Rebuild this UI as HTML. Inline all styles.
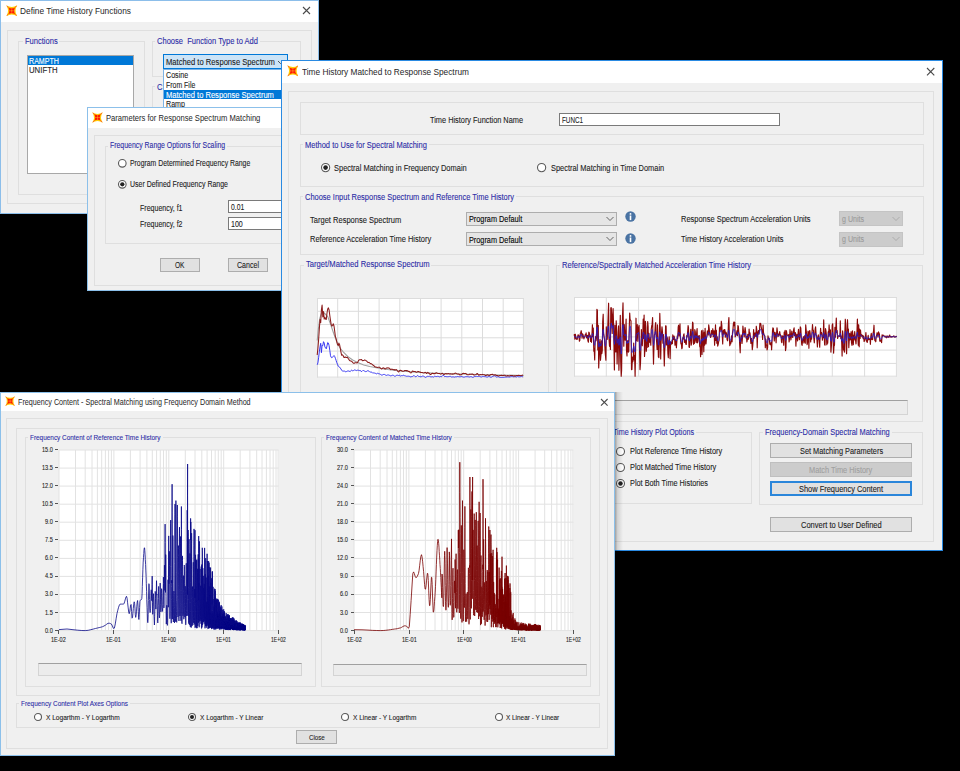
<!DOCTYPE html><html><head><meta charset="utf-8"><style>html,body{margin:0;padding:0;width:960px;height:771px;overflow:hidden;background:#000}.r,.t{position:absolute}.t{font-family:"Liberation Sans",sans-serif;white-space:pre;line-height:1;transform-origin:0 0;-webkit-text-stroke:0.1px currentColor}</style></head><body>
<div class="r" style="left:0.00px;top:0.00px;width:319.00px;height:214.00px;background:#f0f0f0;border:1px solid #8cbeea;box-sizing:border-box;"></div>
<div class="r" style="left:1.00px;top:1.00px;width:317.00px;height:21.00px;background:#fff;"></div>
<svg class="r" style="left:6.0px;top:4.5px" width="11.5" height="11.5" viewBox="0 0 24 24"><path d="M0.5,0.5 Q12,8 23.5,0.5 Q16,12 23.5,23.5 Q12,16 0.5,23.5 Q8,12 0.5,0.5Z" fill="#ffd200"/><path d="M1,1 L5,3.5 L3.5,5Z M23,1 L19,3.5 L20.5,5Z M1,23 L5,20.5 L3.5,19Z M23,23 L19,20.5 L20.5,19Z" fill="#ff4a3a"/><path d="M4.5,4.5 Q12,9.5 19.5,4.5 Q14.5,12 19.5,19.5 Q12,14.5 4.5,19.5 Q9.5,12 4.5,4.5Z" fill="#ff1800"/><path d="M12,5V19M5,12H19" stroke="#ff9a50" stroke-width="0.9"/><circle cx="12" cy="12" r="1.4" fill="#ffa000"/></svg>
<div class="t" style="left:20.20px;top:7px;font-size:9.3px;color:#262626;transform:scaleX(0.8948);-webkit-text-stroke:0">Define Time History Functions</div>
<svg class="r" style="left:301.7px;top:6.3px" width="9" height="9"><path d="M1,1 L8,8 M8,1 L1,8" stroke="#4a4a4a" stroke-width="1.1"/></svg>
<div class="r" style="left:7.00px;top:30.00px;width:305.00px;height:174.00px;border:1px solid #dfdfdf;box-sizing:border-box;"></div>
<div class="r" style="left:18.00px;top:41.00px;width:127.00px;height:154.00px;border:1px solid #dfdfdf;box-sizing:border-box;"></div>
<div class="r" style="left:22.50px;top:38.00px;width:36.70px;height:6.00px;background:#f0f0f0;"></div>
<div class="t" style="left:24.50px;top:37px;font-size:8.5px;color:#2c2ca6;transform:scaleX(0.8873)">Functions</div>
<div class="r" style="left:26.50px;top:54.60px;width:107.50px;height:119.90px;background:#fff;border:1px solid #a8a8a8;box-sizing:border-box;"></div>
<div class="r" style="left:27.50px;top:56.00px;width:105.50px;height:9.20px;background:#0078d7;"></div>
<div class="t" style="left:28.80px;top:57px;font-size:8.5px;color:#fff;transform:scaleX(0.8359)">RAMPTH</div>
<div class="t" style="left:28.80px;top:66px;font-size:8.5px;color:#1c1c1c;transform:scaleX(0.9146)">UNIFTH</div>
<div class="r" style="left:152.00px;top:41.00px;width:149.00px;height:36.00px;border:1px solid #dfdfdf;box-sizing:border-box;"></div>
<div class="r" style="left:155.40px;top:38.00px;width:105.00px;height:6.00px;background:#f0f0f0;"></div>
<div class="t" style="left:157.40px;top:37px;font-size:8.5px;color:#2c2ca6;transform:scaleX(0.8881)">Choose  Function Type to Add</div>
<div class="r" style="left:152.00px;top:86.00px;width:149.00px;height:125.00px;border:1px solid #dfdfdf;box-sizing:border-box;"></div>
<div class="r" style="left:155.00px;top:83.00px;width:15.00px;height:7.00px;background:#f0f0f0;"></div>
<div class="t" style="left:157.00px;top:83px;font-size:8.5px;color:#2c2ca6;transform:scaleX(0.8960)">C</div>
<div class="r" style="left:162.90px;top:54.30px;width:125.40px;height:14.90px;background:#cce4f7;border:1px solid #0078d7;box-sizing:border-box;"></div>
<div class="t" style="left:165.90px;top:58px;font-size:8.5px;color:#1c1c1c;transform:scaleX(0.8968)">Matched to Response Spectrum</div>
<svg class="r" style="left:277px;top:60px" width="7" height="5"><path d="M1,1 L3.5,3.5 L6,1" fill="none" stroke="#444" stroke-width="0.9"/></svg>
<div class="r" style="left:162.90px;top:69.00px;width:119.10px;height:43.00px;background:#fff;border:1px solid #7db3e6;box-sizing:border-box;"></div>
<div class="t" style="left:165.50px;top:71px;font-size:8.5px;color:#1c1c1c;transform:scaleX(0.8390)">Cosine</div>
<div class="t" style="left:165.50px;top:81px;font-size:8.5px;color:#1c1c1c;transform:scaleX(0.8164)">From File</div>
<div class="r" style="left:163.90px;top:90.20px;width:117.10px;height:9.30px;background:#0078d7;"></div>
<div class="t" style="left:165.50px;top:91px;font-size:8.5px;color:#fff;transform:scaleX(0.8886)">Matched to Response Spectrum</div>
<div class="t" style="left:165.50px;top:100px;font-size:8.5px;color:#1c1c1c;transform:scaleX(0.8379)">Ramp</div>
<div class="r" style="left:87.00px;top:107.00px;width:213.00px;height:184.00px;background:#f0f0f0;border:1px solid #8cc0ea;box-sizing:border-box;"></div>
<div class="r" style="left:88.00px;top:108.00px;width:211.00px;height:20.00px;background:#fff;"></div>
<svg class="r" style="left:92.3px;top:112.0px" width="11.0" height="11.0" viewBox="0 0 24 24"><path d="M0.5,0.5 Q12,8 23.5,0.5 Q16,12 23.5,23.5 Q12,16 0.5,23.5 Q8,12 0.5,0.5Z" fill="#ffd200"/><path d="M1,1 L5,3.5 L3.5,5Z M23,1 L19,3.5 L20.5,5Z M1,23 L5,20.5 L3.5,19Z M23,23 L19,20.5 L20.5,19Z" fill="#ff4a3a"/><path d="M4.5,4.5 Q12,9.5 19.5,4.5 Q14.5,12 19.5,19.5 Q12,14.5 4.5,19.5 Q9.5,12 4.5,4.5Z" fill="#ff1800"/><path d="M12,5V19M5,12H19" stroke="#ff9a50" stroke-width="0.9"/><circle cx="12" cy="12" r="1.4" fill="#ffa000"/></svg>
<div class="t" style="left:106.20px;top:114px;font-size:9.3px;color:#262626;transform:scaleX(0.8184);-webkit-text-stroke:0">Parameters for Response Spectrum Matching</div>
<div class="r" style="left:94.00px;top:135.00px;width:203.00px;height:151.00px;border:1px solid #dfdfdf;box-sizing:border-box;"></div>
<div class="r" style="left:105.00px;top:146.00px;width:192.00px;height:98.00px;border:1px solid #dfdfdf;box-sizing:border-box;"></div>
<div class="r" style="left:108.00px;top:142.60px;width:119.20px;height:6.00px;background:#f0f0f0;"></div>
<div class="t" style="left:110.00px;top:141px;font-size:8.5px;color:#2c2ca6;transform:scaleX(0.8127)">Frequency Range Options for Scaling</div>
<svg class="r" style="left:116.50px;top:158.00px" width="10.6" height="10.6"><circle cx="5.30" cy="5.30" r="3.80" fill="#fff" stroke="#5a5a5a" stroke-width="1.1"/></svg>
<div class="t" style="left:130.40px;top:159px;font-size:8.5px;color:#1c1c1c;transform:scaleX(0.8077)">Program Determined Frequency Range</div>
<svg class="r" style="left:116.50px;top:178.90px" width="10.6" height="10.6"><circle cx="5.30" cy="5.30" r="3.80" fill="#fff" stroke="#5a5a5a" stroke-width="1.1"/><circle cx="5.30" cy="5.30" r="2.15" fill="#222"/></svg>
<div class="t" style="left:130.40px;top:180px;font-size:8.5px;color:#1c1c1c;transform:scaleX(0.8190)">User Defined Frequency Range</div>
<div class="t" style="left:140.20px;top:204px;font-size:8.5px;color:#1c1c1c;transform:scaleX(0.8278)">Frequency, f1</div>
<div class="t" style="left:140.20px;top:220px;font-size:8.5px;color:#1c1c1c;transform:scaleX(0.8278)">Frequency, f2</div>
<div class="r" style="left:228.00px;top:200.20px;width:72.00px;height:12.60px;background:#fff;border:1px solid #7a7a7a;box-sizing:border-box;"></div>
<div class="t" style="left:230.50px;top:203px;font-size:8.5px;color:#1c1c1c;transform:scaleX(0.7979)">0.01</div>
<div class="r" style="left:228.00px;top:216.50px;width:72.00px;height:13.00px;background:#fff;border:1px solid #7a7a7a;box-sizing:border-box;"></div>
<div class="t" style="left:230.50px;top:220px;font-size:8.5px;color:#1c1c1c;transform:scaleX(0.8320)">100</div>
<div class="r" style="left:160.40px;top:258.20px;width:39.40px;height:13.70px;background:#e1e1e1;border:1px solid #adadad;box-sizing:border-box;"></div>
<div class="t" style="left:175.35px;top:261px;font-size:8.5px;color:#1c1c1c;transform:scaleX(0.7735)">OK</div>
<div class="r" style="left:228.40px;top:258.20px;width:39.40px;height:13.70px;background:#e1e1e1;border:1px solid #adadad;box-sizing:border-box;"></div>
<div class="t" style="left:237.10px;top:261px;font-size:8.5px;color:#1c1c1c;transform:scaleX(0.8315)">Cancel</div>
<div class="r" style="left:281.00px;top:60.00px;width:662.00px;height:491.00px;background:#f0f0f0;border:1px solid #2a8ae2;box-sizing:border-box;"></div>
<div class="r" style="left:282.00px;top:61.00px;width:660.00px;height:21.50px;background:#fff;"></div>
<svg class="r" style="left:286.8px;top:65.3px" width="11.7" height="11.7" viewBox="0 0 24 24"><path d="M0.5,0.5 Q12,8 23.5,0.5 Q16,12 23.5,23.5 Q12,16 0.5,23.5 Q8,12 0.5,0.5Z" fill="#ffd200"/><path d="M1,1 L5,3.5 L3.5,5Z M23,1 L19,3.5 L20.5,5Z M1,23 L5,20.5 L3.5,19Z M23,23 L19,20.5 L20.5,19Z" fill="#ff4a3a"/><path d="M4.5,4.5 Q12,9.5 19.5,4.5 Q14.5,12 19.5,19.5 Q12,14.5 4.5,19.5 Q9.5,12 4.5,4.5Z" fill="#ff1800"/><path d="M12,5V19M5,12H19" stroke="#ff9a50" stroke-width="0.9"/><circle cx="12" cy="12" r="1.4" fill="#ffa000"/></svg>
<div class="t" style="left:301.50px;top:68px;font-size:9.3px;color:#262626;transform:scaleX(0.8917);-webkit-text-stroke:0">Time History Matched to Response Spectrum</div>
<svg class="r" style="left:925.9px;top:67.2px" width="9.3" height="9.3"><path d="M1,1 L8.3,8.3 M8.3,1 L1,8.3" stroke="#4a4a4a" stroke-width="1.1"/></svg>
<div class="r" style="left:288.00px;top:91.00px;width:646.00px;height:451.00px;border:1px solid #dfdfdf;box-sizing:border-box;"></div>
<div class="r" style="left:300.00px;top:102.00px;width:624.00px;height:33.00px;border:1px solid #dfdfdf;box-sizing:border-box;"></div>
<div class="t" style="left:429.90px;top:116px;font-size:8.5px;color:#1c1c1c;transform:scaleX(0.8661)">Time History Function Name</div>
<div class="r" style="left:559.00px;top:113.00px;width:221.00px;height:13.20px;background:#fff;border:1px solid #7a7a7a;box-sizing:border-box;"></div>
<div class="t" style="left:561.50px;top:116px;font-size:8.5px;color:#1c1c1c;transform:scaleX(0.7411)">FUNC1</div>
<div class="r" style="left:300.00px;top:144.00px;width:624.00px;height:43.00px;border:1px solid #dfdfdf;box-sizing:border-box;"></div>
<div class="r" style="left:303.40px;top:141.40px;width:125.90px;height:6.00px;background:#f0f0f0;"></div>
<div class="t" style="left:305.40px;top:141px;font-size:8.5px;color:#2c2ca6;transform:scaleX(0.8836)">Method to Use for Spectral Matching</div>
<svg class="r" style="left:319.60px;top:162.10px" width="11.2" height="11.2"><circle cx="5.60" cy="5.60" r="4.10" fill="#fff" stroke="#5a5a5a" stroke-width="1.1"/><circle cx="5.60" cy="5.60" r="2.30" fill="#222"/></svg>
<div class="t" style="left:334.20px;top:164px;font-size:8.5px;color:#1c1c1c;transform:scaleX(0.8777)">Spectral Matching in Frequency Domain</div>
<svg class="r" style="left:535.70px;top:162.40px" width="11.2" height="11.2"><circle cx="5.60" cy="5.60" r="4.10" fill="#fff" stroke="#5a5a5a" stroke-width="1.1"/></svg>
<div class="t" style="left:550.50px;top:164px;font-size:8.5px;color:#1c1c1c;transform:scaleX(0.8745)">Spectral Matching in Time Domain</div>
<div class="r" style="left:300.00px;top:196.00px;width:624.00px;height:59.00px;border:1px solid #dfdfdf;box-sizing:border-box;"></div>
<div class="r" style="left:303.00px;top:193.30px;width:213.00px;height:6.00px;background:#f0f0f0;"></div>
<div class="t" style="left:305.00px;top:193px;font-size:8.5px;color:#2c2ca6;transform:scaleX(0.8794)">Choose Input Response Spectrum and Reference Time History</div>
<div class="t" style="left:309.60px;top:216px;font-size:8.5px;color:#1c1c1c;transform:scaleX(0.8854)">Target Response Spectrum</div>
<div class="t" style="left:309.60px;top:235px;font-size:8.5px;color:#1c1c1c;transform:scaleX(0.8816)">Reference Acceleration Time History</div>
<div class="r" style="left:465.80px;top:211.50px;width:151.20px;height:14.50px;background:#e5e5e5;border:1px solid #adadad;box-sizing:border-box;"></div>
<div class="t" style="left:468.80px;top:215px;font-size:8.5px;color:#000;transform:scaleX(0.8596)">Program Default</div>
<svg class="r" style="left:606.0px;top:215.8px" width="8" height="6"><path d="M0.5,1 L4,4.5 L7.5,1" fill="none" stroke="#555" stroke-width="0.9"/></svg>
<div class="r" style="left:465.80px;top:232.00px;width:151.20px;height:14.30px;background:#e5e5e5;border:1px solid #adadad;box-sizing:border-box;"></div>
<div class="t" style="left:468.80px;top:236px;font-size:8.5px;color:#000;transform:scaleX(0.8596)">Program Default</div>
<svg class="r" style="left:606.0px;top:236.2px" width="8" height="6"><path d="M0.5,1 L4,4.5 L7.5,1" fill="none" stroke="#555" stroke-width="0.9"/></svg>
<svg class="r" style="left:624.75px;top:210.80px" width="11" height="11"><circle cx="5.5" cy="5.5" r="5.2" fill="#4a73a3"/><circle cx="5.5" cy="2.9" r="0.95" fill="#fff"/><rect x="4.7" y="4.5" width="1.6" height="4.6" fill="#fff"/></svg>
<svg class="r" style="left:624.75px;top:233.30px" width="11" height="11"><circle cx="5.5" cy="5.5" r="5.2" fill="#4a73a3"/><circle cx="5.5" cy="2.9" r="0.95" fill="#fff"/><rect x="4.7" y="4.5" width="1.6" height="4.6" fill="#fff"/></svg>
<div class="t" style="left:680.80px;top:215px;font-size:8.5px;color:#1c1c1c;transform:scaleX(0.8785)">Response Spectrum Acceleration Units</div>
<div class="t" style="left:680.80px;top:235px;font-size:8.5px;color:#1c1c1c;transform:scaleX(0.8694)">Time History Acceleration Units</div>
<div class="r" style="left:839.30px;top:211.40px;width:63.70px;height:14.90px;background:#cccccc;border:1px solid #c4c4c4;box-sizing:border-box;"></div>
<div class="t" style="left:842.30px;top:215px;font-size:8.5px;color:#9a9a9a;transform:scaleX(0.8316)">g Units</div>
<svg class="r" style="left:892.0px;top:215.9px" width="8" height="6"><path d="M0.5,1 L4,4.5 L7.5,1" fill="none" stroke="#a8a8a8" stroke-width="0.9"/></svg>
<div class="r" style="left:839.30px;top:232.00px;width:63.70px;height:14.60px;background:#cccccc;border:1px solid #c4c4c4;box-sizing:border-box;"></div>
<div class="t" style="left:842.30px;top:235px;font-size:8.5px;color:#9a9a9a;transform:scaleX(0.8316)">g Units</div>
<svg class="r" style="left:892.0px;top:236.3px" width="8" height="6"><path d="M0.5,1 L4,4.5 L7.5,1" fill="none" stroke="#a8a8a8" stroke-width="0.9"/></svg>
<div class="r" style="left:300.00px;top:265.00px;width:249.00px;height:156.00px;border:1px solid #dfdfdf;box-sizing:border-box;"></div>
<div class="r" style="left:303.50px;top:261.60px;width:127.70px;height:6.00px;background:#f0f0f0;"></div>
<div class="t" style="left:305.50px;top:260px;font-size:8.5px;color:#2c2ca6;transform:scaleX(0.8966)">Target/Matched Response Spectrum</div>
<div class="r" style="left:556.00px;top:265.00px;width:367.00px;height:157.00px;border:1px solid #dfdfdf;box-sizing:border-box;"></div>
<div class="r" style="left:560.20px;top:262.00px;width:193.00px;height:6.00px;background:#f0f0f0;"></div>
<div class="t" style="left:562.20px;top:261px;font-size:8.5px;color:#2c2ca6;transform:scaleX(0.8910)">Reference/Spectrally Matched Acceleration Time History</div>
<div class="r" style="left:570.00px;top:400.00px;width:337.50px;height:14.80px;background:#ececec;border:1px solid #d4d4d4;box-sizing:border-box;border-top:1px solid #a0a0a0;"></div>
<div class="r" style="left:560.00px;top:432.00px;width:192.00px;height:72.00px;border:1px solid #dfdfdf;box-sizing:border-box;"></div>
<div class="r" style="left:611.20px;top:429.00px;width:85.00px;height:6.00px;background:#f0f0f0;"></div>
<div class="t" style="left:613.20px;top:428px;font-size:8.5px;color:#2c2ca6;transform:scaleX(0.8433)">Time History Plot Options</div>
<svg class="r" style="left:614.80px;top:445.70px" width="11.0" height="11.0"><circle cx="5.50" cy="5.50" r="4.00" fill="#fff" stroke="#5a5a5a" stroke-width="1.1"/></svg>
<div class="t" style="left:629.50px;top:447px;font-size:8.5px;color:#1c1c1c;transform:scaleX(0.8713)">Plot Reference Time History</div>
<svg class="r" style="left:614.80px;top:461.70px" width="11.0" height="11.0"><circle cx="5.50" cy="5.50" r="4.00" fill="#fff" stroke="#5a5a5a" stroke-width="1.1"/></svg>
<div class="t" style="left:629.50px;top:463px;font-size:8.5px;color:#1c1c1c;transform:scaleX(0.8700)">Plot Matched Time History</div>
<svg class="r" style="left:614.80px;top:477.80px" width="11.0" height="11.0"><circle cx="5.50" cy="5.50" r="4.00" fill="#fff" stroke="#5a5a5a" stroke-width="1.1"/><circle cx="5.50" cy="5.50" r="2.25" fill="#222"/></svg>
<div class="t" style="left:629.50px;top:479px;font-size:8.5px;color:#1c1c1c;transform:scaleX(0.8600)">Plot Both Time Histories</div>
<div class="r" style="left:759.00px;top:432.00px;width:164.00px;height:73.00px;border:1px solid #dfdfdf;box-sizing:border-box;"></div>
<div class="r" style="left:763.30px;top:429.10px;width:128.70px;height:6.00px;background:#f0f0f0;"></div>
<div class="t" style="left:765.30px;top:428px;font-size:8.5px;color:#2c2ca6;transform:scaleX(0.8740)">Frequency-Domain Spectral Matching</div>
<div class="r" style="left:770.00px;top:443.20px;width:142.10px;height:14.70px;background:#e1e1e1;border:1px solid #adadad;box-sizing:border-box;"></div>
<div class="t" style="left:799.50px;top:447px;font-size:8.5px;color:#1c1c1c;transform:scaleX(0.8665)">Set Matching Parameters</div>
<div class="r" style="left:770.00px;top:462.10px;width:142.10px;height:14.60px;background:#cccccc;border:1px solid #bfbfbf;box-sizing:border-box;"></div>
<div class="t" style="left:809.45px;top:466px;font-size:8.5px;color:#a0a0a0;transform:scaleX(0.8689)">Match Time History</div>
<div class="r" style="left:770.00px;top:481.20px;width:142.10px;height:14.60px;background:#e1e1e1;border:2px solid #2b86da;box-sizing:border-box;"></div>
<div class="t" style="left:799.05px;top:485px;font-size:8.5px;color:#1c1c1c;transform:scaleX(0.8757)">Show Frequency Content</div>
<div class="r" style="left:770.00px;top:516.90px;width:142.10px;height:14.80px;background:#e1e1e1;border:1px solid #adadad;box-sizing:border-box;"></div>
<div class="t" style="left:800.70px;top:521px;font-size:8.5px;color:#1c1c1c;transform:scaleX(0.8850)">Convert to User Defined</div>
<svg class="r" style="left:317.3px;top:297.5px;overflow:visible" width="206.9" height="79.6"><rect x="0" y="0" width="206.9" height="79.6" fill="#fff"/><path d="M0.5 0V79.6M20.7 0V79.6M41.4 0V79.6M62.1 0V79.6M82.8 0V79.6M103.5 0V79.6M124.1 0V79.6M144.8 0V79.6M165.5 0V79.6M186.2 0V79.6M206.4 0V79.6M0 0.5H206.9M0 13.3H206.9M0 26.5H206.9M0 39.8H206.9M0 53.1H206.9M0 66.3H206.9M0 79.1H206.9" stroke="#dcdcdc" stroke-width="1" fill="none"/><path d="M0.2 42.5L1.2 32.5L2.7 20.5L4.7 14.5L6.7 14.5L8.7 16.5L10.7 18.5L13.7 26.5L16.7 35.5L19.7 43.5L22.7 49.5L26.7 54.5L30.7 58.5L35.7 62.0L40.7 64.5L46.7 67.0L52.7 68.5L60.7 70.0L70.7 71.5L82.7 73.0L102.7 74.5L132.7 75.7L172.7 76.7L206.7 77.5" stroke="#a0a0a0" stroke-width="1.1" fill="none"/><path d="M0.2 66.8L0.9 64.9L1.6 59.8L2.3 53.9L3.0 48.8L3.7 45.3L4.4 54.7L5.1 47.2L5.8 47.6L6.5 43.7L7.2 45.0L7.9 48.9L8.6 50.0L9.3 50.8L10.0 47.8L10.7 44.5L11.4 45.1L12.1 47.7L12.8 52.3L13.5 57.7L14.2 59.3L14.9 59.8L15.6 59.2L16.3 58.4L17.0 57.5L17.7 58.5L18.4 60.3L19.1 62.4L19.8 64.7L20.5 66.3L21.2 68.2L21.9 68.6L22.6 69.1L23.3 70.1L24.0 71.0L24.7 72.4L25.4 72.9L26.1 73.1L26.8 73.1L27.5 73.1L28.2 73.5L28.9 73.9L29.6 73.5L30.3 73.1L31.0 73.0L31.7 73.0L32.4 73.3L33.1 73.7L33.8 72.7L34.5 72.2L35.2 72.6L35.9 72.9L36.6 72.5L37.3 72.0L38.0 71.9L38.7 72.3L39.4 72.6L40.1 72.2L40.8 72.2L41.5 72.3L42.2 72.6L42.9 72.5L43.6 72.6L44.3 73.6L45.0 73.3L45.7 72.6L46.4 72.5L47.1 72.8L47.8 73.3L48.5 73.6L49.2 73.5L49.9 73.3L50.6 72.7L51.3 72.8L52.0 73.2L52.7 73.9L53.4 74.1L54.1 73.8L54.8 74.3L55.5 75.0L56.2 75.1L56.9 74.7L57.6 75.1L58.3 75.3L59.0 75.5L59.7 75.9L60.4 75.3L61.1 75.4L61.8 75.8L62.5 75.9L63.2 76.1L63.9 76.8L64.6 77.1L65.3 77.0L66.0 76.8L66.7 76.4L67.4 76.4L68.1 77.1L68.8 77.0L69.5 77.4L70.2 77.1L70.9 76.9L71.6 77.0L72.3 77.3L73.0 77.4L73.7 77.9L74.4 77.7L75.1 77.3L75.8 77.2L76.5 77.4L77.2 77.9L77.9 78.4L78.6 78.0L79.3 77.4L80.0 77.5L80.7 77.2L81.4 77.5L82.1 77.2L82.8 77.5L83.5 78.0L84.2 77.7L84.9 77.6L85.6 77.8L86.3 77.1L87.0 77.2L87.7 78.0L88.4 77.9L89.1 78.1L89.8 78.3L90.5 78.2L91.2 78.2L91.9 78.2L92.6 78.4L93.3 78.8L94.0 78.8L94.7 78.6L95.4 78.5L96.1 78.0L96.8 77.7L97.5 77.8L98.2 78.6L98.9 78.9L99.6 78.2L100.3 77.5L101.0 77.8L101.7 78.4L102.4 78.5L103.1 78.6L103.8 78.8L104.5 78.6L105.2 78.1L105.9 78.2L106.6 78.2L107.3 78.6L108.0 79.2L108.7 79.4L109.4 78.9L110.1 78.4L110.8 78.3L111.5 78.4L112.2 78.2L112.9 78.4L113.6 78.8L114.3 78.9L115.0 78.6L115.7 78.8L116.4 79.1L117.1 78.6L117.8 78.1L118.5 78.4L119.2 78.6L119.9 78.4L120.6 78.3L121.3 78.3L122.0 78.8L122.7 78.8L123.4 78.5L124.1 78.6L124.8 78.5L125.5 77.9L126.2 77.2L126.9 77.5L127.6 78.6L128.3 78.5L129.0 78.5L129.7 78.7L130.4 78.7L131.1 78.8L131.8 78.5L132.5 78.4L133.2 78.2L133.9 78.7L134.6 79.0L135.3 78.9L136.0 78.9L136.7 78.9L137.4 79.1L138.1 79.0L138.8 78.7L139.5 78.8L140.2 78.5L140.9 78.6L141.6 78.7L142.3 78.8L143.0 78.7L143.7 78.7L144.4 78.5L145.1 78.5L145.8 79.0L146.5 79.1L147.2 79.1L147.9 78.9L148.6 78.7L149.3 78.7L150.0 78.6L150.7 78.7L151.4 78.8L152.1 78.9L152.8 79.0L153.5 78.7L154.2 78.6L154.9 79.0L155.6 79.3L156.3 79.2L157.0 78.9L157.7 78.4L158.4 78.5L159.1 78.5L159.8 78.2L160.5 78.5L161.2 78.5L161.9 78.2L162.6 78.4L163.3 78.7L164.0 79.0L164.7 78.9L165.4 78.4L166.1 78.3L166.8 78.5L167.5 78.6L168.2 78.6L168.9 78.8L169.6 79.0L170.3 79.1L171.0 78.8L171.7 78.5L172.4 78.6L173.1 79.0L173.8 79.2L174.5 79.1L175.2 78.6L175.9 78.4L176.6 78.1L177.3 77.8L178.0 78.0L178.7 78.4L179.4 79.0L180.1 79.0L180.8 78.7L181.5 78.8L182.2 79.1L182.9 79.4L183.6 79.4L184.3 79.4L185.0 79.3L185.7 79.4L186.4 79.4L187.1 79.3L187.8 79.1L188.5 79.1L189.2 79.0L189.9 79.1L190.6 78.9L191.3 78.9L192.0 79.2L192.7 79.0L193.4 78.8L194.1 78.6L194.8 78.6L195.5 78.6L196.2 78.7L196.9 79.0L197.6 78.7L198.3 78.7L199.0 79.0L199.7 78.9L200.4 78.4L201.1 78.6L201.8 78.9L202.5 78.8L203.2 78.7L203.9 78.6L204.6 78.3L205.3 78.6L206.0 79.0" stroke="#3030f0" stroke-width="0.95" fill="none" stroke-linejoin="round"/><path d="M0.2 57.0L0.9 50.4L1.6 41.7L2.3 31.2L3.0 21.5L3.7 24.7L4.4 11.9L5.1 7.0L5.8 19.0L6.5 13.6L7.2 21.1L7.9 19.2L8.6 21.2L9.3 21.4L10.0 15.0L10.7 11.0L11.4 9.9L12.1 12.0L12.8 17.5L13.5 22.3L14.2 26.6L14.9 28.1L15.6 27.3L16.3 25.8L17.0 28.0L17.7 33.1L18.4 38.6L19.1 40.6L19.8 43.8L20.5 46.6L21.2 47.5L21.9 45.1L22.6 46.6L23.3 50.4L24.0 54.3L24.7 57.3L25.4 56.8L26.1 57.5L26.8 59.2L27.5 59.5L28.2 58.9L28.9 59.4L29.6 59.5L30.3 59.3L31.0 60.2L31.7 61.2L32.4 62.2L33.1 62.7L33.8 62.9L34.5 63.2L35.2 63.8L35.9 64.6L36.6 65.3L37.3 65.3L38.0 64.7L38.7 64.7L39.4 64.7L40.1 65.0L40.8 64.1L41.5 62.6L42.2 61.8L42.9 61.7L43.6 61.8L44.3 61.5L45.0 62.1L45.7 62.8L46.4 62.6L47.1 62.4L47.8 61.9L48.5 62.4L49.2 62.8L49.9 63.2L50.6 64.3L51.3 64.4L52.0 64.3L52.7 65.0L53.4 65.7L54.1 65.6L54.8 66.1L55.5 66.6L56.2 67.3L56.9 67.7L57.6 68.5L58.3 68.9L59.0 69.0L59.7 69.2L60.4 69.4L61.1 69.3L61.8 69.2L62.5 69.2L63.2 69.8L63.9 70.5L64.6 71.0L65.3 70.6L66.0 69.7L66.7 69.9L67.4 70.5L68.1 71.0L68.8 70.7L69.5 69.9L70.2 69.9L70.9 69.7L71.6 69.9L72.3 70.2L73.0 70.9L73.7 71.6L74.4 71.2L75.1 71.1L75.8 71.6L76.5 71.8L77.2 71.5L77.9 72.1L78.6 71.7L79.3 71.5L80.0 72.2L80.7 73.2L81.4 74.0L82.1 73.4L82.8 72.4L83.5 72.2L84.2 72.4L84.9 73.1L85.6 73.3L86.3 73.2L87.0 73.1L87.7 72.4L88.4 72.4L89.1 72.6L89.8 72.6L90.5 72.7L91.2 73.4L91.9 73.3L92.6 73.7L93.3 74.6L94.0 75.0L94.7 74.3L95.4 73.1L96.1 73.3L96.8 73.6L97.5 73.5L98.2 73.6L98.9 73.9L99.6 74.3L100.3 73.9L101.0 73.4L101.7 73.5L102.4 73.9L103.1 74.0L103.8 74.5L104.5 74.5L105.2 74.5L105.9 74.8L106.6 74.9L107.3 74.9L108.0 74.3L108.7 74.4L109.4 75.5L110.1 75.1L110.8 74.4L111.5 75.2L112.2 75.3L112.9 76.2L113.6 76.6L114.3 76.0L115.0 75.4L115.7 75.2L116.4 75.6L117.1 75.6L117.8 75.8L118.5 75.3L119.2 74.7L119.9 75.0L120.6 75.4L121.3 75.4L122.0 75.5L122.7 75.6L123.4 76.1L124.1 75.9L124.8 75.6L125.5 75.3L126.2 76.1L126.9 76.6L127.6 76.3L128.3 75.7L129.0 75.5L129.7 76.0L130.4 75.9L131.1 75.5L131.8 75.7L132.5 75.9L133.2 75.8L133.9 76.0L134.6 76.1L135.3 76.2L136.0 75.8L136.7 75.9L137.4 75.7L138.1 75.1L138.8 75.2L139.5 75.6L140.2 76.1L140.9 76.0L141.6 76.0L142.3 76.5L143.0 77.0L143.7 76.7L144.4 76.7L145.1 76.0L145.8 75.4L146.5 75.3L147.2 75.4L147.9 75.5L148.6 75.4L149.3 75.9L150.0 76.7L150.7 76.7L151.4 76.7L152.1 76.7L152.8 76.1L153.5 76.2L154.2 76.2L154.9 76.1L155.6 76.1L156.3 76.5L157.0 77.0L157.7 77.0L158.4 76.8L159.1 76.5L159.8 75.7L160.5 75.5L161.2 76.7L161.9 77.3L162.6 76.9L163.3 76.5L164.0 76.7L164.7 76.8L165.4 76.4L166.1 76.6L166.8 76.7L167.5 76.8L168.2 77.4L168.9 77.5L169.6 77.3L170.3 76.8L171.0 77.0L171.7 77.4L172.4 77.4L173.1 77.1L173.8 76.5L174.5 76.4L175.2 76.3L175.9 76.6L176.6 77.0L177.3 76.9L178.0 76.8L178.7 77.1L179.4 77.4L180.1 77.4L180.8 77.6L181.5 77.9L182.2 77.8L182.9 77.4L183.6 77.4L184.3 77.2L185.0 77.4L185.7 77.6L186.4 77.4L187.1 77.2L187.8 77.2L188.5 77.7L189.2 78.0L189.9 77.9L190.6 77.6L191.3 77.8L192.0 78.0L192.7 77.9L193.4 77.6L194.1 77.5L194.8 77.4L195.5 77.5L196.2 77.9L196.9 77.9L197.6 77.8L198.3 78.0L199.0 77.7L199.7 77.5L200.4 77.6L201.1 77.4L201.8 77.2L202.5 77.4L203.2 77.6L203.9 77.8L204.6 77.5L205.3 77.1L206.0 77.2" stroke="#8b1c1c" stroke-width="1.05" fill="none" stroke-linejoin="round"/></svg>
<svg class="r" style="left:574.4px;top:297.4px;overflow:visible" width="322.9" height="79.7"><rect x="0" y="0" width="322.9" height="79.7" fill="#fff"/><path d="M0.5 0V79.7M32.3 0V79.7M64.6 0V79.7M96.9 0V79.7M129.2 0V79.7M161.4 0V79.7M193.7 0V79.7M226.0 0V79.7M258.3 0V79.7M290.6 0V79.7M322.4 0V79.7M0 0.5H322.9M0 13.3H322.9M0 26.6H322.9M0 39.9H322.9M0 53.1H322.9M0 66.4H322.9M0 79.2H322.9" stroke="#dcdcdc" stroke-width="1" fill="none"/><path d="M0.0 38.5L0.4 37.5L0.9 42.1L1.3 37.2L1.8 39.6L2.2 41.8L2.7 42.2L3.1 42.5L3.6 40.4L4.0 37.9L4.5 38.0L4.9 38.9L5.4 44.1L5.8 43.5L6.3 36.5L6.7 35.9L7.2 33.7L7.6 36.4L8.1 41.2L8.5 36.8L9.0 37.6L9.4 39.4L9.9 41.9L10.3 40.3L10.8 39.8L11.2 37.5L11.7 38.2L12.1 35.9L12.6 40.9L13.0 38.6L13.5 38.4L13.9 43.9L14.4 45.2L14.8 35.2L15.3 35.9L15.7 39.8L16.2 38.2L16.6 44.4L17.1 39.9L17.5 45.3L18.0 36.8L18.4 27.7L18.9 39.7L19.3 31.1L19.8 54.2L20.2 51.6L20.7 63.0L21.1 45.5L21.6 39.5L22.0 43.8L22.5 40.7L22.9 12.3L23.4 13.8L23.8 53.0L24.3 28.4L24.7 71.0L25.1 61.0L25.6 45.7L26.0 42.3L26.5 63.3L26.9 58.4L27.4 43.9L27.8 56.6L28.3 53.5L28.7 24.5L29.2 17.2L29.6 37.2L30.1 39.8L30.5 42.2L31.0 52.4L31.4 58.0L31.9 63.2L32.3 29.8L32.8 39.6L33.2 42.5L33.7 33.5L34.1 20.6L34.6 6.2L35.0 41.6L35.5 49.3L35.9 40.7L36.4 52.5L36.8 10.9L37.3 10.7L37.7 20.9L38.2 36.4L38.6 19.5L39.1 11.6L39.5 25.8L40.0 50.7L40.4 72.9L40.9 28.2L41.3 46.8L41.8 55.0L42.2 23.8L42.7 35.1L43.1 66.9L43.6 48.1L44.0 41.8L44.5 28.9L44.9 73.3L45.4 54.2L45.8 38.8L46.3 18.3L46.7 64.7L47.2 79.3L47.6 73.5L48.1 37.2L48.5 19.1L49.0 5.9L49.4 29.9L49.8 49.2L50.3 27.6L50.7 37.9L51.2 43.1L51.6 36.2L52.1 22.0L52.5 53.5L53.0 58.9L53.4 44.2L53.9 43.5L54.3 55.1L54.8 54.4L55.2 32.8L55.7 16.0L56.1 22.7L56.6 23.2L57.0 24.0L57.5 72.6L57.9 72.7L58.4 60.0L58.8 65.0L59.3 60.0L59.7 46.1L60.2 63.0L60.6 58.5L61.1 79.3L61.5 59.3L62.0 21.2L62.4 43.8L62.9 33.4L63.3 27.6L63.8 44.3L64.2 30.1L64.7 31.3L65.1 28.4L65.6 54.3L66.0 72.6L66.5 66.0L66.9 52.0L67.4 32.6L67.8 43.2L68.3 48.6L68.7 40.7L69.2 22.0L69.6 41.3L70.1 18.1L70.5 59.4L71.0 52.2L71.4 24.3L71.9 30.2L72.3 54.3L72.8 47.4L73.2 50.4L73.7 24.6L74.1 29.3L74.5 49.7L75.0 36.3L75.4 45.4L75.9 42.2L76.3 40.9L76.8 48.2L77.2 32.7L77.7 29.0L78.1 27.4L78.6 20.5L79.0 45.7L79.5 67.1L79.9 52.0L80.4 38.0L80.8 37.1L81.3 28.0L81.7 25.6L82.2 39.6L82.6 44.8L83.1 52.4L83.5 27.8L84.0 44.0L84.4 60.0L84.9 60.6L85.3 44.7L85.8 16.4L86.2 29.2L86.7 62.0L87.1 45.4L87.6 34.9L88.0 29.9L88.5 35.4L88.9 46.2L89.4 37.6L89.8 50.8L90.3 69.0L90.7 54.3L91.2 47.0L91.6 28.8L92.1 29.0L92.5 48.0L93.0 39.9L93.4 41.3L93.9 56.5L94.3 60.7L94.8 43.8L95.2 39.9L95.7 48.6L96.1 61.7L96.6 44.8L97.0 45.3L97.5 47.1L97.9 44.5L98.4 46.6L98.8 37.8L99.3 39.8L99.7 42.6L100.1 39.0L100.6 41.3L101.0 48.1L101.5 42.7L101.9 44.4L102.4 50.8L102.8 45.0L103.3 38.8L103.7 41.4L104.2 30.2L104.6 28.2L105.1 39.0L105.5 34.3L106.0 26.9L106.4 40.6L106.9 46.8L107.3 45.7L107.8 51.7L108.2 51.0L108.7 40.8L109.1 42.3L109.6 37.9L110.0 36.9L110.5 45.4L110.9 43.0L111.4 43.4L111.8 47.1L112.3 47.5L112.7 38.7L113.2 40.0L113.6 35.4L114.1 28.5L114.5 30.7L115.0 49.9L115.4 50.5L115.9 43.7L116.3 37.4L116.8 32.3L117.2 48.2L117.7 45.4L118.1 36.0L118.6 25.1L119.0 26.2L119.5 47.3L119.9 45.1L120.4 46.4L120.8 32.5L121.3 34.8L121.7 43.5L122.2 45.7L122.6 36.5L123.1 31.6L123.5 45.8L124.0 44.0L124.4 39.4L124.8 38.9L125.3 38.5L125.7 49.4L126.2 50.6L126.6 59.7L127.1 41.2L127.5 33.7L128.0 57.5L128.4 47.4L128.9 33.2L129.3 42.8L129.8 54.8L130.2 35.2L130.7 48.1L131.1 31.3L131.6 43.8L132.0 46.9L132.5 40.8L132.9 39.0L133.4 33.9L133.8 34.8L134.3 38.1L134.7 27.8L135.2 31.3L135.6 36.2L136.1 38.4L136.5 40.5L137.0 39.6L137.4 33.6L137.9 34.7L138.3 37.1L138.8 31.7L139.2 39.7L139.7 35.2L140.1 33.7L140.6 48.2L141.0 41.2L141.5 27.8L141.9 43.4L142.4 33.4L142.8 46.3L143.3 39.9L143.7 49.1L144.2 47.3L144.6 44.9L145.1 43.4L145.5 30.9L146.0 29.9L146.4 30.9L146.9 34.2L147.3 24.2L147.8 28.1L148.2 37.1L148.7 47.0L149.1 34.7L149.5 33.1L150.0 36.9L150.4 32.5L150.9 32.7L151.3 40.2L151.8 35.0L152.2 35.6L152.7 37.3L153.1 42.8L153.6 43.8L154.0 37.4L154.5 25.2L154.9 20.6L155.4 40.8L155.8 48.6L156.3 45.0L156.7 46.9L157.2 43.4L157.6 38.9L158.1 44.8L158.5 35.9L159.0 31.9L159.4 26.7L159.9 25.0L160.3 28.6L160.8 25.2L161.2 39.9L161.7 38.5L162.1 38.0L162.6 35.8L163.0 33.5L163.5 38.6L163.9 28.5L164.4 29.8L164.8 35.7L165.3 37.7L165.7 47.9L166.2 55.8L166.6 42.8L167.1 37.8L167.5 39.3L168.0 46.5L168.4 41.7L168.9 29.1L169.3 32.8L169.8 35.7L170.2 40.0L170.7 34.3L171.1 30.6L171.6 34.4L172.0 41.0L172.5 39.5L172.9 44.9L173.4 41.8L173.8 37.3L174.2 42.4L174.7 40.1L175.1 32.0L175.6 38.3L176.0 35.9L176.5 41.9L176.9 46.5L177.4 41.4L177.8 44.0L178.3 52.8L178.7 49.2L179.2 41.8L179.6 32.5L180.1 41.4L180.5 39.8L181.0 35.9L181.4 37.8L181.9 39.5L182.3 29.2L182.8 33.1L183.2 50.8L183.7 36.4L184.1 34.7L184.6 33.6L185.0 37.3L185.5 33.0L185.9 26.3L186.4 26.3L186.8 26.9L187.3 31.0L187.7 32.5L188.2 34.7L188.6 42.5L189.1 28.1L189.5 35.7L190.0 37.5L190.4 38.2L190.9 39.2L191.3 50.7L191.8 42.1L192.2 47.6L192.7 48.5L193.1 52.9L193.6 50.6L194.0 38.8L194.5 42.0L194.9 41.0L195.4 42.0L195.8 47.1L196.3 46.3L196.7 47.9L197.2 45.2L197.6 52.8L198.1 43.3L198.5 33.9L198.9 30.9L199.4 31.6L199.8 36.9L200.3 43.9L200.7 35.3L201.2 35.7L201.6 39.1L202.1 45.8L202.5 37.4L203.0 30.8L203.4 34.4L203.9 39.7L204.3 37.0L204.8 39.0L205.2 37.9L205.7 34.6L206.1 36.9L206.6 38.7L207.0 38.5L207.5 45.0L207.9 45.7L208.4 38.8L208.8 42.0L209.3 39.3L209.7 48.2L210.2 35.2L210.6 37.4L211.1 33.3L211.5 53.6L212.0 50.3L212.4 33.7L212.9 37.2L213.3 37.8L213.8 38.6L214.2 38.2L214.7 37.7L215.1 45.0L215.6 40.4L216.0 32.6L216.5 38.1L216.9 42.9L217.4 38.8L217.8 34.1L218.3 40.0L218.7 40.5L219.2 36.4L219.6 33.0L220.1 30.8L220.5 38.6L221.0 36.9L221.4 35.6L221.9 49.1L222.3 40.5L222.8 37.2L223.2 40.6L223.6 44.0L224.1 36.1L224.5 32.3L225.0 39.4L225.4 42.7L225.9 39.8L226.3 29.9L226.8 31.0L227.2 39.3L227.7 47.2L228.1 48.4L228.6 43.2L229.0 41.5L229.5 39.7L229.9 45.9L230.4 41.0L230.8 38.6L231.3 46.2L231.7 27.8L232.2 33.3L232.6 37.4L233.1 47.6L233.5 45.8L234.0 34.0L234.4 36.1L234.9 51.3L235.3 34.8L235.8 33.5L236.2 36.4L236.7 45.0L237.1 40.0L237.6 42.2L238.0 34.9L238.5 27.6L238.9 32.7L239.4 33.3L239.8 41.4L240.3 45.8L240.7 39.4L241.2 31.8L241.6 29.8L242.1 37.9L242.5 38.5L243.0 43.5L243.4 49.9L243.9 40.5L244.3 37.8L244.8 41.7L245.2 43.0L245.7 50.2L246.1 39.6L246.6 31.3L247.0 37.4L247.5 35.5L247.9 37.0L248.4 43.2L248.8 40.0L249.2 40.8L249.7 22.8L250.1 36.2L250.6 47.5L251.0 48.2L251.5 31.6L251.9 33.6L252.4 37.9L252.8 47.8L253.3 45.8L253.7 46.2L254.2 34.8L254.6 39.1L255.1 27.8L255.5 34.1L256.0 39.2L256.4 32.9L256.9 55.1L257.3 50.2L257.8 42.4L258.2 28.3L258.7 26.8L259.1 37.2L259.6 56.1L260.0 49.3L260.5 48.3L260.9 30.4L261.4 40.1L261.8 31.3L262.3 21.1L262.7 35.4L263.2 33.6L263.6 41.5L264.1 39.4L264.5 38.8L265.0 38.9L265.4 39.3L265.9 39.5L266.3 23.8L266.8 41.6L267.2 38.7L267.7 45.6L268.1 59.1L268.6 33.9L269.0 37.9L269.5 53.0L269.9 51.4L270.4 55.1L270.8 36.8L271.3 22.2L271.7 27.6L272.2 52.3L272.6 56.7L273.1 34.6L273.5 22.7L273.9 34.1L274.4 32.0L274.8 50.7L275.3 42.2L275.7 36.3L276.2 42.9L276.6 41.1L277.1 34.7L277.5 45.9L278.0 48.5L278.4 33.9L278.9 37.7L279.3 47.6L279.8 38.3L280.2 42.9L280.7 34.6L281.1 39.0L281.6 43.6L282.0 46.9L282.5 39.1L282.9 36.3L283.4 22.1L283.8 39.0L284.3 48.3L284.7 27.7L285.2 49.8L285.6 32.0L286.1 41.5L286.5 33.1L287.0 38.8L287.4 37.6L287.9 39.3L288.3 39.8L288.8 38.2L289.2 41.6L289.7 39.2L290.1 44.4L290.6 44.0L291.0 42.5L291.5 39.6L291.9 35.6L292.4 42.9L292.8 44.8L293.3 45.3L293.7 41.9L294.2 38.4L294.6 42.6L295.1 42.0L295.5 42.3L296.0 41.5L296.4 47.3L296.9 38.3L297.3 36.4L297.8 42.5L298.2 41.4L298.6 42.7L299.1 36.1L299.5 34.5L300.0 28.2L300.4 39.1L300.9 43.7L301.3 43.2L301.8 44.8L302.2 39.7L302.7 37.8L303.1 35.7L303.6 37.9L304.0 40.1L304.5 34.8L304.9 36.1L305.4 37.1L305.8 44.1L306.3 44.2L306.7 43.0L307.2 42.9L307.6 45.7L308.1 37.9L308.5 39.4L309.0 38.2L309.4 38.3L309.9 38.4L310.3 39.2L310.8 39.6L311.2 40.2L311.7 39.6L312.1 38.9L312.6 40.8L313.0 40.4L313.5 39.5L313.9 38.9L314.4 40.3L314.8 40.2L315.3 39.4L315.7 38.0L316.2 40.0L316.6 39.9L317.1 39.5L317.5 40.1L318.0 39.6L318.4 39.6L318.9 39.9L319.3 39.5L319.8 38.8L320.2 39.6L320.7 40.1L321.1 40.2L321.6 39.7L322.0 39.3L322.5 39.6L322.9 39.6" stroke="#8b0a0a" stroke-width="1.15" fill="none" stroke-linejoin="round"/><path d="M0.0 39.0L0.4 39.3L0.9 39.6L1.3 39.5L1.8 39.8L2.2 40.6L2.7 41.1L3.1 40.9L3.6 40.1L4.0 39.3L4.5 39.2L4.9 40.0L5.4 41.1L5.8 40.7L6.3 38.9L6.7 37.5L7.2 37.2L7.6 38.1L8.1 38.9L8.5 38.9L9.0 38.9L9.4 39.6L9.9 40.2L10.3 40.1L10.8 39.6L11.2 38.9L11.7 38.6L12.1 38.7L12.6 39.2L13.0 39.5L13.5 40.1L13.9 41.2L14.4 40.9L14.8 39.1L15.3 38.4L15.7 39.0L16.2 40.0L16.6 40.9L17.1 41.1L17.5 40.5L18.0 38.1L18.4 36.4L18.9 37.2L19.3 39.8L19.8 44.4L20.2 48.0L20.7 48.4L21.1 45.1L21.6 41.9L22.0 40.2L22.5 35.8L22.9 30.1L23.4 31.3L23.8 37.7L24.3 43.3L24.7 49.3L25.1 50.1L25.6 46.5L26.0 46.1L26.5 48.9L26.9 49.0L27.4 47.1L27.8 46.5L28.3 42.7L28.7 35.3L29.2 32.3L29.6 35.6L30.1 39.5L30.5 42.7L31.0 46.6L31.4 49.2L31.9 47.0L32.3 41.5L32.8 39.2L33.2 38.5L33.7 34.8L34.1 29.6L34.6 29.4L35.0 36.2L35.5 41.7L35.9 42.2L36.4 38.1L36.8 30.0L37.3 26.2L37.7 28.9L38.2 31.3L38.6 29.3L39.1 28.4L39.5 34.3L40.0 43.9L40.4 47.4L40.9 43.6L41.3 42.6L41.8 41.8L42.2 38.6L42.7 41.1L43.1 46.4L43.6 45.6L44.0 41.9L44.5 43.2L44.9 48.3L45.4 47.0L45.8 40.5L46.3 40.1L46.7 49.5L47.2 57.0L47.6 53.2L48.1 41.3L48.5 30.5L49.0 27.6L49.4 32.8L49.8 37.7L50.3 37.7L50.7 38.2L51.2 38.9L51.6 37.3L52.1 37.8L52.5 43.3L53.0 46.6L53.4 45.1L53.9 44.7L54.3 46.0L54.8 43.8L55.2 36.7L55.7 30.6L56.1 29.2L56.6 31.4L57.0 38.9L57.5 50.3L57.9 55.7L58.4 54.8L58.8 53.1L59.3 50.8L59.7 49.2L60.2 51.0L60.6 54.2L61.1 55.0L61.5 48.3L62.0 39.9L62.4 37.5L62.9 36.7L63.3 36.4L63.8 37.2L64.2 36.2L64.7 35.4L65.1 38.8L65.6 47.0L66.0 53.6L66.5 52.8L66.9 46.7L67.4 41.6L67.8 41.3L68.3 41.8L68.7 38.8L69.2 35.6L69.6 35.2L70.1 37.5L70.5 42.6L71.0 42.4L71.4 37.6L71.9 38.1L72.3 42.8L72.8 44.4L73.2 41.4L73.7 36.8L74.1 36.8L74.5 39.9L75.0 40.9L75.4 41.4L75.9 41.5L76.3 41.6L76.8 40.7L77.2 37.4L77.7 34.1L78.1 32.5L78.6 34.8L79.0 42.3L79.5 48.3L79.9 46.5L80.4 41.3L80.8 37.2L81.3 34.5L81.7 34.8L82.2 38.4L82.6 42.0L83.1 42.0L83.5 40.2L84.0 43.1L84.4 48.0L84.9 47.7L85.3 41.0L85.8 34.9L86.2 37.5L86.7 43.5L87.1 42.9L87.6 38.6L88.0 36.6L88.5 38.1L88.9 40.5L89.4 42.6L89.8 47.1L90.3 50.7L90.7 48.5L91.2 42.7L91.6 37.5L92.1 37.1L92.5 40.0L93.0 41.5L93.4 43.5L93.9 47.2L94.3 47.9L94.8 44.7L95.2 43.1L95.7 45.5L96.1 47.3L96.6 45.5L97.0 43.8L97.5 43.5L97.9 43.1L98.4 42.1L98.8 40.6L99.3 40.1L99.7 40.4L100.1 40.5L100.6 41.5L101.0 42.6L101.5 42.8L101.9 43.4L102.4 44.0L102.8 42.7L103.3 40.6L103.7 38.5L104.2 36.0L104.6 35.4L105.1 36.4L105.5 36.2L106.0 36.2L106.4 39.2L106.9 42.4L107.3 44.3L107.8 45.4L108.2 44.7L108.7 42.4L109.1 40.6L109.6 39.6L110.0 39.9L110.5 41.3L110.9 42.1L111.4 42.6L111.8 43.3L112.3 42.7L112.7 40.8L113.2 39.0L113.6 36.9L114.1 35.5L114.5 37.7L115.0 42.2L115.4 44.0L115.9 42.0L116.3 39.4L116.8 39.2L117.2 41.3L117.7 41.1L118.1 37.4L118.6 34.2L119.0 35.6L119.5 40.1L119.9 42.4L120.4 41.2L120.8 38.6L121.3 38.5L121.7 40.5L122.2 40.8L122.6 39.0L123.1 38.6L123.5 40.6L124.0 41.3L124.4 40.3L124.8 39.8L125.3 41.2L125.7 44.1L126.2 46.7L126.6 46.5L127.1 43.1L127.5 42.0L128.0 44.2L128.4 43.2L128.9 40.8L129.3 41.9L129.8 43.2L130.2 41.9L130.7 40.5L131.1 39.7L131.6 40.9L132.0 41.9L132.5 40.9L132.9 39.0L133.4 37.5L133.8 37.1L134.3 36.5L134.7 35.2L135.2 35.4L135.6 37.1L136.1 38.7L136.5 39.4L137.0 38.8L137.4 37.5L137.9 37.1L138.3 37.1L138.8 37.1L139.2 37.7L139.7 37.8L140.1 38.9L140.6 40.6L141.0 39.5L141.5 37.7L141.9 38.3L142.4 39.4L142.8 40.9L143.3 42.2L143.7 43.5L144.2 43.8L144.6 42.6L145.1 40.1L145.5 36.7L146.0 34.8L146.4 34.6L146.9 34.2L147.3 33.2L147.8 34.4L148.2 37.8L148.7 39.8L149.1 38.5L149.5 37.0L150.0 36.7L150.4 36.4L150.9 36.8L151.3 37.8L151.8 37.8L152.2 37.9L152.7 39.0L153.1 40.5L153.6 40.3L154.0 37.2L154.5 33.4L154.9 33.5L155.4 38.3L155.8 42.4L156.3 43.5L156.7 43.1L157.2 41.9L157.6 40.9L158.1 40.2L158.5 38.0L159.0 35.1L159.4 32.9L159.9 32.0L160.3 32.4L160.8 34.1L161.2 37.1L161.7 38.6L162.1 38.4L162.6 37.6L163.0 37.1L163.5 36.5L163.9 35.1L164.4 35.1L164.8 37.0L165.3 40.1L165.7 43.7L166.2 45.1L166.6 42.8L167.1 40.5L167.5 40.6L168.0 41.2L168.4 39.4L168.9 36.6L169.3 36.1L169.8 37.3L170.2 37.9L170.7 36.9L171.1 36.1L171.6 37.2L172.0 39.1L172.5 40.5L172.9 41.2L173.4 40.8L173.8 40.0L174.2 39.9L174.7 39.0L175.1 37.7L175.6 37.9L176.0 38.9L176.5 40.7L176.9 42.0L177.4 42.3L177.8 43.5L178.3 45.0L178.7 44.2L179.2 41.1L179.6 38.9L180.1 39.1L180.5 39.2L181.0 38.6L181.4 38.4L181.9 37.6L182.3 36.5L182.8 38.1L183.2 40.5L183.7 39.4L184.1 37.4L184.6 36.9L185.0 36.7L185.5 35.2L185.9 33.1L186.4 32.2L186.8 32.8L187.3 34.1L187.7 35.7L188.2 37.2L188.6 37.6L189.1 36.5L189.5 36.8L190.0 38.1L190.4 39.2L190.9 41.1L191.3 42.9L191.8 43.4L192.2 44.1L192.7 45.4L193.1 46.0L193.6 44.6L194.0 42.0L194.5 40.9L194.9 41.0L195.4 41.9L195.8 43.2L196.3 43.9L196.7 44.1L197.2 44.5L197.6 44.3L198.1 41.6L198.5 37.8L198.9 35.7L199.4 36.1L199.8 38.1L200.3 39.3L200.7 38.6L201.2 38.4L201.6 39.7L202.1 40.4L202.5 38.6L203.0 36.7L203.4 37.1L203.9 38.3L204.3 38.8L204.8 38.8L205.2 38.3L205.7 37.8L206.1 38.1L206.6 39.0L207.0 40.2L207.5 41.7L207.9 41.9L208.4 40.9L208.8 40.6L209.3 41.1L209.7 41.1L210.2 39.4L210.6 38.4L211.1 40.1L211.5 43.4L212.0 43.1L212.4 39.9L212.9 38.3L213.3 38.6L213.8 38.9L214.2 39.1L214.7 39.8L215.1 40.6L215.6 39.6L216.0 38.2L216.5 38.8L216.9 39.8L217.4 39.2L217.8 38.5L218.3 39.0L218.7 39.1L219.2 37.8L219.6 36.4L220.1 36.3L220.5 37.5L221.0 38.3L221.4 39.7L221.9 41.4L222.3 40.8L222.8 39.8L223.2 40.1L223.6 40.1L224.1 38.5L224.5 37.7L225.0 38.9L225.4 39.9L225.9 38.5L226.3 36.3L226.8 36.5L227.2 39.5L227.7 42.6L228.1 43.5L228.6 42.4L229.0 41.2L229.5 41.1L229.9 41.5L230.4 41.0L230.8 40.4L231.3 39.3L231.7 36.8L232.2 36.7L232.6 39.2L233.1 41.8L233.5 41.4L234.0 39.4L234.4 39.8L234.9 40.9L235.3 39.2L235.8 37.6L236.2 38.7L236.7 40.4L237.1 40.6L237.6 39.5L238.0 37.0L238.5 35.0L238.9 35.3L239.4 37.2L239.8 39.8L240.3 40.9L240.7 39.1L241.2 36.5L241.6 36.0L242.1 37.6L242.5 39.8L243.0 41.9L243.4 42.8L243.9 41.4L244.3 40.2L244.8 40.8L245.2 42.3L245.7 42.5L246.1 40.1L246.6 37.6L247.0 37.3L247.5 37.9L247.9 38.9L248.4 40.1L248.8 39.8L249.2 37.6L249.7 35.6L250.1 37.9L250.6 41.5L251.0 41.4L251.5 38.4L251.9 37.4L252.4 39.6L252.8 42.3L253.3 43.1L253.7 41.7L254.2 39.3L254.6 37.2L255.1 35.8L255.5 36.4L256.0 38.0L256.4 40.4L256.9 44.0L257.3 44.3L257.8 40.3L258.2 35.9L258.7 35.3L259.1 39.6L259.6 44.5L260.0 45.3L260.5 42.4L260.9 38.9L261.4 37.0L261.8 34.7L262.3 33.3L262.7 34.9L263.2 37.3L263.6 39.0L264.1 39.6L264.5 39.4L265.0 39.3L265.4 39.0L265.9 37.4L266.3 36.2L266.8 38.0L267.2 40.7L267.7 43.7L268.1 44.4L268.6 41.6L269.0 41.5L269.5 44.7L269.9 46.5L270.4 44.6L270.8 38.8L271.3 34.4L271.7 36.6L272.2 42.7L272.6 43.9L273.1 38.7L273.5 34.5L273.9 35.1L274.4 38.2L274.8 41.3L275.3 41.3L275.7 40.1L276.2 40.2L276.6 39.9L277.1 40.0L277.5 41.6L278.0 41.7L278.4 39.8L278.9 39.9L279.3 41.1L279.8 40.8L280.2 39.8L280.7 39.0L281.1 39.8L281.6 41.5L282.0 41.8L282.5 39.7L282.9 36.6L283.4 35.2L283.8 37.8L284.3 39.7L284.7 39.3L285.2 39.6L285.6 39.1L286.1 38.4L286.5 38.0L287.0 38.3L287.4 38.9L287.9 39.3L288.3 39.5L288.8 39.7L289.2 40.1L289.7 40.7L290.1 41.6L290.6 41.9L291.0 41.1L291.5 39.8L291.9 39.5L292.4 40.9L292.8 42.2L293.3 42.2L293.7 41.2L294.2 40.5L294.6 40.8L295.1 41.2L295.5 41.3L296.0 41.7L296.4 41.6L296.9 40.2L297.3 39.5L297.8 40.2L298.2 40.8L298.6 40.1L299.1 38.3L299.5 36.4L300.0 36.2L300.4 38.5L300.9 40.9L301.3 41.9L301.8 41.6L302.2 40.2L302.7 38.8L303.1 38.3L303.6 38.6L304.0 38.6L304.5 38.0L304.9 37.9L305.4 39.2L305.8 41.1L306.3 42.0L306.7 42.0L307.2 42.0L307.6 41.5L308.1 40.2L308.5 39.4L309.0 39.1L309.4 39.0L309.9 39.1L310.3 39.4L310.8 39.7L311.2 39.8L311.7 39.7L312.1 39.7L312.6 40.0L313.0 40.0L313.5 39.8L313.9 39.7L314.4 39.8L314.8 39.8L315.3 39.5L315.7 39.4L316.2 39.6L316.6 39.8L317.1 39.8L317.5 39.8L318.0 39.8L318.4 39.7L318.9 39.7L319.3 39.6L319.8 39.5L320.2 39.7L320.7 39.9L321.1 39.9L321.6 39.8L322.0 39.6L322.5 39.7L322.9 39.7" stroke="#2020d8" stroke-width="0.9" fill="none" stroke-linejoin="round" opacity="0.85"/></svg>
<div class="r" style="left:614px;top:392px;width:9px;height:160px;background:linear-gradient(90deg,rgba(0,0,0,.42),rgba(0,0,0,.12) 40%,rgba(0,0,0,0))"></div>
<div class="r" style="left:0.00px;top:392.00px;width:615.00px;height:364.00px;background:#f0f0f0;border:1px solid #8cc0ea;box-sizing:border-box;"></div>
<div class="r" style="left:1.00px;top:393.00px;width:613.00px;height:18.00px;background:#fff;"></div>
<svg class="r" style="left:5.0px;top:396.3px" width="10.2" height="10.2" viewBox="0 0 24 24"><path d="M0.5,0.5 Q12,8 23.5,0.5 Q16,12 23.5,23.5 Q12,16 0.5,23.5 Q8,12 0.5,0.5Z" fill="#ffd200"/><path d="M1,1 L5,3.5 L3.5,5Z M23,1 L19,3.5 L20.5,5Z M1,23 L5,20.5 L3.5,19Z M23,23 L19,20.5 L20.5,19Z" fill="#ff4a3a"/><path d="M4.5,4.5 Q12,9.5 19.5,4.5 Q14.5,12 19.5,19.5 Q12,14.5 4.5,19.5 Q9.5,12 4.5,4.5Z" fill="#ff1800"/><path d="M12,5V19M5,12H19" stroke="#ff9a50" stroke-width="0.9"/><circle cx="12" cy="12" r="1.4" fill="#ffa000"/></svg>
<div class="t" style="left:17.70px;top:398px;font-size:8.6px;color:#262626;transform:scaleX(0.8353);-webkit-text-stroke:0">Frequency Content - Spectral Matching using Frequency Domain Method</div>
<svg class="r" style="left:599.5px;top:397.5px" width="8.6" height="8.6"><path d="M1,1 L7.6,7.6 M7.6,1 L1,7.6" stroke="#4a4a4a" stroke-width="1.1"/></svg>
<div class="r" style="left:6.00px;top:418.00px;width:602.00px;height:331.00px;border:1px solid #dfdfdf;box-sizing:border-box;"></div>
<div class="r" style="left:16.00px;top:428.00px;width:584.00px;height:268.00px;border:1px solid #dfdfdf;box-sizing:border-box;"></div>
<div class="r" style="left:25.00px;top:437.00px;width:291.00px;height:250.00px;border:1px solid #dfdfdf;box-sizing:border-box;"></div>
<div class="r" style="left:28.40px;top:434.00px;width:134.60px;height:6.00px;background:#f0f0f0;"></div>
<div class="t" style="left:30.40px;top:434px;font-size:7.4px;color:#2c2ca6;transform:scaleX(0.8676)">Frequency Content of Reference Time History</div>
<div class="r" style="left:321.00px;top:437.00px;width:270.00px;height:250.00px;border:1px solid #dfdfdf;box-sizing:border-box;"></div>
<div class="r" style="left:324.00px;top:434.00px;width:130.00px;height:6.00px;background:#f0f0f0;"></div>
<div class="t" style="left:326.00px;top:434px;font-size:7.4px;color:#2c2ca6;transform:scaleX(0.8703)">Frequency Content of Matched Time History</div>
<svg class="r" style="left:58.75px;top:449.6px;overflow:visible" width="219.6" height="180.6"><rect x="0" y="0" width="219.6" height="180.6" fill="#fff"/><path d="M0.0 0V180.6M16.5 0V180.6M26.2 0V180.6M33.0 0V180.6M38.4 0V180.6M42.7 0V180.6M46.4 0V180.6M49.6 0V180.6M52.4 0V180.6M54.9 0V180.6M71.4 0V180.6M81.1 0V180.6M87.9 0V180.6M93.3 0V180.6M97.6 0V180.6M101.3 0V180.6M104.5 0V180.6M107.3 0V180.6M109.8 0V180.6M126.3 0V180.6M136.0 0V180.6M142.8 0V180.6M148.1 0V180.6M152.5 0V180.6M156.2 0V180.6M159.3 0V180.6M162.2 0V180.6M164.7 0V180.6M181.2 0V180.6M190.9 0V180.6M197.7 0V180.6M203.0 0V180.6M207.4 0V180.6M211.0 0V180.6M214.2 0V180.6M217.0 0V180.6M219.1 0V180.6M0 0.0H219.6M0 18.1H219.6M0 36.1H219.6M0 54.2H219.6M0 72.2H219.6M0 90.3H219.6M0 108.4H219.6M0 126.4H219.6M0 144.5H219.6M0 162.5H219.6M0 180.6H219.6" stroke="#e2e2e2" stroke-width="1" fill="none"/><path d="M0.0 179.6L8.0 179.0L14.0 179.7L18.8 180.2L22.8 180.5L26.2 180.6L29.2 180.3L31.8 179.7L34.2 179.1L36.4 178.5L38.4 178.0L40.2 177.6L41.9 177.2L43.5 176.7L45.0 176.0L46.4 175.2L47.7 174.2L49.0 173.3L50.2 173.2L51.3 173.5L52.4 174.0L53.4 176.0L54.4 178.4L55.4 178.1L56.3 173.9L57.2 168.2L58.0 163.4L58.8 160.2L59.6 157.2L60.4 155.0L61.1 154.1L61.9 154.1L62.6 154.1L63.2 154.1L63.9 154.1L64.6 154.1L65.2 153.2L65.8 151.2L66.4 148.9L67.0 147.0L67.5 146.3L68.1 148.3L68.6 152.8L69.2 157.9L69.7 162.1L70.2 163.7L70.7 162.0L71.2 158.3L71.6 155.1L72.1 154.5L72.6 161.5L73.0 168.2L73.5 167.5L73.9 163.6L74.3 158.6L74.7 154.2L75.2 151.8L75.6 153.4L76.0 158.9L76.3 164.7L76.7 167.4L77.1 165.5L77.5 161.2L77.8 156.2L78.2 152.2L78.6 150.5L78.9 154.0L79.3 161.3L79.6 167.8L79.9 169.5L80.3 164.8L80.6 157.4L80.9 151.6L81.2 150.3L81.5 150.0L81.9 149.9L82.2 149.7L82.5 149.5L82.8 148.5L83.1 143.8L83.3 136.5L83.6 127.8L83.9 119.3L84.2 112.1L84.5 107.4L84.8 103.4L85.0 99.9L85.3 97.8L85.6 97.9L85.8 100.6L86.1 104.8L86.3 109.6L86.6 114.4L86.8 120.1L87.1 126.5L87.3 133.6L87.6 141.4L87.8 149.8L88.1 157.3L88.3 163.2L88.5 171.2L88.8 172.7L89.0 170.8L89.2 164.4L89.4 150.5L89.7 141.0L89.9 133.7L90.1 134.3L90.3 140.1L90.5 149.5L90.7 159.0L91.0 162.6L91.2 162.4L91.4 160.8L91.6 158.1L91.8 150.0L92.0 142.0L92.2 139.8L92.4 140.8L92.6 148.7L92.8 150.7L93.0 134.6L93.2 126.1L93.3 134.9L93.5 152.4L93.7 164.3L93.9 158.6L94.1 151.3L94.3 146.3L94.5 143.7L94.6 148.0L94.8 156.8L95.0 164.7L95.2 170.7L95.4 175.0L95.5 173.9L95.7 166.4L95.9 157.2L96.0 148.0L96.2 141.4L96.4 142.9L96.5 148.7L96.7 154.4L96.9 159.1L97.0 155.6L97.2 147.9L97.4 136.7L97.5 130.7L97.7 137.2L97.8 145.1L98.0 144.3L98.1 148.6L98.3 156.9L98.5 165.9L98.6 171.4L98.8 172.9L98.9 170.0L99.1 163.2L99.2 155.4L99.4 148.4L99.5 141.3L99.7 136.4L99.8 142.5L99.9 148.8L100.1 159.0L100.2 165.6L100.4 167.9L100.5 167.1L100.7 164.4L100.8 156.0L100.9 149.1L101.1 139.5L101.2 133.1L101.3 139.3L101.5 149.2L101.6 154.8L101.7 160.4L101.9 161.9L102.0 161.3L102.1 159.5L102.3 152.1L102.4 143.7L102.5 138.7L102.7 139.9L102.8 147.3L102.9 151.8L103.0 155.8L103.2 158.8L103.3 161.1L103.4 161.5L103.5 160.9L103.7 157.7L103.8 154.2L103.9 146.8L104.0 142.1L104.2 137.9L104.3 133.6L104.4 127.1L104.5 133.5L104.6 145.9L104.8 154.5L104.9 157.9L105.0 156.4L105.1 150.9L105.2 138.2L105.3 128.6L105.4 115.1L105.6 115.3L105.7 130.6L105.8 140.4L105.9 127.4L106.0 92.3L106.1 74.1L106.2 92.5L106.3 129.1L106.5 142.4L106.6 118.2L106.7 104.6L106.8 105.3L106.9 120.3L107.0 146.7L107.1 160.3L107.2 171.6L107.3 174.1L107.4 173.0L107.5 170.8L107.6 165.1L107.7 159.0L107.8 155.3L107.9 157.1L108.0 161.1L108.1 167.9L108.2 173.6L108.4 175.4L108.5 174.8L108.6 172.7L108.7 163.9L108.8 154.8L108.9 141.7L109.0 130.4L109.0 129.7L109.1 133.9L109.2 142.9L109.3 154.9L109.4 157.2L109.5 134.1L109.6 102.1L109.7 85.9L109.8 102.1L109.9 133.9L110.0 132.9L110.1 115.5L110.2 105.8L110.3 101.3L110.4 104.1L110.5 115.5L110.6 126.5L110.7 148.1L110.8 162.1L110.8 167.5L110.9 168.7L111.0 166.7L111.1 160.3L111.2 149.0L111.3 133.6L111.4 116.7L111.5 85.7L111.6 73.4L111.7 70.1L111.7 84.5L111.8 110.0L111.9 129.6L112.0 151.8L112.1 169.9L112.2 173.2L112.3 172.6L112.3 170.2L112.4 161.9L112.5 149.2L112.6 136.7L112.7 130.3L112.8 130.3L112.9 133.1L112.9 116.6L113.0 62.1L113.1 34.2L113.2 62.1L113.3 116.9L113.4 155.6L113.4 169.1L113.5 161.0L113.6 148.5L113.7 122.4L113.8 99.9L113.8 85.5L113.9 87.2L114.0 106.9L114.1 133.2L114.2 155.7L114.2 166.6L114.3 171.8L114.4 172.0L114.5 170.7L114.6 165.9L114.6 158.3L114.7 151.4L114.8 145.7L114.9 142.0L114.9 141.1L115.0 143.6L115.1 149.3L115.2 155.7L115.2 163.0L115.3 169.3L115.4 172.0L115.5 173.0L115.5 168.6L115.6 157.4L115.7 143.7L115.8 113.4L115.8 77.9L115.9 64.3L116.0 54.1L116.1 62.4L116.1 89.3L116.2 107.4L116.3 124.9L116.4 154.9L116.4 164.5L116.5 170.3L116.6 171.7L116.6 168.7L116.7 155.8L116.8 122.2L116.9 74.9L116.9 50.6L117.0 74.9L117.1 122.3L117.1 150.3L117.2 150.8L117.3 152.8L117.3 155.9L117.4 161.4L117.5 165.7L117.6 168.2L117.6 171.6L117.7 172.4L117.8 169.3L117.8 162.0L117.9 147.7L118.0 131.0L118.0 114.0L118.1 98.3L118.2 75.5L118.2 63.2L118.3 55.1L118.4 55.0L118.4 66.8L118.5 81.0L118.6 107.2L118.6 126.2L118.7 146.5L118.8 158.1L118.8 165.5L118.9 166.9L119.0 166.1L119.0 162.1L119.1 150.9L119.2 133.3L119.2 122.3L119.3 112.5L119.3 104.4L119.4 95.6L119.5 98.6L119.5 105.5L119.6 123.8L119.7 135.4L119.7 149.7L119.8 160.9L119.8 169.3L119.9 170.7L120.0 171.0L120.0 168.4L120.1 164.2L120.2 156.0L120.2 141.8L120.3 118.4L120.3 97.4L120.4 81.9L120.5 77.2L120.5 83.3L120.6 99.7L120.6 119.2L120.7 139.3L120.8 151.1L120.8 158.6L120.9 165.1L120.9 166.0L121.0 165.4L121.1 160.8L121.1 153.4L121.2 135.9L121.2 124.8L121.3 109.4L121.4 100.3L121.4 88.1L121.5 86.5L121.5 93.8L121.6 103.4L121.7 121.9L121.7 140.3L121.8 155.2L121.8 166.8L121.9 170.1L121.9 170.8L122.0 169.7L122.1 163.7L122.1 156.3L122.2 143.6L122.2 133.9L122.3 121.3L122.3 79.6L122.4 56.5L122.5 79.6L122.5 106.5L122.6 117.2L122.6 128.4L122.7 140.3L122.7 154.6L122.8 164.3L122.8 171.2L122.9 173.0L123.0 173.7L123.0 172.3L123.1 166.1L123.1 161.3L123.2 151.8L123.2 138.8L123.3 126.4L123.3 119.3L123.4 110.4L123.4 106.8L123.5 105.9L123.5 110.6L123.6 116.2L123.7 125.7L123.7 139.0L123.8 151.0L123.8 159.1L123.9 164.5L123.9 165.7L124.0 165.7L124.0 164.3L124.1 160.6L124.1 154.5L124.2 148.2L124.2 140.6L124.3 134.3L124.3 128.1L124.4 125.6L124.5 129.3L124.5 135.0L124.6 141.3L124.6 150.9L124.7 157.4L124.7 164.3L124.8 168.1L124.8 169.2L124.9 169.0L124.9 168.2L125.0 165.5L125.0 158.3L125.1 149.8L125.2 140.1L125.2 129.7L125.3 121.2L125.3 116.3L125.3 115.1L125.4 116.3L125.4 119.9L125.5 125.4L125.5 133.2L125.6 145.9L125.6 153.3L125.7 159.8L125.7 164.0L125.8 166.6L125.8 167.1L125.9 166.8L125.9 165.4L126.0 163.0L126.0 157.4L126.1 152.1L126.1 145.8L126.2 142.5L126.2 137.7L126.3 136.2L126.3 136.5L126.4 138.2L126.4 141.8L126.5 148.7L126.5 156.6L126.6 162.6L126.6 168.6L126.7 172.0L126.7 173.8L126.7 174.8L126.8 174.5L126.8 173.2L126.9 169.0L126.9 161.2L127.0 155.8L127.0 144.4L127.1 132.0L127.1 123.7L127.2 119.2L127.2 114.2L127.3 113.3L127.3 115.8L127.3 120.6L127.4 129.0L127.4 136.1L127.5 144.9L127.5 153.2L127.6 160.2L127.6 163.5L127.7 166.0L127.8 165.8L127.8 164.0L127.8 160.7L127.9 152.8L127.9 137.2L128.0 118.1L128.0 104.9L128.1 92.7L128.1 79.4L128.2 65.6L128.2 60.2L128.2 62.7L128.3 73.0L128.3 88.7L128.4 109.8L128.4 130.9L128.5 144.6L128.5 105.7L128.5 45.1L128.6 14.0L128.6 45.1L128.7 106.1L128.7 149.4L128.8 165.6L128.8 160.8L128.8 153.9L128.9 144.1L128.9 124.6L129.0 115.6L129.0 105.0L129.1 95.9L129.1 86.3L129.1 82.5L129.2 80.1L129.2 81.5L129.3 86.2L129.3 98.3L129.4 108.1L129.4 123.9L129.4 137.3L129.5 149.6L129.5 162.5L129.6 167.7L129.6 172.7L129.7 173.6L129.7 172.3L129.7 170.2L129.8 163.3L129.8 152.9L129.9 137.9L129.9 127.6L129.9 109.9L130.0 96.5L130.0 92.0L130.1 89.2L130.1 89.4L130.1 94.7L130.2 106.9L130.2 124.2L130.3 138.7L130.3 152.5L130.3 163.6L130.4 170.5L130.4 174.6L130.5 175.1L130.5 174.7L130.5 172.4L130.6 169.8L130.6 161.9L130.7 151.1L130.7 140.8L130.7 126.4L130.8 114.5L130.8 108.1L130.9 105.0L130.9 103.4L130.9 103.7L131.0 106.4L131.0 112.4L131.1 124.7L131.1 133.7L131.1 148.3L131.2 159.6L131.2 169.2L131.3 173.7L131.3 175.5L131.3 176.9L131.4 176.9L131.4 176.0L131.4 171.0L131.5 161.4L131.5 152.4L131.6 132.4L131.6 90.1L131.6 68.4L131.7 90.1L131.7 82.8L131.8 73.7L131.8 72.0L131.8 74.1L131.9 78.2L131.9 88.6L131.9 106.4L132.0 116.9L132.0 130.1L132.1 148.3L132.1 161.6L132.1 169.2L132.2 175.3L132.2 177.5L132.2 177.6L132.3 176.3L132.3 171.0L132.3 162.1L132.4 148.4L132.4 136.2L132.5 119.3L132.5 103.8L132.5 93.8L132.6 88.7L132.6 83.2L132.6 85.4L132.7 90.2L132.7 102.0L132.8 112.5L132.8 126.1L132.8 143.9L132.9 155.6L132.9 163.8L132.9 170.0L133.0 173.2L133.0 175.3L133.0 176.1L133.1 176.0L133.1 175.8L133.1 174.6L133.2 172.8L133.2 168.4L133.3 161.6L133.3 156.8L133.3 150.4L133.4 144.8L133.4 141.8L133.4 139.1L133.5 136.5L133.5 136.7L133.5 139.6L133.6 142.1L133.6 147.5L133.6 155.0L133.7 162.4L133.7 165.5L133.7 169.8L133.8 172.5L133.8 174.5L133.9 174.9L133.9 175.0L133.9 174.1L134.0 171.6L134.0 167.1L134.0 157.5L134.1 150.0L134.1 144.1L134.1 135.4L134.2 128.8L134.2 123.4L134.2 116.6L134.3 112.2L134.3 112.7L134.3 116.9L134.4 122.3L134.4 130.9L134.4 142.0L134.5 151.7L134.5 161.4L134.5 167.4L134.6 170.3L134.6 172.5L134.6 172.9L134.7 172.8L134.7 170.9L134.7 164.5L134.8 158.6L134.8 147.2L134.8 131.3L134.9 118.0L134.9 106.6L134.9 95.3L135.0 85.2L135.0 79.1L135.0 78.9L135.1 81.6L135.1 91.8L135.1 108.3L135.2 118.0L135.2 129.7L135.2 140.1L135.3 155.8L135.3 167.2L135.3 170.7L135.4 173.4L135.4 174.3L135.4 174.4L135.5 173.5L135.5 172.4L135.5 170.4L135.6 166.8L135.6 161.9L135.6 155.4L135.7 150.3L135.7 146.7L135.7 143.0L135.8 139.4L135.8 139.0L135.8 140.1L135.9 144.0L135.9 147.9L135.9 137.1L135.9 99.5L136.0 80.2L136.0 99.6L136.0 137.5L136.1 164.4L136.1 175.0L136.1 177.5L136.2 177.9L136.2 177.3L136.2 175.9L136.3 173.0L136.3 169.1L136.3 161.7L136.4 153.3L136.4 141.8L136.4 132.6L136.5 125.9L136.5 117.6L136.5 109.0L136.5 105.7L136.6 104.8L136.6 108.3L136.6 114.2L136.7 126.2L136.7 140.6L136.7 149.8L136.8 161.2L136.8 167.4L136.8 171.6L136.9 175.2L136.9 176.9L136.9 176.2L137.0 172.9L137.0 167.7L137.0 162.6L137.1 150.2L137.1 138.4L137.1 131.4L137.2 119.8L137.2 115.3L137.2 112.1L137.2 110.2L137.3 112.2L137.3 115.1L137.3 124.9L137.4 135.4L137.4 142.1L137.4 152.8L137.5 161.7L137.5 169.4L137.5 175.2L137.5 177.8L137.6 178.2L137.6 177.8L137.6 174.7L137.7 170.1L137.7 160.9L137.7 148.3L137.8 133.7L137.8 125.7L137.8 117.7L137.8 110.6L137.9 109.5L137.9 112.2L137.9 121.0L138.0 129.3L138.0 138.5L138.0 151.1L138.0 160.3L138.1 167.8L138.1 173.1L138.1 176.4L138.2 177.7L138.2 178.1L138.2 177.8L138.2 176.2L138.3 172.1L138.3 164.7L138.3 158.7L138.4 151.9L138.4 144.5L138.4 137.1L138.5 127.8L138.5 122.6L138.5 119.6L138.5 118.8L138.6 120.3L138.6 123.0L138.6 130.1L138.7 139.7L138.7 147.0L138.7 156.5L138.7 161.3L138.8 167.3L138.8 172.3L138.8 174.5L138.8 175.7L138.9 175.8L138.9 174.9L138.9 173.2L139.0 167.7L139.0 163.2L139.0 150.8L139.0 142.8L139.1 134.1L139.1 126.0L139.1 113.4L139.2 108.1L139.2 104.4L139.2 105.7L139.2 113.1L139.3 118.3L139.3 128.1L139.3 139.5L139.3 151.2L139.4 158.9L139.4 164.9L139.4 168.2L139.5 170.6L139.5 172.7L139.5 170.6L139.6 161.4L139.6 137.5L139.6 103.5L139.7 86.1L139.7 103.6L139.7 137.9L139.7 150.1L139.8 146.4L139.8 141.8L139.8 135.8L139.8 133.1L139.9 133.6L139.9 135.1L139.9 138.4L139.9 141.4L140.0 146.0L140.0 149.9L140.0 154.6L140.1 161.7L140.1 165.7L140.1 169.4L140.1 174.3L140.2 176.2L140.2 177.1L140.2 177.3L140.2 176.2L140.3 172.3L140.3 165.5L140.3 155.1L140.3 147.3L140.4 137.2L140.4 123.3L140.4 107.2L140.5 96.3L140.5 91.4L140.5 93.5L140.6 102.6L140.6 109.1L140.6 117.1L140.6 131.2L140.7 146.0L140.7 158.2L140.7 165.0L140.7 168.5L140.8 170.3L140.8 171.3L140.8 170.7L140.8 169.4L140.9 164.9L140.9 159.9L140.9 154.2L140.9 146.5L141.0 141.6L141.0 134.2L141.0 128.8L141.1 122.3L141.1 119.2L141.1 118.9L141.1 123.0L141.2 127.7L141.2 133.4L141.2 143.9L141.2 151.7L141.3 156.5L141.3 160.6L141.3 167.0L141.3 169.6L141.4 170.3L141.4 170.6L141.4 170.5L141.4 169.5L141.5 166.3L141.5 160.9L141.5 157.5L141.5 153.7L141.6 148.7L141.6 142.4L141.6 138.3L141.6 135.9L141.7 135.8L141.7 137.1L141.7 141.3L141.7 144.1L141.8 150.2L141.8 154.6L141.8 160.0L141.8 166.6L141.9 170.2L141.9 171.8L141.9 173.2L141.9 173.7L142.0 173.8L142.0 173.3L142.0 172.3L142.0 168.9L142.1 164.2L142.1 157.2L142.1 150.3L142.1 140.4L142.2 134.1L142.2 124.3L142.2 117.9L142.2 116.6L142.3 118.1L142.3 124.2L142.3 130.2L142.3 141.0L142.4 148.7L142.4 159.1L142.4 165.8L142.4 172.2L142.4 176.8L142.5 177.9L142.5 178.4L142.5 177.6L142.5 175.4L142.6 171.6L142.6 167.7L142.6 161.7L142.6 151.9L142.7 145.4L142.7 134.5L142.7 123.3L142.7 116.1L142.8 114.5L142.8 118.1L142.8 122.3L142.8 133.3L142.9 140.4L142.9 152.7L142.9 163.7L142.9 170.7L143.0 174.9L143.0 176.6L143.0 177.4L143.0 177.3L143.0 176.5L143.1 174.8L143.1 168.6L143.1 157.3L143.1 149.7L143.2 142.6L143.2 132.9L143.2 124.4L143.2 116.1L143.3 106.2L143.3 100.4L143.3 97.8L143.3 98.2L143.4 103.0L143.4 109.2L143.4 118.3L143.4 129.3L143.4 144.8L143.5 153.4L143.5 163.9L143.5 169.3L143.5 174.0L143.6 175.0L143.6 174.9L143.6 173.2L143.6 169.4L143.7 166.0L143.7 161.5L143.7 150.7L143.7 145.4L143.7 138.2L143.8 127.8L143.8 124.1L143.8 120.7L143.8 118.7L143.9 118.2L143.9 119.7L143.9 124.2L143.9 129.6L143.9 134.6L144.0 144.8L144.0 154.7L144.0 161.8L144.0 165.7L144.1 169.6L144.1 171.6L144.1 172.0L144.1 171.6L144.2 170.4L144.2 167.6L144.2 164.8L144.2 159.1L144.2 151.1L144.3 142.8L144.3 137.5L144.3 130.1L144.3 126.5L144.4 125.9L144.4 127.3L144.4 131.9L144.4 136.0L144.4 143.2L144.5 151.4L144.5 158.0L144.5 165.0L144.5 168.7L144.6 170.8L144.6 171.7L144.6 171.8L144.6 171.5L144.6 169.8L144.7 167.4L144.7 162.1L144.7 155.3L144.7 152.0L144.8 145.2L144.8 141.0L144.8 139.2L144.8 137.8L144.8 137.9L144.9 139.5L144.9 141.7L144.9 145.3L144.9 149.5L145.0 155.2L145.0 161.9L145.0 167.7L145.0 170.5L145.0 172.6L145.1 173.3L145.1 173.7L145.1 173.4L145.1 172.6L145.1 169.6L145.2 165.1L145.2 160.8L145.2 153.7L145.2 148.7L145.3 141.4L145.3 138.5L145.3 136.1L145.3 133.9L145.3 134.3L145.4 135.7L145.4 139.3L145.4 143.3L145.4 149.1L145.4 156.2L145.5 163.2L145.5 166.1L145.5 169.8L145.5 170.7L145.6 162.7L145.6 142.1L145.6 112.9L145.6 97.9L145.6 113.0L145.7 142.8L145.7 158.5L145.7 152.8L145.7 150.2L145.7 146.6L145.8 145.1L145.8 144.5L145.8 145.0L145.8 147.1L145.8 150.9L145.9 157.0L145.9 160.1L145.9 163.8L145.9 168.0L146.0 172.9L146.0 175.8L146.0 177.5L146.0 178.3L146.0 178.1L146.1 177.0L146.1 175.3L146.1 171.4L146.1 163.6L146.1 155.4L146.2 150.2L146.2 142.4L146.2 135.6L146.2 129.1L146.2 125.0L146.3 124.1L146.3 126.1L146.3 130.2L146.3 137.1L146.3 147.1L146.4 156.3L146.4 163.2L146.4 170.0L146.4 173.5L146.5 175.6L146.5 175.7L146.5 175.6L146.5 173.6L146.5 170.4L146.6 162.5L146.6 153.1L146.6 143.1L146.6 136.2L146.6 124.2L146.7 118.8L146.7 110.6L146.7 108.2L146.7 109.8L146.7 112.9L146.8 122.1L146.8 131.4L146.8 138.5L146.8 148.7L146.8 156.3L146.9 163.9L146.9 170.6L146.9 175.0L146.9 176.0L147.0 175.3L147.0 173.1L147.0 167.3L147.0 163.5L147.0 156.6L147.1 146.7L147.1 140.1L147.1 135.0L147.1 130.0L147.1 127.6L147.2 127.6L147.2 129.2L147.2 132.3L147.2 136.0L147.2 143.9L147.3 150.2L147.3 160.1L147.3 168.5L147.3 174.4L147.3 176.4L147.4 177.3L147.4 177.7L147.4 177.4L147.4 176.2L147.4 175.0L147.5 172.1L147.5 167.5L147.5 162.2L147.5 157.9L147.5 154.2L147.6 152.2L147.6 151.9L147.6 152.4L147.6 154.5L147.6 156.4L147.6 159.3L147.7 164.4L147.7 168.1L147.7 171.2L147.7 174.1L147.7 175.1L147.8 175.7L147.8 175.6L147.8 175.3L147.8 174.7L147.8 173.9L147.9 171.7L147.9 170.2L147.9 168.9L147.9 166.0L147.9 163.9L148.0 162.2L148.0 161.2L148.0 161.1L148.0 161.4L148.0 162.3L148.1 163.2L148.1 165.0L148.1 146.2L148.1 118.1L148.1 103.8L148.1 118.1L148.2 146.2L148.2 166.0L148.2 173.7L148.2 175.5L148.2 175.6L148.3 173.2L148.3 170.3L148.3 165.0L148.3 157.1L148.3 146.2L148.4 133.1L148.4 122.6L148.4 116.7L148.4 113.5L148.4 111.0L148.5 113.6L148.5 116.7L148.5 125.3L148.5 131.8L148.5 141.0L148.5 150.5L148.6 159.6L148.6 168.1L148.6 172.0L148.6 173.3L148.6 173.5L148.7 173.5L148.7 172.7L148.7 171.3L148.7 168.7L148.7 166.0L148.8 163.0L148.8 160.1L148.8 156.2L148.8 153.1L148.8 149.4L148.8 147.6L148.9 147.7L148.9 149.4L148.9 153.4L148.9 157.0L148.9 161.7L149.0 166.1L149.0 170.8L149.0 175.2L149.0 176.8L149.0 178.5L149.0 178.9L149.1 178.0L149.1 175.4L149.1 169.6L149.1 164.2L149.1 155.4L149.2 148.9L149.2 141.0L149.2 133.2L149.2 129.4L149.2 127.1L149.2 125.7L149.3 128.4L149.3 133.9L149.3 139.6L149.3 148.3L149.3 153.6L149.4 162.0L149.4 168.7L149.4 173.7L149.4 176.3L149.4 177.3L149.4 177.6L149.5 177.1L149.5 174.2L149.5 170.0L149.5 165.6L149.5 157.1L149.6 146.5L149.6 133.0L149.6 121.4L149.6 117.0L149.6 111.8L149.6 111.0L149.7 113.7L149.7 118.7L149.7 125.3L149.7 134.6L149.7 145.0L149.8 156.4L149.8 165.8L149.8 172.8L149.8 176.2L149.8 178.1L149.8 178.4L149.9 177.7L149.9 175.5L149.9 170.8L149.9 166.9L149.9 158.9L149.9 151.7L150.0 142.7L150.0 136.2L150.0 125.9L150.0 116.9L150.0 113.6L150.1 112.7L150.1 114.5L150.1 117.7L150.1 127.0L150.1 133.3L150.1 142.0L150.2 151.8L150.2 158.2L150.2 165.2L150.2 170.6L150.2 175.6L150.2 178.0L150.3 178.1L150.3 177.5L150.3 176.3L150.3 173.3L150.3 169.3L150.4 164.9L150.4 157.2L150.4 149.7L150.4 145.6L150.4 141.5L150.4 137.4L150.5 136.5L150.5 138.6L150.5 143.9L150.5 151.8L150.5 159.3L150.5 165.9L150.6 169.8L150.6 173.4L150.6 176.3L150.6 177.6L150.6 177.7L150.6 177.2L150.7 176.3L150.7 172.4L150.7 167.2L150.7 157.8L150.7 150.9L150.7 140.4L150.8 130.6L150.8 123.7L150.8 119.8L150.8 117.2L150.8 117.6L150.8 120.0L150.9 123.5L150.9 130.4L150.9 137.0L150.9 148.4L150.9 159.4L151.0 168.9L151.0 174.7L151.0 177.0L151.0 177.5L151.0 177.2L151.0 176.0L151.1 173.4L151.1 169.4L151.1 163.8L151.1 159.8L151.1 154.4L151.1 150.2L151.2 147.5L151.2 145.8L151.2 145.2L151.2 145.8L151.2 147.5L151.2 150.4L151.3 155.6L151.3 160.8L151.3 165.7L151.3 170.5L151.3 172.5L151.3 174.0L151.4 174.5L151.4 174.6L151.4 174.3L151.4 173.3L151.4 169.4L151.4 162.1L151.5 154.4L151.5 143.8L151.5 135.6L151.5 128.7L151.5 122.5L151.5 119.3L151.6 117.7L151.6 118.2L151.6 123.3L151.6 128.9L151.6 135.2L151.6 147.2L151.7 153.6L151.7 164.6L151.7 172.1L151.7 176.0L151.7 177.5L151.7 177.8L151.8 177.8L151.8 177.3L151.8 175.9L151.8 173.1L151.8 166.8L151.8 160.6L151.8 151.1L151.9 143.5L151.9 139.6L151.9 135.2L151.9 133.5L151.9 132.9L151.9 134.7L152.0 137.8L152.0 141.6L152.0 145.6L152.0 153.0L152.0 159.5L152.0 163.3L152.1 169.6L152.1 172.9L152.1 176.0L152.1 177.0L152.1 177.2L152.1 177.1L152.2 176.6L152.2 175.1L152.2 173.1L152.2 171.9L152.2 169.8L152.2 168.2L152.3 166.9L152.3 165.7L152.3 164.7L152.3 163.9L152.3 164.2L152.3 165.7L152.4 167.8L152.4 169.6L152.4 171.6L152.4 173.6L152.4 175.2L152.4 176.7L152.4 178.0L152.5 178.4L152.5 178.7L152.5 177.9L152.5 175.4L152.5 170.3L152.6 166.4L152.6 161.4L152.6 155.1L152.6 148.7L152.6 140.0L152.6 132.1L152.7 128.7L152.7 128.2L152.7 129.1L152.7 133.4L152.7 141.4L152.7 149.4L152.7 156.1L152.8 162.5L152.8 169.4L152.8 175.1L152.8 177.3L152.8 178.2L152.8 178.5L152.9 178.5L152.9 178.2L152.9 177.2L152.9 175.0L152.9 173.6L152.9 171.4L153.0 168.2L153.0 165.3L153.0 163.9L153.0 162.4L153.0 161.3L153.0 161.4L153.0 162.2L153.1 163.4L153.1 166.4L153.1 169.0L153.1 172.0L153.1 174.4L153.1 175.7L153.2 177.0L153.2 177.7L153.2 178.2L153.2 178.3L153.2 176.9L153.2 170.8L153.2 155.0L153.3 132.9L153.3 121.6L153.3 132.9L153.3 154.3L153.3 145.4L153.3 137.4L153.4 131.3L153.4 125.4L153.4 122.6L153.4 121.5L153.4 125.0L153.4 129.6L153.4 133.8L153.5 144.3L153.5 151.4L153.5 160.5L153.5 168.9L153.5 174.2L153.5 176.7L153.6 177.0L153.6 176.7L153.6 176.1L153.6 175.1L153.6 174.0L153.6 172.1L153.7 170.0L153.7 168.9L153.7 167.9L153.7 167.0L153.7 166.4L153.7 166.5L153.7 167.6L153.8 169.6L153.8 171.6L153.8 173.6L153.8 174.9L153.8 176.2L153.8 176.8L153.9 177.8L153.9 178.1L153.9 178.2L153.9 177.8L153.9 175.7L153.9 173.9L154.0 170.8L154.0 163.8L154.0 155.8L154.0 148.9L154.0 143.2L154.0 139.9L154.0 136.8L154.1 137.0L154.1 139.5L154.1 142.5L154.1 146.4L154.1 151.8L154.1 157.2L154.2 161.3L154.2 166.7L154.2 171.4L154.2 174.6L154.2 176.9L154.2 178.0L154.2 178.4L154.3 178.3L154.3 177.9L154.3 177.3L154.3 175.7L154.3 173.8L154.3 171.8L154.3 169.2L154.4 166.6L154.4 164.6L154.4 163.5L154.4 164.4L154.4 165.5L154.4 167.6L154.5 169.3L154.5 171.0L154.5 172.5L154.5 174.2L154.5 175.2L154.5 176.5L154.5 177.2L154.6 177.4L154.6 176.9L154.6 175.1L154.6 173.6L154.6 171.3L154.6 168.3L154.7 164.2L154.7 161.0L154.7 156.6L154.7 153.4L154.7 150.4L154.7 149.1L154.8 149.4L154.8 150.8L154.8 154.2L154.8 159.0L154.8 164.4L154.8 167.4L154.8 172.8L154.9 176.1L154.9 177.8L154.9 179.0L154.9 179.5L154.9 179.4L154.9 179.0L154.9 178.1L155.0 176.6L155.0 173.6L155.0 170.7L155.0 168.5L155.0 165.2L155.0 162.7L155.0 160.9L155.1 157.8L155.1 156.7L155.1 156.4L155.1 157.1L155.1 158.1L155.1 161.1L155.1 165.0L155.2 167.3L155.2 170.1L155.2 172.3L155.2 173.8L155.2 175.4L155.2 176.1L155.3 175.8L155.3 175.2L155.3 173.7L155.3 170.5L155.3 165.3L155.3 160.4L155.3 154.9L155.3 147.8L155.4 144.8L155.4 141.6L155.4 139.5L155.4 138.7L155.4 140.0L155.4 141.9L155.4 145.8L155.5 151.9L155.5 156.2L155.5 163.9L155.5 168.1L155.5 173.5L155.5 176.0L155.5 178.6L155.6 179.3L155.6 179.4L155.6 178.9L155.6 178.1L155.6 177.2L155.6 175.3L155.6 173.0L155.7 170.5L155.7 167.4L155.7 165.2L155.7 163.5L155.7 162.4L155.7 162.2L155.7 162.7L155.8 163.6L155.8 165.0L155.8 166.7L155.8 168.6L155.8 171.6L155.8 173.2L155.8 174.7L155.9 176.3L155.9 177.3L155.9 177.8L155.9 178.0L155.9 177.4L155.9 175.2L155.9 171.4L156.0 167.7L156.0 163.4L156.0 159.0L156.0 155.6L156.0 150.6L156.0 148.9L156.0 147.7L156.1 147.4L156.1 148.9L156.1 151.1L156.1 156.0L156.1 160.0L156.1 161.1L156.1 146.6L156.2 139.2L156.2 146.6L156.2 160.8L156.2 170.9L156.2 174.8L156.2 174.9L156.2 172.2L156.2 169.5L156.3 166.9L156.3 162.2L156.3 158.8L156.3 151.6L156.3 148.7L156.3 145.2L156.3 142.9L156.4 141.7L156.4 141.2L156.4 141.9L156.4 145.5L156.4 150.6L156.4 155.4L156.4 162.6L156.5 169.1L156.5 172.8L156.5 176.7L156.5 178.7L156.5 179.0L156.5 178.7L156.5 177.8L156.6 177.0L156.6 176.2L156.6 174.6L156.6 173.2L156.6 172.3L156.6 171.4L156.6 170.9L156.7 170.8L156.7 171.1L156.7 171.6L156.7 172.2L156.7 173.2L156.7 175.0L156.7 176.0L156.7 177.2L156.8 178.5L156.8 178.9L156.8 179.3L156.8 179.5L156.8 178.9L156.8 177.1L156.9 175.3L156.9 171.8L156.9 167.6L156.9 162.6L156.9 159.0L156.9 155.5L156.9 153.1L156.9 151.4L157.0 150.6L157.0 151.1L157.0 153.9L157.0 156.9L157.0 161.4L157.0 165.6L157.0 168.9L157.0 172.0L157.1 175.7L157.1 177.0L157.1 177.8L157.1 177.9L157.1 177.8L157.1 177.3L157.1 176.9L157.2 175.8L157.2 174.4L157.2 172.7L157.2 171.1L157.2 170.0L157.2 169.3L157.2 169.7L157.3 170.2L157.3 170.8L157.3 171.9L157.3 173.3L157.3 174.8L157.3 175.5L157.3 176.6L157.3 177.0L157.4 177.3L157.4 177.4L157.4 177.2L157.4 176.1L157.4 174.4L157.4 171.7L157.4 167.1L157.5 163.4L157.5 158.2L157.5 153.8L157.5 151.3L157.5 149.8L157.5 150.2L157.5 152.4L157.5 155.9L157.6 159.3L157.6 163.6L157.6 168.2L157.6 172.1L157.6 174.2L157.6 177.1L157.6 178.2L157.6 178.3L157.7 178.1L157.7 177.0L157.7 175.6L157.7 171.9L157.7 168.2L157.7 163.0L157.7 157.3L157.7 153.2L157.8 151.2L157.8 148.7L157.8 148.5L157.8 150.6L157.8 153.1L157.8 158.1L157.8 164.0L157.8 168.0L157.9 171.8L157.9 174.7L157.9 176.2L157.9 177.7L157.9 178.6L157.9 178.9L158.0 178.6L158.0 178.1L158.0 177.4L158.0 176.4L158.0 174.8L158.0 173.4L158.0 171.8L158.0 170.6L158.1 169.6L158.1 169.0L158.1 169.4L158.1 170.4L158.1 171.1L158.1 172.8L158.1 174.1L158.2 175.1L158.2 176.3L158.2 177.0L158.2 177.3L158.2 177.2L158.2 176.5L158.2 174.5L158.3 170.6L158.3 166.4L158.3 161.8L158.3 157.9L158.3 153.9L158.3 151.0L158.3 149.1L158.3 149.7L158.4 152.2L158.4 156.8L158.4 159.5L158.4 164.7L158.4 168.8L158.4 172.9L158.4 175.1L158.4 176.7L158.5 177.6L158.5 177.7L158.5 177.4L158.5 176.2L158.5 175.0L158.5 172.5L158.5 170.6L158.5 168.6L158.6 166.1L158.6 163.9L158.6 162.3L158.6 161.9L158.6 162.4L158.6 164.0L158.6 166.2L158.6 168.4L158.7 171.5L158.7 174.5L158.7 176.3L158.7 177.8L158.7 178.3L158.7 178.5L158.7 178.4L158.8 177.7L158.8 176.7L158.8 175.7L158.8 173.7L158.8 171.4L158.8 170.0L158.8 168.5L158.8 166.7L158.9 165.7L158.9 166.5L158.9 167.6L158.9 169.1L158.9 170.4L158.9 172.3L158.9 173.7L159.0 174.9L159.0 176.1L159.0 176.7L159.0 177.4L159.0 177.7L159.0 176.9L159.0 174.7L159.0 171.6L159.1 166.6L159.1 162.6L159.1 157.4L159.1 154.3L159.1 151.4L159.1 149.5L159.1 149.8L159.1 151.6L159.2 155.2L159.2 158.5L159.2 163.7L159.2 166.3L159.2 169.3L159.2 171.8L159.2 174.0L159.2 176.2L159.3 176.7L159.3 177.0L159.3 176.9L159.3 176.3L159.3 173.4L159.3 165.9L159.3 155.3L159.3 149.9L159.3 155.3L159.4 166.0L159.4 167.1L159.4 165.6L159.4 164.4L159.4 164.3L159.4 165.0L159.4 166.3L159.4 168.3L159.5 170.6L159.5 172.4L159.5 173.7L159.5 175.0L159.5 176.7L159.5 177.6L159.5 178.1L159.6 178.0L159.6 177.7L159.6 176.8L159.6 175.6L159.6 174.3L159.6 172.5L159.6 171.0L159.6 169.8L159.6 169.3L159.7 168.9L159.7 169.0L159.7 169.3L159.7 169.8L159.7 170.9L159.7 172.0L159.7 173.7L159.7 174.7L159.8 175.6L159.8 177.1L159.8 177.8L159.8 178.3L159.8 178.5L159.8 178.6L159.8 178.5L159.8 178.1L159.8 177.6L159.9 176.2L159.9 174.1L159.9 172.2L159.9 170.5L159.9 169.2L159.9 168.1L159.9 167.1L159.9 166.3L160.0 166.9L160.0 168.2L160.0 169.1L160.0 170.2L160.0 172.3L160.0 174.2L160.0 175.5L160.0 176.9L160.1 177.5L160.1 177.8L160.1 177.9L160.1 177.8L160.1 177.6L160.1 177.0L160.1 175.0L160.1 172.4L160.1 168.7L160.2 164.3L160.2 160.3L160.2 157.8L160.2 154.8L160.2 153.7L160.2 153.2L160.2 153.6L160.2 154.5L160.2 156.0L160.3 159.4L160.3 163.7L160.3 167.1L160.3 170.4L160.3 172.9L160.3 175.5L160.3 177.2L160.3 178.2L160.4 178.3L160.4 178.1L160.4 176.6L160.4 174.8L160.4 171.3L160.4 166.5L160.4 162.0L160.4 158.7L160.4 155.1L160.5 152.4L160.5 151.8L160.5 152.1L160.5 152.9L160.5 156.1L160.5 160.5L160.5 163.1L160.5 168.1L160.5 172.5L160.6 174.8L160.6 177.3L160.6 178.9L160.6 179.5L160.6 179.1L160.6 178.1L160.6 176.7L160.6 175.6L160.7 174.2L160.7 171.3L160.7 168.6L160.7 166.2L160.7 164.9L160.7 164.2L160.7 164.4L160.7 165.4L160.7 166.7L160.8 168.5L160.8 170.4L160.8 172.7L160.8 174.0L160.8 175.0L160.8 175.8L160.8 176.5L160.8 177.1L160.9 177.1L160.9 176.8L160.9 176.3L160.9 175.2L160.9 173.0L160.9 171.0L160.9 168.7L160.9 166.9L161.0 165.6L161.0 164.2L161.0 163.6L161.0 163.7L161.0 164.3L161.0 165.9L161.0 167.5L161.0 169.9L161.0 171.8L161.1 174.5L161.1 176.2L161.1 177.7L161.1 179.0L161.1 179.5L161.1 179.4L161.1 179.1L161.1 177.8L161.1 176.3L161.2 173.3L161.2 169.8L161.2 166.9L161.2 164.1L161.2 162.5L161.2 161.7L161.2 161.8L161.2 163.2L161.2 165.5L161.2 167.1L161.3 169.1L161.3 171.7L161.3 174.3L161.3 175.5L161.3 177.1L161.3 177.6L161.3 177.7L161.3 177.5L161.3 176.8L161.4 175.5L161.4 174.2L161.4 172.6L161.4 169.4L161.4 165.5L161.4 161.4L161.4 159.2L161.4 157.0L161.4 156.6L161.5 157.6L161.5 160.2L161.5 162.3L161.5 166.4L161.5 170.2L161.5 173.6L161.5 176.4L161.5 177.8L161.5 178.5L161.6 178.6L161.6 178.5L161.6 178.2L161.6 178.0L161.6 177.3L161.6 176.8L161.6 176.3L161.6 175.8L161.6 175.0L161.7 174.6L161.7 174.2L161.7 174.0L161.7 173.8L161.7 173.9L161.7 174.0L161.7 174.4L161.7 175.0L161.7 175.4L161.8 175.9L161.8 176.6L161.8 177.3L161.8 177.6L161.8 177.7L161.8 177.6L161.8 177.4L161.8 176.5L161.8 174.3L161.9 171.1L161.9 168.5L161.9 166.6L161.9 162.8L161.9 159.8L161.9 158.6L161.9 158.3L161.9 158.8L161.9 160.6L162.0 162.9L162.0 165.4L162.0 167.8L162.0 170.4L162.0 172.2L162.0 174.2L162.0 176.8L162.0 177.5L162.0 178.3L162.1 178.4L162.1 178.2L162.1 177.2L162.1 176.0L162.1 173.3L162.1 169.7L162.1 165.6L162.1 162.1L162.1 158.0L162.1 155.6L162.2 155.0L162.2 155.7L162.2 157.2L162.2 160.8L162.2 164.5L162.2 169.0L162.2 171.6L162.2 175.0L162.2 176.2L162.3 177.3L162.3 177.6L162.3 177.7L162.3 177.6L162.3 177.5L162.3 177.0L162.3 176.3L162.3 174.8L162.3 173.7L162.3 172.3L162.4 170.1L162.4 168.5L162.4 167.2L162.4 166.7L162.4 166.8L162.4 167.6L162.4 169.0L162.4 171.0L162.4 173.1L162.5 174.2L162.5 175.3L162.5 177.0L162.5 177.9L162.5 178.4L162.5 178.6L162.5 178.7L162.5 178.3L162.5 177.7L162.6 176.3L162.6 175.3L162.6 173.6L162.6 172.4L162.6 170.2L162.6 168.5L162.6 167.6L162.6 166.7L162.6 166.9L162.6 167.5L162.7 169.2L162.7 170.7L162.7 173.3L162.7 174.8L162.7 177.0L162.7 177.8L162.7 178.8L162.7 179.2L162.7 179.3L162.8 179.2L162.8 178.8L162.8 178.1L162.8 177.0L162.8 174.3L162.8 172.1L162.8 168.8L162.8 165.8L162.8 163.2L162.8 159.4L162.9 157.5L162.9 156.5L162.9 157.1L162.9 159.2L162.9 161.2L162.9 163.2L162.9 166.4L162.9 168.8L162.9 170.7L162.9 174.3L163.0 176.4L163.0 177.4L163.0 177.8L163.0 177.9L163.0 177.8L163.0 177.6L163.0 176.7L163.0 175.1L163.0 173.0L163.1 171.0L163.1 169.4L163.1 168.4L163.1 167.4L163.1 167.2L163.1 167.3L163.1 167.7L163.1 168.2L163.1 169.6L163.1 171.0L163.2 172.8L163.2 174.7L163.2 176.3L163.2 177.2L163.2 177.7L163.2 177.8L163.2 177.2L163.2 176.8L163.2 176.0L163.3 174.9L163.3 173.7L163.3 172.6L163.3 170.7L163.3 169.9L163.3 169.1L163.3 168.3L163.3 168.1L163.3 168.2L163.3 169.2L163.4 170.7L163.4 172.1L163.4 173.3L163.4 174.6L163.4 176.5L163.4 177.7L163.4 178.2L163.4 178.6L163.4 178.7L163.4 178.5L163.5 178.0L163.5 177.3L163.5 176.4L163.5 174.8L163.5 171.6L163.5 167.8L163.5 164.6L163.5 161.8L163.5 160.6L163.5 159.7L163.6 159.8L163.6 161.5L163.6 163.5L163.6 166.7L163.6 170.4L163.6 173.8L163.6 175.4L163.6 176.9L163.6 177.5L163.6 177.7L163.7 177.7L163.7 177.5L163.7 177.3L163.7 176.5L163.7 175.1L163.7 173.2L163.7 172.0L163.7 170.7L163.7 169.0L163.7 167.4L163.8 166.8L163.8 166.6L163.8 167.0L163.8 168.4L163.8 170.3L163.8 172.6L163.8 174.2L163.8 175.4L163.8 177.0L163.8 177.9L163.9 178.2L163.9 178.1L163.9 177.7L163.9 176.5L163.9 174.4L163.9 172.6L163.9 169.8L163.9 167.9L163.9 166.2L164.0 164.7L164.0 164.1L164.0 163.9L164.0 164.1L164.0 164.9L164.0 166.3L164.0 167.5L164.0 170.0L164.0 171.6L164.0 173.5L164.0 175.4L164.1 176.3L164.1 177.2L164.1 177.6L164.1 177.7L164.1 177.8L164.1 177.5L164.1 177.2L164.1 176.2L164.1 175.2L164.1 173.9L164.2 173.1L164.2 172.1L164.2 171.1L164.2 170.6L164.2 170.7L164.2 171.0L164.2 172.1L164.2 173.3L164.2 174.8L164.2 176.4L164.3 177.5L164.3 178.6L164.3 179.3L164.3 179.5L164.3 179.1L164.3 178.5L164.3 177.0L164.3 174.6L164.3 173.0L164.4 170.3L164.4 167.7L164.4 166.5L164.4 164.7L164.4 164.1L164.4 164.5L164.4 166.0L164.4 167.5L164.4 169.5L164.4 171.1L164.5 173.3L164.5 175.0L164.5 176.7L164.5 177.5L164.5 177.8L164.5 177.5L164.5 176.7L164.5 175.7L164.6 174.0L164.6 172.5L164.6 171.2L164.6 170.2L164.6 169.6L164.6 169.2L164.6 169.6L164.6 170.4L164.6 163.1L164.7 159.3L164.7 163.1L164.7 170.4L164.7 175.6L164.7 177.7L164.7 178.2L164.7 178.3L164.7 178.2L164.7 177.6L164.7 176.0L164.8 174.7L164.8 173.5L164.8 170.4L164.8 167.4L164.8 165.2L164.8 163.4L164.8 162.7L164.8 163.1L164.8 163.9L164.8 165.4L164.8 167.8L164.9 169.6L164.9 172.2L164.9 173.9L164.9 175.9L164.9 177.2L164.9 177.7L164.9 177.9L164.9 177.8L164.9 177.4L164.9 177.0L165.0 176.3L165.0 174.9L165.0 172.8L165.0 171.1L165.0 169.3L165.0 168.6L165.0 167.8L165.0 167.9L165.0 168.7L165.0 169.8L165.0 171.6L165.1 172.9L165.1 174.8L165.1 176.6L165.1 177.8L165.1 178.5L165.1 178.9L165.1 179.1L165.1 179.2L165.1 179.1L165.1 178.8L165.1 178.1L165.2 176.7L165.2 174.5L165.2 171.1L165.2 167.6L165.2 164.1L165.2 161.8L165.2 161.0L165.2 162.1L165.2 163.4L165.3 165.9L165.3 168.0L165.3 171.4L165.3 173.4L165.3 175.4L165.3 176.8L165.3 178.3L165.3 178.7L165.3 178.8L165.3 178.7L165.3 178.4L165.4 177.4L165.4 175.9L165.4 174.1L165.4 171.6L165.4 169.9L165.4 168.8L165.4 167.6L165.4 167.1L165.4 167.6L165.4 168.6L165.5 170.5L165.5 172.6L165.5 174.2L165.5 176.0L165.5 177.2L165.5 177.9L165.5 178.0L165.5 177.6L165.5 177.1L165.5 176.2L165.6 174.3L165.6 172.3L165.6 170.1L165.6 167.9L165.6 166.2L165.6 164.9L165.6 163.8L165.6 162.6L165.6 162.3L165.6 162.7L165.6 164.4L165.7 166.6L165.7 169.6L165.7 172.5L165.7 175.4L165.7 176.4L165.7 177.6L165.7 178.4L165.7 178.5L165.7 178.3L165.7 178.0L165.8 176.9L165.8 175.8L165.8 174.4L165.8 172.5L165.8 171.5L165.8 170.0L165.8 169.4L165.8 169.2L165.8 169.3L165.8 169.9L165.8 170.9L165.9 172.7L165.9 173.6L165.9 174.6L165.9 175.7L165.9 177.1L165.9 178.4L165.9 179.0L165.9 179.3L165.9 179.4L165.9 179.2L166.0 178.1L166.0 177.0L166.0 174.7L166.0 172.7L166.0 171.1L166.0 169.9L166.0 168.5L166.0 167.2L166.0 166.3L166.0 165.9L166.0 166.2L166.1 167.1L166.1 168.0L166.1 169.4L166.1 172.1L166.1 173.4L166.1 175.7L166.1 177.2L166.1 178.5L166.1 179.1L166.1 179.4L166.2 179.2L166.2 178.9L166.2 178.5L166.2 178.1L166.2 176.9L166.2 176.0L166.2 175.2L166.2 174.1L166.2 172.9L166.2 172.2L166.2 172.0L166.3 171.9L166.3 172.1L166.3 172.4L166.3 173.3L166.3 174.2L166.3 174.9L166.3 176.1L166.3 177.2L166.3 177.7L166.3 177.9L166.3 178.0L166.4 178.0L166.4 177.9L166.4 177.4L166.4 176.1L166.4 174.3L166.4 172.9L166.4 171.1L166.4 170.0L166.4 168.6L166.4 167.9L166.4 167.4L166.4 167.2L166.5 167.2L166.5 167.6L166.5 168.8L166.5 169.7L166.5 170.8L166.5 172.8L166.5 174.7L166.5 176.4L166.5 177.6L166.5 178.3L166.5 178.6L166.6 178.6L166.6 178.3L166.6 177.4L166.6 176.5L166.6 175.0L166.6 173.5L166.6 171.8L166.6 169.5L166.6 167.8L166.6 166.9L166.7 166.5L166.7 166.7L166.7 167.8L166.7 169.2L166.7 171.6L166.7 173.9L166.7 176.5L166.7 178.2L166.7 179.4L166.7 179.8L166.7 180.0L166.7 179.8L166.8 179.7L166.8 179.3L166.8 178.6L166.8 178.1L166.8 177.0L166.8 176.0L166.8 174.9L166.8 174.3L166.8 174.0L166.8 173.9L166.8 174.2L166.9 174.9L166.9 175.6L166.9 176.4L166.9 177.1L166.9 177.7L166.9 178.4L166.9 178.8L166.9 179.3L166.9 179.5L166.9 179.4L167.0 178.8L167.0 178.2L167.0 176.9L167.0 175.7L167.0 174.5L167.0 173.2L167.0 171.3L167.0 170.5L167.0 169.1L167.0 168.6L167.0 168.5L167.1 168.8L167.1 169.8L167.1 171.2L167.1 172.5L167.1 173.9L167.1 175.4L167.1 177.1L167.1 178.1L167.1 178.7L167.1 178.9L167.1 178.6L167.2 177.8L167.2 176.4L167.2 174.2L167.2 172.5L167.2 170.4L167.2 167.3L167.2 165.4L167.2 163.6L167.2 163.0L167.2 163.5L167.2 164.3L167.2 166.5L167.3 169.2L167.3 171.3L167.3 174.4L167.3 176.4L167.3 177.5L167.3 178.4L167.3 179.1L167.3 179.6L167.3 179.7L167.3 179.6L167.3 179.5L167.4 179.1L167.4 178.6L167.4 178.0L167.4 176.9L167.4 175.7L167.4 174.6L167.4 174.0L167.4 173.8L167.4 173.7L167.4 173.9L167.4 174.5L167.4 174.9L167.5 175.7L167.5 176.5L167.5 177.2L167.5 177.8L167.5 178.3L167.5 178.7L167.5 178.9L167.5 179.1L167.5 179.0L167.5 178.7L167.5 177.8L167.6 176.9L167.6 175.2L167.6 173.9L167.6 172.3L167.6 170.8L167.6 170.0L167.6 169.6L167.6 169.9L167.6 170.8L167.6 171.5L167.6 172.5L167.7 174.0L167.7 175.9L167.7 177.4L167.7 178.0L167.7 178.4L167.7 178.6L167.7 178.7L167.7 178.3L167.7 177.3L167.7 175.8L167.7 173.7L167.8 171.5L167.8 169.1L167.8 166.7L167.8 165.1L167.8 164.9L167.8 165.8L167.8 166.8L167.8 168.6L167.8 171.2L167.8 173.1L167.8 175.4L167.8 176.7L167.9 177.9L167.9 178.9L167.9 179.4L167.9 179.8L167.9 179.9L167.9 179.8L167.9 179.6L167.9 179.0L167.9 177.9L167.9 176.7L167.9 175.9L167.9 174.9L168.0 173.4L168.0 172.6L168.0 171.8L168.0 171.2L168.0 171.0L168.0 171.3L168.0 171.9L168.0 173.0L168.0 173.8L168.0 174.8L168.0 175.9L168.0 177.5L168.1 178.1L168.1 178.8L168.1 179.2L168.1 179.5L168.1 179.6L168.1 179.5L168.1 179.3L168.1 179.0L168.1 178.7L168.1 178.1L168.1 177.7L168.1 177.0L168.2 176.7L168.2 176.3L168.2 176.0L168.2 175.8L168.2 175.9L168.2 176.2L168.2 176.4L168.2 176.7L168.2 177.1L168.2 177.6L168.2 178.0L168.2 178.2L168.3 178.3L168.3 178.0L168.3 177.4L168.3 176.4L168.3 175.3L168.3 174.3L168.3 173.1L168.3 172.2L168.3 171.4L168.4 170.5L168.4 169.7L168.4 169.6L168.4 169.9L168.4 171.1L168.4 172.7L168.4 174.7L168.4 176.4L168.4 177.8L168.4 178.9L168.4 179.6L168.4 179.9L168.4 180.0L168.5 180.0L168.5 179.9L168.5 179.6L168.5 178.7L168.5 177.7L168.5 176.8L168.5 175.1L168.5 174.2L168.5 172.5L168.5 171.5L168.5 171.0L168.6 171.5L168.6 172.0L168.6 172.7L168.6 173.9L168.6 175.0L168.6 176.3L168.6 177.6L168.6 178.2L168.6 179.3L168.6 179.8L168.6 179.9L168.7 179.6L168.7 178.7L168.7 177.0L168.7 174.3L168.7 172.8L168.7 169.6L168.7 167.5L168.7 166.2L168.7 165.1L168.7 164.5L168.7 164.7L168.7 165.7L168.7 166.7L168.8 168.9L168.8 171.1L168.8 173.7L168.8 174.9L168.8 176.9L168.8 178.1L168.8 178.3L168.8 178.5L168.8 178.4L168.8 178.3L168.8 178.1L168.8 177.2L168.9 176.5L168.9 174.9L168.9 173.2L168.9 171.8L168.9 170.7L168.9 169.0L168.9 168.5L168.9 168.1L168.9 168.0L168.9 168.5L168.9 169.3L168.9 170.2L168.9 171.7L169.0 173.6L169.0 175.4L169.0 176.7L169.0 172.7L169.0 167.0L169.0 164.0L169.0 167.0L169.0 172.7L169.0 176.8L169.0 176.5L169.0 174.7L169.1 172.4L169.1 170.0L169.1 168.7L169.1 167.3L169.1 166.8L169.1 166.9L169.1 168.1L169.1 169.7L169.1 171.6L169.1 172.8L169.1 174.8L169.1 176.1L169.1 177.3L169.2 178.3L169.2 179.0L169.2 179.2L169.2 179.1L169.2 178.9L169.2 178.6L169.2 177.8L169.2 177.2L169.2 175.8L169.2 174.8L169.2 173.8L169.2 172.9L169.2 172.3L169.3 172.0L169.3 172.4L169.3 172.9L169.3 173.5L169.3 174.4L169.3 175.0L169.3 176.0L169.3 176.9L169.3 177.7L169.3 178.0L169.3 178.3L169.4 178.4L169.4 178.2L169.4 177.4L169.4 176.8L169.4 175.5L169.4 173.3L169.4 171.3L169.4 169.0L169.4 166.8L169.4 165.7L169.4 165.4L169.4 166.1L169.5 167.2L169.5 168.2L169.5 169.8L169.5 172.0L169.5 174.9L169.5 176.8L169.5 178.0L169.5 179.3L169.5 179.6L169.5 179.7L169.5 179.4L169.5 178.9L169.6 177.6L169.6 175.8L169.6 173.2L169.6 171.7L169.6 169.2L169.6 167.5L169.6 166.8L169.6 166.5L169.6 167.0L169.6 167.9L169.6 168.9L169.6 171.2L169.6 172.7L169.7 174.7L169.7 176.5L169.7 178.5L169.7 179.5L169.7 180.0L169.7 180.1L169.7 180.0L169.7 179.8L169.7 179.6L169.7 179.1L169.7 178.4L169.7 177.6L169.7 177.0L169.8 176.6L169.8 176.1L169.8 175.8L169.8 175.7L169.8 175.8L169.8 175.9L169.8 176.4L169.8 176.6L169.8 176.9L169.8 177.2L169.8 177.8L169.8 178.2L169.8 178.4L169.9 178.6L169.9 178.5L169.9 178.4L169.9 178.0L169.9 177.4L169.9 176.8L169.9 175.4L169.9 174.3L169.9 173.0L169.9 171.1L169.9 170.0L169.9 169.4L170.0 168.7L170.0 168.6L170.0 168.9L170.0 169.5L170.0 170.7L170.0 171.9L170.0 174.0L170.0 175.9L170.0 177.1L170.0 178.2L170.0 178.6L170.0 178.8L170.0 178.9L170.1 178.8L170.1 178.5L170.1 177.6L170.1 176.1L170.1 174.2L170.1 172.9L170.1 171.7L170.1 169.8L170.1 168.7L170.1 167.6L170.1 166.3L170.1 165.8L170.2 166.6L170.2 167.8L170.2 170.1L170.2 172.3L170.2 174.5L170.2 176.2L170.2 177.9L170.2 178.7L170.2 179.2L170.2 179.5L170.2 179.3L170.2 178.8L170.3 178.0L170.3 177.0L170.3 175.1L170.3 174.0L170.3 172.7L170.3 170.9L170.3 170.0L170.3 169.3L170.3 169.1L170.3 169.4L170.3 170.6L170.3 172.2L170.3 174.2L170.3 175.3L170.4 176.4L170.4 177.7L170.4 178.6L170.4 178.9L170.4 179.0L170.4 178.7L170.4 178.0L170.4 176.6L170.4 175.6L170.4 174.2L170.4 172.7L170.5 171.0L170.5 169.4L170.5 167.0L170.5 165.8L170.5 165.3L170.5 165.2L170.5 166.3L170.5 168.2L170.5 170.5L170.5 172.5L170.5 174.6L170.5 176.2L170.5 178.2L170.6 179.4L170.6 179.9L170.6 180.0L170.6 179.9L170.6 179.6L170.6 179.2L170.6 178.7L170.6 178.1L170.6 177.0L170.6 175.9L170.6 175.0L170.6 174.4L170.6 174.2L170.6 174.4L170.7 174.9L170.7 175.3L170.7 176.2L170.7 176.7L170.7 177.8L170.7 178.7L170.7 179.1L170.7 179.4L170.7 179.6L170.7 179.5L170.7 179.2L170.7 178.5L170.8 177.2L170.8 175.7L170.8 174.6L170.8 173.1L170.8 171.8L170.8 171.1L170.8 170.6L170.8 170.2L170.8 170.1L170.8 170.3L170.8 171.1L170.8 172.6L170.8 173.9L170.8 175.4L170.9 176.9L170.9 178.0L170.9 178.7L170.9 178.9L170.9 179.1L170.9 179.0L170.9 178.7L170.9 178.0L170.9 177.0L170.9 176.0L170.9 174.3L170.9 172.9L170.9 171.6L171.0 170.9L171.0 170.7L171.0 170.6L171.0 170.8L171.0 171.4L171.0 172.3L171.0 173.3L171.0 174.2L171.0 175.4L171.0 176.3L171.0 177.5L171.0 178.0L171.0 178.5L171.1 178.6L171.1 178.5L171.1 178.2L171.1 177.7L171.1 176.9L171.1 175.9L171.1 175.3L171.1 174.3L171.1 174.0L171.1 173.7L171.1 173.5L171.1 173.8L171.2 174.3L171.2 175.0L171.2 176.2L171.2 177.3L171.2 178.0L171.2 178.6L171.2 179.1L171.2 179.4L171.2 179.5L171.2 179.6L171.2 179.5L171.2 179.1L171.2 178.1L171.2 177.0L171.3 175.8L171.3 174.0L171.3 172.5L171.3 170.5L171.3 169.1L171.3 168.4L171.3 168.1L171.3 168.5L171.3 169.2L171.3 170.4L171.3 172.0L171.3 174.5L171.3 176.0L171.3 177.4L171.4 179.0L171.4 179.7L171.4 180.0L171.4 180.1L171.4 180.0L171.4 179.9L171.4 179.3L171.4 178.5L171.4 177.8L171.4 177.1L171.4 176.0L171.4 175.3L171.4 174.2L171.4 173.2L171.5 172.8L171.5 172.6L171.5 172.8L171.5 173.7L171.5 174.3L171.5 175.6L171.5 176.6L171.5 177.9L171.5 178.9L171.5 179.4L171.5 179.9L171.5 180.0L171.6 179.7L171.6 179.2L171.6 178.6L171.6 177.2L171.6 175.4L171.6 174.2L171.6 173.2L171.6 171.9L171.6 170.7L171.6 170.1L171.6 169.9L171.6 170.5L171.6 171.9L171.6 173.3L171.7 175.1L171.7 177.0L171.7 177.8L171.7 178.7L171.7 179.2L171.7 179.6L171.7 179.5L171.7 179.2L171.7 178.5L171.7 177.2L171.7 175.2L171.7 173.0L171.7 171.4L171.8 169.8L171.8 169.0L171.8 168.5L171.8 168.2L171.8 168.9L171.8 170.1L171.8 171.6L171.8 173.4L171.8 175.3L171.8 176.8L171.8 177.8L171.8 178.7L171.8 179.0L171.9 178.9L171.9 178.3L171.9 177.1L171.9 175.3L171.9 173.2L171.9 171.7L171.9 170.5L171.9 169.4L171.9 168.9L171.9 169.1L171.9 169.6L171.9 170.2L171.9 171.3L171.9 173.1L172.0 175.1L172.0 176.4L172.0 177.5L172.0 178.3L172.0 178.6L172.0 178.8L172.0 178.9L172.0 178.8L172.0 178.6L172.0 178.2L172.0 177.9L172.0 177.4L172.0 176.9L172.1 176.5L172.1 176.0L172.1 175.7L172.1 175.8L172.1 176.1L172.1 176.6L172.1 177.2L172.1 177.6L172.1 177.9L172.1 178.4L172.1 178.6L172.1 178.8L172.1 178.9L172.2 178.9L172.2 178.8L172.2 178.6L172.2 178.5L172.2 178.0L172.2 177.5L172.2 176.9L172.2 176.4L172.2 176.2L172.2 176.1L172.2 176.2L172.2 176.4L172.2 176.8L172.3 177.3L172.3 177.7L172.3 178.1L172.3 178.4L172.3 178.6L172.3 178.5L172.3 178.0L172.3 177.1L172.3 176.2L172.3 175.3L172.3 173.3L172.3 171.1L172.4 170.0L172.4 168.8L172.4 168.3L172.4 168.0L172.4 168.3L172.4 169.0L172.4 170.5L172.4 172.6L172.4 173.8L172.4 175.6L172.4 176.8L172.4 177.6L172.4 178.3L172.4 178.8L172.4 179.0L172.5 178.9L172.5 178.7L172.5 178.5L172.5 177.5L172.5 176.3L172.5 175.0L172.5 173.8L172.5 172.1L172.5 171.0L172.5 170.3L172.5 170.0L172.5 170.2L172.5 170.7L172.5 171.3L172.5 172.5L172.6 174.2L172.6 175.3L172.6 176.4L172.6 177.2L172.6 178.1L172.6 178.8L172.6 178.9L172.6 179.0L172.6 178.9L172.6 178.7L172.6 178.5L172.6 178.2L172.6 177.5L172.7 177.2L172.7 176.7L172.7 176.2L172.7 175.8L172.7 175.6L172.7 175.4L172.7 175.5L172.7 175.7L172.7 176.2L172.7 176.9L172.7 177.6L172.7 178.1L172.7 178.6L172.7 179.0L172.7 179.1L172.8 179.1L172.8 179.0L172.8 178.9L172.8 178.7L172.8 178.5L172.8 177.8L172.8 177.5L172.8 176.8L172.8 176.4L172.8 176.1L172.8 175.8L172.8 175.6L172.8 175.7L172.8 175.9L172.9 176.2L172.9 176.9L172.9 177.5L172.9 177.9L172.9 178.3L172.9 178.6L172.9 178.8L172.9 178.9L172.9 179.0L172.9 178.8L172.9 178.3L172.9 177.8L173.0 177.1L173.0 176.5L173.0 175.5L173.0 174.5L173.0 173.5L173.0 172.7L173.0 172.2L173.0 171.9L173.0 172.2L173.0 172.9L173.0 173.6L173.0 174.8L173.0 175.5L173.0 176.4L173.1 177.3L173.1 177.9L173.1 178.6L173.1 178.8L173.1 178.9L173.1 178.8L173.1 178.6L173.1 178.2L173.1 177.5L173.1 177.1L173.1 176.6L173.1 175.9L173.1 175.5L173.1 175.2L173.2 175.1L173.2 175.0L173.2 175.2L173.2 175.6L173.2 176.1L173.2 176.7L173.2 177.4L173.2 177.9L173.2 178.3L173.2 178.5L173.2 178.4L173.2 178.0L173.2 177.6L173.3 176.1L173.3 173.9L173.3 172.1L173.3 170.9L173.3 169.8L173.3 168.5L173.3 167.8L173.3 167.5L173.3 168.1L173.3 169.5L173.3 170.5L173.3 172.0L173.3 173.5L173.3 175.4L173.4 177.2L173.4 178.3L173.4 179.4L173.4 179.8L173.4 179.9L173.4 179.8L173.4 179.6L173.4 179.1L173.4 178.7L173.4 178.2L173.4 177.5L173.4 176.6L173.4 175.9L173.4 175.4L173.4 175.2L173.5 175.2L173.5 175.3L173.5 175.7L173.5 176.3L173.5 177.1L173.5 177.8L173.5 178.3L173.5 178.7L173.5 179.0L173.5 179.1L173.5 178.9L173.5 178.0L173.5 176.8L173.5 175.5L173.6 173.5L173.6 171.1L173.6 169.4L173.6 168.1L173.6 167.5L173.6 167.9L173.6 168.8L173.6 169.8L173.6 171.8L173.6 174.1L173.6 176.6L173.6 177.6L173.6 178.5L173.6 179.4L173.6 179.9L173.7 180.0L173.7 179.9L173.7 179.7L173.7 178.9L173.7 178.1L173.7 177.3L173.7 175.5L173.7 174.3L173.7 172.9L173.7 172.0L173.7 171.1L173.7 170.6L173.7 170.2L173.7 170.7L173.8 171.7L173.8 173.4L173.8 175.0L173.8 175.9L173.8 177.7L173.8 178.5L173.8 179.2L173.8 179.7L173.8 179.9L173.8 179.8L173.8 179.7L173.8 179.3L173.8 178.7L173.8 178.0L173.8 177.0L173.8 176.0L173.9 175.0L173.9 173.7L173.9 172.8L173.9 172.1L173.9 171.7L173.9 171.9L173.9 172.5L173.9 173.2L173.9 174.6L173.9 175.4L173.9 176.6L173.9 177.5L173.9 178.1L173.9 178.5L173.9 178.7L174.0 178.7L174.0 178.5L174.0 178.2L174.0 177.5L174.0 176.3L174.0 175.6L174.0 174.3L174.0 172.6L174.0 171.8L174.0 171.2L174.0 170.7L174.0 170.6L174.0 170.7L174.0 171.2L174.0 172.4L174.0 173.6L174.1 175.0L174.1 175.9L174.1 176.7L174.1 178.2L174.1 178.8L174.1 179.4L174.1 179.5L174.1 179.3L174.1 178.9L174.1 178.5L174.1 177.6L174.1 176.9L174.1 175.8L174.1 174.8L174.2 173.6L174.2 172.4L174.2 171.5L174.2 170.9L174.2 170.5L174.2 170.7L174.2 171.0L174.2 172.2L174.2 173.3L174.2 175.1L174.2 175.9L174.2 176.7L174.2 177.5L174.2 178.6L174.2 179.0L174.2 179.3L174.3 179.3L174.3 179.1L174.3 178.9L174.3 178.5L174.3 177.8L174.3 177.4L174.3 176.4L174.3 175.8L174.3 174.6L174.3 170.0L174.3 167.6L174.3 170.0L174.3 174.7L174.3 175.7L174.3 176.2L174.4 176.8L174.4 177.7L174.4 178.5L174.4 179.0L174.4 179.5L174.4 179.8L174.4 179.9L174.4 179.8L174.4 179.7L174.4 179.3L174.4 178.8L174.4 178.2L174.4 177.2L174.4 176.1L174.4 175.1L174.5 174.0L174.5 173.1L174.5 172.9L174.5 172.8L174.5 173.1L174.5 173.6L174.5 174.3L174.5 175.2L174.5 176.4L174.5 177.6L174.5 178.6L174.5 179.2L174.5 179.3L174.5 179.4L174.6 179.2L174.6 179.0L174.6 178.6L174.6 178.2L174.6 177.7L174.6 177.4L174.6 177.1L174.6 177.2L174.6 177.5L174.6 177.8L174.6 178.0L174.6 178.4L174.6 178.9L174.6 179.2L174.7 179.7L174.7 179.9L174.7 180.1L174.7 180.2L174.7 180.1L174.7 180.0L174.7 179.9L174.7 179.7L174.7 179.4L174.7 179.1L174.7 178.8L174.7 178.4L174.7 178.1L174.7 177.6L174.7 177.4L174.7 177.3L174.8 177.2L174.8 177.3L174.8 177.4L174.8 177.6L174.8 177.8L174.8 178.0L174.8 178.4L174.8 178.7L174.8 179.0L174.8 179.2L174.8 179.3L174.8 179.2L174.8 178.9L174.8 178.1L174.9 177.2L174.9 176.2L174.9 174.9L174.9 172.8L174.9 170.8L174.9 169.5L174.9 168.7L174.9 168.3L174.9 168.6L174.9 169.3L174.9 170.6L174.9 172.3L174.9 173.8L174.9 174.9L174.9 176.4L174.9 177.3L175.0 178.0L175.0 178.5L175.0 178.7L175.0 178.6L175.0 178.3L175.0 177.4L175.0 176.8L175.0 175.4L175.0 174.6L175.0 173.1L175.0 172.1L175.0 170.7L175.0 169.9L175.0 169.4L175.0 169.3L175.1 169.5L175.1 170.0L175.1 170.8L175.1 171.7L175.1 172.7L175.1 174.3L175.1 175.6L175.1 177.2L175.1 178.2L175.1 178.8L175.1 179.1L175.1 179.0L175.1 178.7L175.1 178.2L175.1 177.6L175.1 176.5L175.2 175.7L175.2 174.3L175.2 173.4L175.2 171.8L175.2 171.2L175.2 170.5L175.2 170.4L175.2 170.6L175.2 171.4L175.2 172.3L175.2 173.2L175.2 174.3L175.2 175.1L175.2 176.6L175.2 177.3L175.2 178.0L175.3 178.5L175.3 179.0L175.3 179.2L175.3 179.1L175.3 179.0L175.3 178.7L175.3 178.4L175.3 178.0L175.3 177.6L175.3 177.1L175.3 176.7L175.3 176.5L175.3 176.7L175.4 177.0L175.4 177.5L175.4 177.8L175.4 178.1L175.4 178.3L175.4 178.7L175.4 178.9L175.4 179.2L175.4 179.3L175.4 179.4L175.4 179.3L175.4 179.0L175.4 178.5L175.4 177.8L175.4 176.9L175.4 176.2L175.5 175.1L175.5 174.2L175.5 173.3L175.5 172.7L175.5 172.2L175.5 171.9L175.5 172.2L175.5 172.7L175.5 173.9L175.5 175.1L175.5 175.9L175.5 176.6L175.5 178.0L175.5 178.6L175.5 179.1L175.5 179.5L175.6 179.7L175.6 179.4L175.6 179.0L175.6 178.4L175.6 177.6L175.6 176.3L175.6 174.6L175.6 173.7L175.6 172.7L175.6 171.9L175.6 171.4L175.6 171.0L175.6 171.3L175.6 171.8L175.6 172.9L175.6 174.4L175.7 175.4L175.7 177.0L175.7 178.0L175.7 178.7L175.7 178.9L175.7 179.0L175.7 178.8L175.7 178.5L175.7 178.0L175.7 177.5L175.7 176.5L175.7 175.6L175.7 174.6L175.7 174.0L175.7 173.8L175.8 173.7L175.8 173.9L175.8 174.6L175.8 175.2L175.8 175.9L175.8 176.6L175.8 177.3L175.8 177.9L175.8 178.5L175.8 179.0L175.8 179.4L175.8 179.6L175.8 179.4L175.8 178.9L175.9 178.5L175.9 177.8L175.9 177.2L175.9 176.5L175.9 175.9L175.9 175.0L175.9 174.7L175.9 174.4L175.9 174.5L175.9 174.7L175.9 175.4L175.9 176.1L175.9 176.7L175.9 177.7L175.9 178.4L175.9 179.1L175.9 179.4L176.0 179.6L176.0 179.7L176.0 179.6L176.0 179.3L176.0 178.8L176.0 177.7L176.0 176.7L176.0 175.8L176.0 174.8L176.0 173.3L176.0 172.4L176.0 171.6L176.0 171.2L176.0 171.3L176.0 172.1L176.0 173.4L176.1 174.5L176.1 176.1L176.1 177.3L176.1 178.0L176.1 178.6L176.1 179.0L176.1 179.3L176.1 179.4L176.1 179.3L176.1 179.2L176.1 179.0L176.1 178.8L176.1 178.6L176.1 178.3L176.1 177.8L176.1 177.6L176.2 177.4L176.2 177.2L176.2 177.3L176.2 177.4L176.2 177.6L176.2 177.7L176.2 178.0L176.2 178.2L176.2 178.4L176.2 178.6L176.2 178.7L176.2 178.8L176.2 178.7L176.3 178.4L176.3 178.0L176.3 177.3L176.3 176.6L176.3 175.7L176.3 175.2L176.3 174.4L176.3 173.7L176.3 173.4L176.3 173.5L176.3 174.1L176.3 174.6L176.3 175.3L176.3 176.1L176.3 177.0L176.3 177.9L176.3 178.5L176.4 178.7L176.4 179.0L176.4 179.1L176.4 179.0L176.4 178.8L176.4 178.5L176.4 178.0L176.4 177.5L176.4 177.2L176.4 176.6L176.4 176.0L176.4 175.7L176.4 175.4L176.5 175.5L176.5 175.7L176.5 176.3L176.5 176.7L176.5 177.3L176.5 178.0L176.5 178.5L176.5 178.8L176.5 179.0L176.5 179.2L176.5 179.3L176.5 179.2L176.5 178.8L176.5 178.4L176.5 177.7L176.6 177.1L176.6 176.5L176.6 175.5L176.6 175.0L176.6 174.5L176.6 174.1L176.6 174.4L176.6 174.8L176.6 175.5L176.6 176.3L176.6 177.2L176.6 178.2L176.6 178.7L176.6 179.3L176.6 179.8L176.6 180.0L176.6 180.1L176.7 180.0L176.7 179.8L176.7 179.4L176.7 178.8L176.7 177.8L176.7 176.4L176.7 175.3L176.7 174.1L176.7 173.4L176.7 173.1L176.7 173.2L176.7 173.5L176.7 173.9L176.7 174.8L176.7 175.9L176.7 176.9L176.8 177.6L176.8 178.3L176.8 178.7L176.8 179.0L176.8 179.1L176.8 179.0L176.8 178.6L176.8 178.1L176.8 177.6L176.8 177.1L176.8 176.5L176.8 175.7L176.8 175.2L176.8 174.8L176.8 174.4L176.8 174.2L176.9 174.3L176.9 174.8L176.9 175.5L176.9 176.5L176.9 177.5L176.9 178.2L176.9 178.8L176.9 179.2L176.9 179.4L176.9 179.6L176.9 179.2L176.9 178.7L176.9 178.1L176.9 177.1L177.0 176.2L177.0 174.6L177.0 173.5L177.0 172.2L177.0 171.4L177.0 170.7L177.0 170.3L177.0 170.5L177.0 171.2L177.0 172.2L177.0 173.0L177.0 173.8L177.0 175.5L177.0 176.6L177.0 177.9L177.0 178.6L177.0 179.2L177.0 179.3L177.1 179.3L177.1 178.8L177.1 178.4L177.1 177.7L177.1 176.6L177.1 175.2L177.1 174.2L177.1 172.8L177.1 171.5L177.1 170.6L177.1 170.4L177.1 170.8L177.1 171.6L177.1 172.5L177.1 174.3L177.2 175.2L177.2 176.9L177.2 177.6L177.2 178.2L177.2 178.8L177.2 179.2L177.2 179.4L177.2 179.1L177.2 178.6L177.2 178.2L177.2 177.2L177.2 175.7L177.2 174.8L177.2 173.4L177.2 172.8L177.2 171.9L177.2 171.5L177.3 171.6L177.3 172.3L177.3 172.9L177.3 173.9L177.3 174.8L177.3 176.0L177.3 176.7L177.3 177.6L177.3 178.3L177.3 178.6L177.3 179.0L177.3 179.1L177.3 179.0L177.3 178.7L177.3 178.2L177.3 177.0L177.3 175.9L177.4 174.8L177.4 173.7L177.4 172.4L177.4 171.8L177.4 171.5L177.4 171.3L177.4 171.4L177.4 172.1L177.4 173.0L177.4 174.3L177.4 176.0L177.4 177.3L177.4 178.2L177.4 179.1L177.4 179.8L177.4 180.1L177.4 180.2L177.5 180.1L177.5 179.9L177.5 179.2L177.5 178.7L177.5 178.0L177.5 177.4L177.5 176.6L177.5 175.8L177.5 174.9L177.5 174.3L177.5 174.1L177.5 174.3L177.5 174.7L177.5 175.3L177.5 175.8L177.5 177.0L177.5 177.8L177.5 178.8L177.6 179.2L177.6 179.8L177.6 180.0L177.6 180.1L177.6 180.0L177.6 179.6L177.6 179.3L177.6 178.8L177.6 178.3L177.6 177.9L177.6 177.3L177.6 176.8L177.6 176.3L177.6 176.1L177.6 176.3L177.7 176.7L177.7 177.3L177.7 178.0L177.7 178.7L177.7 179.2L177.7 179.4L177.7 179.8L177.7 179.9L177.7 179.8L177.7 179.7L177.7 179.0L177.7 178.4L177.7 177.7L177.7 176.5L177.7 174.9L177.7 173.8L177.7 172.4L177.8 171.8L177.8 171.4L177.8 171.5L177.8 171.9L177.8 172.4L177.8 173.6L177.8 174.8L177.8 176.3L177.8 177.2L177.8 178.5L177.8 179.5L177.8 179.8L177.8 179.9L177.8 180.0L177.8 179.9L177.8 179.7L177.8 179.5L177.8 179.1L177.9 178.8L177.9 178.5L177.9 178.0L177.9 177.7L177.9 177.4L177.9 177.2L177.9 177.1L177.9 177.2L177.9 177.3L177.9 177.7L177.9 178.2L177.9 178.6L177.9 179.0L177.9 179.1L177.9 179.2L177.9 179.3L178.0 179.3L178.0 179.1L178.0 178.6L178.0 178.1L178.0 177.0L178.0 175.9L178.0 175.1L178.0 174.5L178.0 174.1L178.0 173.6L178.0 173.4L178.0 173.5L178.0 173.8L178.0 174.4L178.0 175.5L178.0 176.2L178.0 177.4L178.0 178.2L178.1 179.0L178.1 179.7L178.1 180.0L178.1 180.1L178.1 179.9L178.1 179.7L178.1 179.2L178.1 178.8L178.1 177.7L178.1 177.0L178.1 176.2L178.1 175.0L178.1 174.0L178.1 173.3L178.1 173.2L178.1 173.4L178.1 173.9L178.2 174.6L178.2 175.7L178.2 176.4L178.2 177.0L178.2 178.1L178.2 179.1L178.2 179.7L178.2 180.0L178.2 180.1L178.2 180.2L178.2 180.1L178.2 179.9L178.2 179.7L178.2 179.5L178.2 179.1L178.2 178.8L178.2 178.4L178.2 177.9L178.3 177.6L178.3 177.5L178.3 177.4L178.3 177.5L178.3 177.7L178.3 177.8L178.3 178.0L178.3 178.3L178.3 178.7L178.3 178.9L178.3 179.2L178.3 179.5L178.3 179.6L178.3 179.4L178.4 179.2L178.4 179.0L178.4 178.7L178.4 178.4L178.4 177.9L178.4 177.5L178.4 177.2L178.4 176.8L178.4 176.7L178.4 177.0L178.4 177.4L178.4 177.9L178.4 178.2L178.4 178.8L178.4 179.2L178.4 179.6L178.4 179.9L178.4 180.0L178.5 180.2L178.5 179.9L178.5 179.5L178.5 179.0L178.5 178.5L178.5 177.7L178.5 176.8L178.5 176.0L178.5 175.1L178.5 174.3L178.5 173.4L178.5 173.1L178.5 173.0L178.5 173.2L178.5 173.6L178.5 174.6L178.5 175.2L178.5 175.9L178.6 176.9L178.6 177.6L178.6 178.2L178.6 178.8L178.6 179.1L178.6 179.2L178.6 178.9L178.6 178.6L178.6 178.1L178.6 177.2L178.6 176.5L178.6 175.0L178.6 173.4L178.6 172.6L178.6 171.8L178.6 171.6L178.6 171.7L178.7 172.1L178.7 172.6L178.7 173.2L178.7 174.3L178.7 175.1L178.7 176.8L178.7 178.0L178.7 178.9L178.7 179.5L178.7 179.8L178.7 179.6L178.7 179.4L178.7 179.0L178.7 178.6L178.7 178.0L178.7 177.6L178.8 176.7L178.8 176.2L178.8 175.7L178.8 175.5L178.8 175.4L178.8 175.5L178.8 175.7L178.8 176.4L178.8 176.8L178.8 177.4L178.8 178.2L178.8 178.7L178.8 179.3L178.8 179.6L178.8 179.8L178.8 179.9L178.8 179.6L178.8 179.3L178.9 178.8L178.9 178.1L178.9 177.2L178.9 176.5L178.9 175.5L178.9 174.8L178.9 174.5L178.9 174.3L178.9 174.7L178.9 175.2L178.9 176.0L178.9 177.1L178.9 177.8L178.9 178.7L178.9 179.1L178.9 179.3L178.9 179.4L178.9 179.5L179.0 179.5L179.0 179.3L179.0 178.9L179.0 178.2L179.0 177.5L179.0 176.5L179.0 175.4L179.0 174.5L179.0 173.7L179.0 173.0L179.0 172.8L179.0 173.0L179.0 173.3L179.0 174.2L179.0 175.0L179.0 176.3L179.0 177.4L179.0 178.1L179.0 178.7L179.0 178.9L179.1 179.0L179.1 178.9L179.1 178.4L179.1 177.9L179.1 177.3L179.1 176.4L179.1 175.7L179.1 174.8L179.1 174.3L179.1 173.9L179.1 174.0L179.1 174.3L179.1 175.2L179.1 176.2L179.1 177.4L179.1 177.9L179.1 178.4L179.1 179.1L179.2 179.5L179.2 179.8L179.2 179.9L179.2 179.8L179.2 179.5L179.2 178.9L179.2 178.0L179.2 177.4L179.2 176.7L179.2 176.0L179.2 175.5L179.2 175.1L179.2 175.0L179.2 175.4L179.2 175.8L179.2 176.5L179.2 177.5L179.2 178.2L179.3 179.0L179.3 179.6L179.3 179.9L179.3 180.0L179.3 179.8L179.3 179.5L179.3 178.9L179.3 178.4L179.3 177.5L179.3 176.4L179.3 175.3L179.3 174.3L179.3 173.9L179.3 173.7L179.3 173.8L179.3 174.0L179.3 174.4L179.3 174.9L179.4 176.0L179.4 176.9L179.4 178.0L179.4 178.8L179.4 179.5L179.4 179.8L179.4 179.6L179.4 179.2L179.4 178.5L179.4 177.5L179.4 176.3L179.4 175.4L179.4 174.8L179.4 173.8L179.4 173.3L179.4 173.1L179.4 173.2L179.4 173.3L179.5 173.7L179.5 174.2L179.5 174.9L179.5 175.5L179.5 176.2L179.5 177.0L179.5 177.6L179.5 178.2L179.5 178.7L179.5 179.2L179.5 179.3L179.5 179.2L179.5 179.1L179.5 178.6L179.5 178.0L179.5 177.1L179.5 175.9L179.5 174.7L179.6 173.5L179.6 173.1L179.6 172.7L179.6 172.5L179.6 172.9L179.6 173.4L179.6 173.9L179.6 174.9L179.6 175.6L179.6 176.4L179.6 177.2L179.6 178.2L179.6 178.7L179.6 179.0L179.6 179.1L179.6 179.0L179.6 178.7L179.7 178.3L179.7 177.8L179.7 176.8L179.7 175.8L179.7 175.3L179.7 174.8L179.7 174.4L179.7 174.3L179.7 174.4L179.7 174.7L179.7 175.4L179.7 175.9L179.7 177.1L179.7 177.8L179.7 178.4L179.7 178.9L179.7 179.6L179.7 180.0L179.7 180.1L179.8 180.1L179.8 179.8L179.8 179.4L179.8 178.5L179.8 177.9L179.8 176.7L179.8 175.9L179.8 175.0L179.8 174.4L179.8 173.9L179.8 174.1L179.8 174.5L179.8 174.9L179.8 176.1L179.8 176.8L179.8 177.7L179.8 178.4L179.8 179.3L179.8 179.9L179.9 180.2L179.9 180.3L179.9 180.2L179.9 180.1L179.9 179.9L179.9 179.5L179.9 179.2L179.9 178.7L179.9 178.4L179.9 178.1L179.9 177.6L179.9 177.5L179.9 177.3L179.9 177.4L179.9 177.5L179.9 177.9L180.0 178.2L180.0 178.8L180.0 179.1L180.0 179.4L180.0 179.7L180.0 179.8L180.0 179.9L180.0 179.8L180.0 179.7L180.0 179.5L180.0 179.3L180.0 178.9L180.0 178.5L180.0 178.0L180.0 177.7L180.0 177.5L180.0 177.4L180.1 177.5L180.1 177.8L180.1 178.1L180.1 178.5L180.1 179.0L180.1 179.4L180.1 179.7L180.1 179.8L180.1 179.9L180.1 179.8L180.1 179.5L180.1 179.1L180.1 178.1L180.1 177.4L180.1 176.1L180.1 174.8L180.1 174.1L180.1 173.2L180.1 172.8L180.2 172.9L180.2 173.2L180.2 173.7L180.2 174.3L180.2 175.2L180.2 176.4L180.2 177.5L180.2 178.4L180.2 178.9L180.2 179.2L180.2 179.4L180.2 179.3L180.2 179.1L180.2 178.7L180.2 178.5L180.2 178.0L180.2 177.5L180.2 177.2L180.2 176.9L180.3 176.7L180.3 176.8L180.3 177.2L180.3 177.5L180.3 178.1L180.3 178.5L180.3 178.8L180.3 179.2L180.3 179.3L180.3 179.5L180.3 179.4L180.3 179.1L180.3 178.7L180.3 178.0L180.3 177.4L180.3 176.7L180.3 176.0L180.3 175.5L180.4 175.4L180.4 175.6L180.4 175.8L180.4 176.1L180.4 176.8L180.4 177.3L180.4 178.1L180.4 178.5L180.4 178.8L180.4 179.2L180.4 179.4L180.4 179.3L180.4 178.9L180.4 178.4L180.4 177.4L180.4 176.4L180.4 175.0L180.5 174.1L180.5 173.1L180.5 172.7L180.5 172.5L180.5 172.7L180.5 173.2L180.5 174.2L180.5 175.4L180.5 176.3L180.5 177.0L180.5 178.1L180.5 179.0L180.5 179.5L180.5 179.8L180.5 179.7L180.5 179.6L180.5 179.3L180.5 178.9L180.5 178.7L180.6 178.2L180.6 178.0L180.6 177.8L180.6 177.6L180.6 177.5L180.6 177.6L180.6 177.8L180.6 177.9L180.6 178.2L180.6 178.4L180.6 178.8L180.6 179.0L180.6 179.2L180.6 179.4L180.6 179.6L180.6 179.7L180.6 179.8L180.6 179.7L180.6 179.5L180.7 179.3L180.7 178.9L180.7 178.0L180.7 177.2L180.7 176.4L180.7 175.8L180.7 174.8L180.7 174.2L180.7 174.0L180.7 174.1L180.7 174.4L180.7 175.1L180.7 175.6L180.7 176.5L180.7 177.2L180.7 178.0L180.7 178.5L180.7 178.9L180.7 179.1L180.7 179.2L180.8 179.2L180.8 179.0L180.8 178.7L180.8 178.5L180.8 178.2L180.8 177.9L180.8 177.4L180.8 177.2L180.8 177.1L180.8 176.9L180.8 177.0L180.8 177.2L180.8 177.5L180.8 177.9L180.8 178.3L180.8 179.0L180.8 179.5L180.8 179.7L180.8 180.0L180.9 180.2L180.9 180.3L180.9 180.2L180.9 180.0L180.9 179.4L180.9 178.5L180.9 177.7L180.9 176.9L180.9 176.3L180.9 175.8L180.9 175.1L180.9 174.7L180.9 175.2L180.9 175.8L180.9 176.4L180.9 177.0L180.9 177.9L180.9 179.0L180.9 179.7L180.9 180.0L181.0 180.2L181.0 180.3L181.0 180.2L181.0 179.9L181.0 179.5L181.0 178.9L181.0 178.0L181.0 176.6L181.0 175.8L181.0 174.9L181.0 174.3L181.0 173.9L181.0 173.5L181.0 173.4L181.0 173.7L181.0 174.3L181.0 175.1L181.0 175.9L181.0 177.2L181.0 178.2L181.0 178.7L181.1 179.5L181.1 180.1L181.1 180.3L181.1 180.2L181.1 180.1L181.1 179.4L181.1 178.4L181.1 177.7L181.1 176.5L181.1 175.4L181.1 174.5L181.1 173.7L181.1 173.4L181.1 173.6L181.1 174.3L181.1 175.2L181.1 176.1L181.1 177.2L181.1 177.8L181.2 178.3L181.2 178.7L181.2 179.1L181.2 178.5L181.2 176.5L181.2 173.7L181.2 172.3L181.2 173.7L181.2 176.5L181.2 177.8L181.2 176.6L181.2 175.7L181.2 175.0L181.2 174.2L181.2 173.8L181.2 173.6L181.2 173.7L181.2 174.0L181.2 174.6L181.2 175.4L181.2 176.4L181.3 177.3L181.3 178.3L181.3 178.8L181.3 179.4L181.3 179.6L181.3 179.7L181.3 179.4L181.3 178.8L181.3 178.0L181.3 177.4L181.3 176.5L181.3 175.8L181.3 175.5L181.3 175.3L181.3 175.5L181.3 175.8L181.3 176.1L181.3 176.6L181.3 177.3L181.4 178.0L181.4 178.6L181.4 179.1L181.4 179.4L181.4 179.5L181.4 179.3L181.4 179.2L181.4 178.7L181.4 178.3L181.4 177.7L181.4 176.8L181.4 176.4L181.4 175.7L181.4 175.3L181.4 175.2L181.4 175.4L181.4 175.6L181.4 176.2L181.4 177.0L181.5 177.6L181.5 178.3L181.5 178.7L181.5 179.1L181.5 179.3L181.5 179.5L181.5 179.6L181.5 179.5L181.5 179.4L181.5 179.2L181.5 178.8L181.5 178.5L181.5 178.1L181.5 177.8L181.5 177.6L181.5 177.4L181.5 177.3L181.5 177.4L181.5 177.5L181.5 177.8L181.6 178.1L181.6 178.4L181.6 178.6L181.6 179.0L181.6 179.2L181.6 179.4L181.6 179.3L181.6 179.1L181.6 178.8L181.6 178.6L181.6 178.2L181.6 178.1L181.6 177.9L181.6 177.8L181.6 177.7L181.6 177.9L181.7 178.0L181.7 178.4L181.7 178.8L181.7 179.1L181.7 179.3L181.7 179.6L181.7 179.7L181.7 179.5L181.7 179.2L181.7 178.8L181.7 178.1L181.7 177.5L181.7 176.7L181.7 176.0L181.7 175.4L181.7 174.7L181.7 174.3L181.7 174.1L181.7 174.2L181.8 174.5L181.8 174.9L181.8 175.8L181.8 176.6L181.8 177.2L181.8 178.0L181.8 178.6L181.8 179.0L181.8 179.4L181.8 179.7L181.8 179.9L181.8 180.0L181.8 179.9L181.8 179.8L181.8 179.6L181.8 179.4L181.8 179.1L181.8 178.9L181.9 178.6L181.9 178.5L181.9 178.6L181.9 178.8L181.9 179.0L181.9 179.3L181.9 179.6L181.9 179.8L181.9 180.0L181.9 180.1L181.9 180.2L181.9 180.0L181.9 179.8L181.9 179.2L181.9 178.5L181.9 177.9L181.9 177.0L181.9 175.8L181.9 175.1L182.0 174.0L182.0 173.6L182.0 173.2L182.0 173.1L182.0 173.7L182.0 174.8L182.0 176.1L182.0 176.9L182.0 178.2L182.0 178.8L182.0 179.3L182.0 179.8L182.0 179.9L182.0 179.7L182.0 179.5L182.0 179.3L182.0 179.0L182.0 178.8L182.1 178.6L182.1 178.4L182.1 178.1L182.1 177.9L182.1 177.8L182.1 177.7L182.1 177.9L182.1 178.1L182.1 178.4L182.1 178.8L182.1 179.2L182.1 179.6L182.1 179.8L182.1 179.9L182.1 180.0L182.1 180.1L182.1 180.0L182.1 179.7L182.1 179.1L182.1 178.3L182.1 177.8L182.2 177.0L182.2 175.9L182.2 175.5L182.2 175.0L182.2 174.6L182.2 174.4L182.2 174.7L182.2 175.3L182.2 176.1L182.2 176.8L182.2 177.3L182.2 178.1L182.2 178.5L182.2 179.0L182.2 179.2L182.2 179.3L182.2 179.2L182.2 178.8L182.3 178.6L182.3 178.0L182.3 177.4L182.3 176.9L182.3 176.7L182.3 176.4L182.3 176.2L182.3 176.0L182.3 176.2L182.3 176.7L182.3 177.2L182.3 177.6L182.3 178.0L182.3 178.7L182.3 179.2L182.3 179.4L182.3 179.5L182.3 179.4L182.3 179.1L182.4 178.5L182.4 177.6L182.4 177.0L182.4 176.6L182.4 176.1L182.4 175.7L182.4 175.3L182.4 175.2L182.4 175.4L182.4 175.7L182.4 176.4L182.4 177.1L182.4 178.0L182.4 178.8L182.4 179.4L182.4 179.7L182.4 179.8L182.4 180.0L182.4 179.9L182.4 179.6L182.4 179.0L182.5 178.6L182.5 177.6L182.5 176.6L182.5 175.7L182.5 174.9L182.5 174.6L182.5 174.4L182.5 174.5L182.5 175.1L182.5 175.5L182.5 176.4L182.5 177.5L182.5 178.3L182.5 178.8L182.5 179.5L182.5 179.7L182.5 179.8L182.5 179.7L182.5 179.5L182.5 179.1L182.5 178.9L182.6 178.6L182.6 178.1L182.6 177.6L182.6 177.4L182.6 177.2L182.6 177.1L182.6 177.2L182.6 177.5L182.6 178.0L182.6 178.5L182.6 178.8L182.6 179.2L182.6 179.6L182.6 179.7L182.6 179.8L182.6 179.9L182.6 179.8L182.6 179.7L182.6 179.2L182.6 178.4L182.7 177.6L182.7 176.4L182.7 175.5L182.7 174.6L182.7 174.1L182.7 174.4L182.7 175.1L182.7 176.0L182.7 177.2L182.7 177.9L182.7 178.5L182.7 179.0L182.7 179.5L182.7 179.7L182.7 179.5L182.7 179.1L182.7 178.4L182.7 177.4L182.7 176.6L182.8 175.8L182.8 175.0L182.8 174.5L182.8 174.6L182.8 175.1L182.8 175.9L182.8 176.7L182.8 177.6L182.8 178.3L182.8 178.9L182.8 179.1L182.8 179.3L182.8 179.4L182.8 179.3L182.8 178.9L182.8 178.6L182.8 178.0L182.8 177.4L182.8 176.6L182.8 176.2L182.9 175.7L182.9 175.6L182.9 175.5L182.9 175.6L182.9 175.9L182.9 176.3L182.9 176.8L182.9 177.5L182.9 178.1L182.9 178.9L182.9 179.5L182.9 179.9L182.9 180.0L182.9 180.1L182.9 180.0L182.9 179.9L182.9 179.6L182.9 179.3L182.9 178.9L182.9 178.2L182.9 177.8L182.9 177.1L183.0 176.6L183.0 176.3L183.0 175.9L183.0 175.7L183.0 175.9L183.0 176.3L183.0 176.9L183.0 177.4L183.0 177.9L183.0 178.4L183.0 178.9L183.0 179.4L183.0 179.6L183.0 179.7L183.0 179.6L183.0 179.3L183.0 178.9L183.0 178.4L183.0 178.2L183.1 177.7L183.1 177.4L183.1 177.0L183.1 176.8L183.1 176.7L183.1 177.0L183.1 177.2L183.1 177.7L183.1 178.0L183.1 178.5L183.1 179.1L183.1 179.5L183.1 179.7L183.1 179.8L183.1 179.6L183.1 179.3L183.1 178.9L183.1 178.0L183.1 177.1L183.1 175.8L183.2 175.2L183.2 174.2L183.2 173.6L183.2 173.5L183.2 173.6L183.2 173.9L183.2 174.3L183.2 174.9L183.2 176.0L183.2 176.7L183.2 177.5L183.2 178.0L183.2 178.7L183.2 179.0L183.2 179.3L183.2 179.4L183.2 179.3L183.2 179.1L183.2 178.8L183.2 178.5L183.3 178.1L183.3 177.6L183.3 177.1L183.3 176.8L183.3 176.7L183.3 176.8L183.3 177.0L183.3 177.5L183.3 177.8L183.3 178.5L183.3 179.1L183.3 179.5L183.3 179.8L183.3 180.1L183.3 180.0L183.3 179.9L183.3 179.6L183.3 179.4L183.3 179.1L183.3 178.6L183.4 178.3L183.4 177.9L183.4 177.7L183.4 177.6L183.4 177.7L183.4 178.0L183.4 178.4L183.4 178.8L183.4 179.2L183.4 179.4L183.4 179.6L183.4 179.7L183.4 179.6L183.4 179.5L183.4 179.1L183.4 178.7L183.4 178.1L183.4 177.5L183.5 176.9L183.5 176.4L183.5 176.1L183.5 176.0L183.5 176.1L183.5 176.6L183.5 177.4L183.5 178.1L183.5 178.7L183.5 179.2L183.5 179.5L183.5 180.0L183.5 180.2L183.5 180.3L183.5 180.2L183.5 179.9L183.5 179.3L183.5 178.8L183.5 178.3L183.5 177.6L183.5 176.7L183.5 176.1L183.6 175.5L183.6 174.9L183.6 174.6L183.6 174.2L183.6 174.0L183.6 174.3L183.6 174.9L183.6 175.8L183.6 176.6L183.6 177.3L183.6 177.9L183.6 178.5L183.6 179.3L183.6 179.7L183.6 179.8L183.6 179.7L183.6 179.3L183.6 178.9L183.6 178.1L183.6 177.2L183.6 176.4L183.6 175.7L183.7 175.1L183.7 174.5L183.7 174.0L183.7 174.2L183.7 174.6L183.7 175.1L183.7 175.7L183.7 176.2L183.7 177.2L183.7 177.9L183.7 178.6L183.7 179.0L183.7 179.4L183.7 179.3L183.7 179.0L183.7 178.7L183.7 178.3L183.7 177.8L183.7 177.3L183.8 176.9L183.8 176.3L183.8 176.0L183.8 175.8L183.8 175.9L183.8 176.0L183.8 176.4L183.8 176.9L183.8 177.5L183.8 178.0L183.8 178.6L183.8 179.2L183.8 179.4L183.8 179.6L183.8 179.7L183.8 179.6L183.8 179.4L183.8 179.2L183.8 179.0L183.8 178.4L183.9 178.1L183.9 177.6L183.9 177.2L183.9 177.0L183.9 177.1L183.9 177.2L183.9 177.5L183.9 178.0L183.9 178.6L183.9 178.9L183.9 179.2L183.9 179.7L183.9 180.0L183.9 180.2L183.9 180.3L183.9 180.2L183.9 179.9L183.9 179.4L183.9 178.7L183.9 178.2L183.9 177.5L184.0 176.6L184.0 175.9L184.0 175.3L184.0 175.1L184.0 175.3L184.0 175.6L184.0 176.3L184.0 176.9L184.0 177.5L184.0 178.2L184.0 178.7L184.0 179.1L184.0 179.3L184.0 179.4L184.0 179.5L184.0 179.4L184.0 179.3L184.0 179.1L184.0 178.6L184.0 178.1L184.0 177.6L184.1 177.1L184.1 176.8L184.1 176.5L184.1 176.1L184.1 176.0L184.1 176.2L184.1 176.6L184.1 176.9L184.1 177.5L184.1 177.9L184.1 178.4L184.1 178.9L184.1 179.3L184.1 179.7L184.1 179.8L184.1 179.9L184.1 179.8L184.1 179.7L184.1 179.5L184.1 179.2L184.1 178.4L184.1 177.7L184.1 177.2L184.2 176.3L184.2 175.7L184.2 175.2L184.2 174.8L184.2 174.9L184.2 175.2L184.2 176.0L184.2 176.7L184.2 177.5L184.2 178.4L184.2 179.2L184.2 179.6L184.2 179.8L184.2 179.6L184.2 179.2L184.2 178.5L184.2 177.7L184.2 176.9L184.2 176.0L184.2 175.4L184.2 174.9L184.3 174.8L184.3 175.2L184.3 175.5L184.3 176.4L184.3 177.4L184.3 178.2L184.3 178.8L184.3 179.2L184.3 179.4L184.3 179.5L184.3 179.3L184.3 179.0L184.3 178.4L184.3 177.9L184.3 177.1L184.3 176.3L184.3 175.8L184.3 175.5L184.3 175.8L184.3 176.2L184.4 176.6L184.4 177.0L184.4 177.9L184.4 178.3L184.4 179.0L184.4 179.3L184.4 179.7L184.4 179.8L184.4 179.6L184.4 179.2L184.4 178.4L184.4 177.9L184.4 177.2L184.4 176.0L184.4 175.1L184.4 174.4L184.4 174.2L184.4 174.3L184.4 174.9L184.4 175.7L184.4 176.3L184.4 176.9L184.5 177.5L184.5 178.1L184.5 178.6L184.5 179.2L184.5 179.8L184.5 180.1L184.5 180.2L184.5 180.1L184.5 179.7L184.5 179.1L184.5 178.8L184.5 178.1L184.5 177.4L184.5 176.8L184.5 176.4L184.5 176.0L184.5 175.9L184.5 176.0L184.5 176.2L184.5 176.7L184.5 177.1L184.5 177.8L184.5 178.3L184.6 178.9L184.6 179.3L184.6 179.6L184.6 179.9L184.6 180.0L184.6 179.9L184.6 179.7L184.6 179.4L184.6 178.9L184.6 178.3L184.6 177.3L184.6 176.6L184.6 175.6L184.6 175.2L184.6 174.7L184.6 174.4L184.6 174.2L184.6 174.5L184.6 175.0L184.6 175.4L184.6 176.1L184.6 177.2L184.6 178.1L184.7 178.8L184.7 179.3L184.7 179.5L184.7 179.7L184.7 179.6L184.7 179.5L184.7 179.1L184.7 178.5L184.7 178.0L184.7 177.4L184.7 176.8L184.7 176.5L184.7 176.2L184.7 176.0L184.7 175.9L184.7 176.0L184.7 176.4L184.7 176.9L184.7 177.3L184.7 178.1L184.7 178.8L184.7 179.4L184.8 179.7L184.8 179.9L184.8 180.0L184.8 179.9L184.8 179.8L184.8 179.5L184.8 179.3L184.8 178.9L184.8 178.6L184.8 178.3L184.8 178.2L184.8 178.1L184.8 178.2L184.8 178.3L184.8 178.5L184.8 178.7L184.8 179.0L184.8 179.4L184.8 179.7L184.8 180.0L184.8 180.1L184.8 180.2L184.9 180.2L184.9 179.9L184.9 179.6L184.9 179.0L184.9 178.3L184.9 178.0L184.9 177.5L184.9 176.9L184.9 176.6L184.9 176.4L184.9 176.2L184.9 176.4L184.9 176.7L184.9 177.3L184.9 177.9L184.9 178.4L184.9 179.0L184.9 179.5L184.9 179.9L184.9 180.0L185.0 180.0L185.0 179.8L185.0 179.6L185.0 179.3L185.0 178.9L185.0 178.2L185.0 177.4L185.0 176.9L185.0 176.3L185.0 175.8L185.0 175.6L185.0 175.5L185.0 175.8L185.0 176.3L185.0 176.9L185.0 177.7L185.0 178.2L185.0 178.8L185.0 179.5L185.0 180.0L185.0 180.2L185.0 180.3L185.1 180.2L185.1 180.1L185.1 179.9L185.1 179.6L185.1 179.3L185.1 178.9L185.1 178.3L185.1 177.8L185.1 177.5L185.1 177.3L185.1 177.4L185.1 177.7L185.1 178.1L185.1 178.7L185.1 179.3L185.1 179.5L185.1 179.9L185.1 180.1L185.1 180.2L185.1 180.3L185.1 180.2L185.1 180.1L185.2 179.9L185.2 179.6L185.2 179.3L185.2 179.1L185.2 178.8L185.2 178.7L185.2 178.6L185.2 178.8L185.2 179.1L185.2 179.3L185.2 179.4L185.2 179.6L185.2 179.9L185.2 180.0L185.2 180.1L185.2 180.3L185.2 180.2L185.2 180.0L185.2 179.8L185.2 179.4L185.3 178.9L185.3 178.5L185.3 178.3L185.3 178.0L185.3 177.7L185.3 177.6L185.3 177.7L185.3 177.8L185.3 178.1L185.3 178.4L185.3 178.6L185.3 178.9L185.3 179.2L185.3 179.6L185.3 179.8L185.3 179.9L185.3 180.0L185.3 179.9L185.3 179.8L185.3 179.7L185.3 179.3L185.3 178.9L185.3 178.4L185.3 178.0L185.4 177.1L185.4 176.3L185.4 175.8L185.4 175.6L185.4 175.9L185.4 176.4L185.4 177.1L185.4 177.8L185.4 178.8L185.4 179.4L185.4 179.6L185.4 179.9L185.4 180.1L185.4 180.0L185.4 179.8L185.4 179.6L185.4 179.3L185.4 179.0L185.4 178.8L185.4 178.5L185.5 178.4L185.5 178.3L185.5 178.4L185.5 178.5L185.5 178.7L185.5 179.0L185.5 179.3L185.5 179.5L185.5 179.8L185.5 180.1L185.5 180.2L185.5 180.1L185.5 180.0L185.5 179.9L185.5 179.7L185.5 179.6L185.5 179.4L185.5 179.3L185.5 179.2L185.5 179.1L185.6 179.1L185.6 179.2L185.6 179.3L185.6 179.4L185.6 179.6L185.6 179.7L185.6 179.8L185.6 179.7L185.6 179.6L185.6 179.1L185.6 178.4L185.6 177.7L185.6 176.8L185.6 176.3L185.6 175.8L185.6 175.4L185.6 175.3L185.6 175.6L185.6 175.9L185.6 176.4L185.7 177.1L185.7 177.6L185.7 178.4L185.7 178.9L185.7 179.4L185.7 179.7L185.7 179.9L185.7 179.7L185.7 179.5L185.7 179.1L185.7 178.7L185.7 177.8L185.7 176.9L185.7 176.0L185.7 175.3L185.7 175.0L185.7 174.9L185.7 175.2L185.7 175.7L185.7 176.5L185.7 177.4L185.7 178.2L185.7 179.0L185.7 179.4L185.8 179.7L185.8 179.4L185.8 178.8L185.8 178.1L185.8 177.2L185.8 176.4L185.8 175.8L185.8 175.5L185.8 175.4L185.8 175.8L185.8 176.4L185.8 177.1L185.8 177.9L185.8 178.7L185.8 179.3L185.8 179.8L185.8 180.1L185.8 180.2L185.8 180.3L185.8 180.2L185.8 180.1L185.8 179.9L185.9 179.4L185.9 179.1L185.9 178.3L185.9 177.8L185.9 177.0L185.9 176.5L185.9 175.9L185.9 175.8L185.9 175.7L185.9 175.9L185.9 176.4L185.9 176.9L185.9 177.5L185.9 178.2L185.9 178.7L185.9 179.2L185.9 179.6L185.9 179.8L185.9 179.9L185.9 179.8L185.9 179.5L185.9 179.1L185.9 178.4L186.0 178.0L186.0 177.4L186.0 176.9L186.0 176.6L186.0 176.2L186.0 176.1L186.0 176.2L186.0 176.4L186.0 176.9L186.0 177.3L186.0 177.9L186.0 178.7L186.0 179.4L186.0 179.7L186.0 179.9L186.0 180.1L186.0 180.2L186.0 180.1L186.0 179.9L186.0 179.5L186.0 179.1L186.0 178.8L186.0 178.2L186.0 177.7L186.0 177.4L186.1 177.2L186.1 177.0L186.1 176.9L186.1 177.1L186.1 177.3L186.1 177.8L186.1 178.3L186.1 178.7L186.1 179.1L186.1 179.5L186.1 179.7L186.1 179.9L186.1 180.0L186.1 179.8L186.1 179.6L186.1 179.3L186.1 178.9L186.1 178.4L186.1 178.1L186.1 177.4L186.1 176.8L186.1 176.6L186.1 176.5L186.2 176.7L186.2 176.9L186.2 177.2L186.2 177.7L186.2 178.2L186.2 178.8L186.2 179.4L186.2 179.7L186.2 179.9L186.2 180.0L186.2 180.1L186.2 180.0L186.2 179.9L186.2 179.7L186.2 179.5L186.2 178.9L186.2 178.3L186.2 177.9L186.2 177.2L186.2 176.9L186.2 176.4L186.2 176.2L186.2 176.3L186.2 176.7L186.2 177.4L186.3 178.2L186.3 178.9L186.3 179.3L186.3 179.7L186.3 179.9L186.3 179.8L186.3 179.6L186.3 179.4L186.3 179.1L186.3 178.9L186.3 178.6L186.3 178.2L186.3 178.0L186.3 177.9L186.3 178.1L186.3 178.3L186.3 178.5L186.3 178.9L186.3 179.3L186.3 179.5L186.3 179.7L186.4 179.8L186.4 179.9L186.4 180.0L186.4 179.9L186.4 179.8L186.4 179.6L186.4 179.4L186.4 179.2L186.4 179.0L186.4 178.7L186.4 178.6L186.4 178.4L186.4 178.3L186.4 178.4L186.4 178.5L186.4 178.8L186.4 178.9L186.4 179.2L186.4 179.4L186.4 179.6L186.4 179.7L186.5 179.6L186.5 179.5L186.5 179.1L186.5 178.7L186.5 178.3L186.5 177.8L186.5 177.3L186.5 176.8L186.5 176.5L186.5 176.4L186.5 176.5L186.5 176.2L186.5 175.3" stroke="#0a0a88" stroke-width="0.8" fill="none" stroke-linejoin="round"/></svg>
<svg class="r" style="left:354.2px;top:449.6px;overflow:visible" width="219.4" height="180.6"><rect x="0" y="0" width="219.4" height="180.6" fill="#fff"/><path d="M0.0 0V180.6M16.5 0V180.6M26.2 0V180.6M33.0 0V180.6M38.3 0V180.6M42.7 0V180.6M46.4 0V180.6M49.5 0V180.6M52.3 0V180.6M54.9 0V180.6M71.4 0V180.6M81.0 0V180.6M87.9 0V180.6M93.2 0V180.6M97.5 0V180.6M101.2 0V180.6M104.4 0V180.6M107.2 0V180.6M109.7 0V180.6M126.2 0V180.6M135.9 0V180.6M142.7 0V180.6M148.0 0V180.6M152.4 0V180.6M156.1 0V180.6M159.2 0V180.6M162.0 0V180.6M164.6 0V180.6M181.1 0V180.6M190.7 0V180.6M197.6 0V180.6M202.9 0V180.6M207.2 0V180.6M210.9 0V180.6M214.1 0V180.6M216.9 0V180.6M218.9 0V180.6M0 0.0H219.4M0 18.1H219.4M0 36.1H219.4M0 54.2H219.4M0 72.2H219.4M0 90.3H219.4M0 108.4H219.4M0 126.4H219.4M0 144.5H219.4M0 162.5H219.4M0 180.6H219.4" stroke="#e2e2e2" stroke-width="1" fill="none"/><path d="M0.0 179.7L8.0 179.8L14.0 180.1L18.8 180.4L22.8 180.5L26.2 180.6L29.2 180.5L31.8 180.3L34.2 180.0L36.4 179.7L38.3 179.4L40.2 179.1L41.9 178.9L43.5 178.6L45.0 178.2L46.4 177.9L47.7 177.3L48.9 176.5L50.1 175.9L51.3 175.8L52.3 176.2L53.4 176.8L54.4 178.3L55.3 176.7L56.2 164.3L57.1 150.5L58.0 136.0L58.8 123.6L59.6 121.9L60.4 123.8L61.1 126.2L61.8 127.6L62.5 127.4L63.2 126.4L63.9 125.0L64.5 123.4L65.1 120.3L65.7 115.3L66.3 110.2L66.9 106.3L67.5 104.7L68.0 106.7L68.6 111.2L69.1 116.6L69.6 121.7L70.1 128.1L70.6 134.7L71.1 139.0L71.6 139.2L72.1 135.8L72.5 130.9L73.0 126.2L73.4 123.2L73.8 123.8L74.3 130.5L74.7 140.2L75.1 149.6L75.5 155.6L75.9 155.6L76.3 149.7L76.7 141.0L77.1 132.6L77.4 127.2L77.8 127.5L78.2 134.6L78.5 145.0L78.9 155.1L79.2 161.6L79.5 162.2L79.9 159.9L80.2 156.1L80.5 151.5L80.9 146.7L81.2 142.1L81.5 136.3L81.8 129.3L82.1 121.9L82.4 114.3L82.7 107.1L83.0 100.6L83.3 95.3L83.6 91.4L83.9 89.4L84.1 89.3L84.4 90.8L84.7 93.6L85.0 97.2L85.2 101.4L85.5 105.8L85.8 110.2L86.0 114.4L86.3 118.5L86.5 122.8L86.8 127.5L87.0 132.3L87.3 137.3L87.5 142.5L87.8 147.8L88.0 124.0L88.2 124.6L88.5 128.9L88.7 137.7L88.9 149.3L89.1 156.0L89.4 156.6L89.6 154.7L89.8 147.2L90.0 136.9L90.3 114.0L90.5 105.3L90.7 101.3L90.9 105.3L91.1 113.2L91.3 135.4L91.5 151.8L91.7 157.9L91.9 160.2L92.1 159.3L92.3 152.2L92.5 142.1L92.7 132.1L92.9 109.8L93.1 97.6L93.3 107.1L93.5 113.9L93.7 129.8L93.8 143.1L94.0 151.2L94.2 156.4L94.4 157.3L94.6 152.2L94.8 144.7L94.9 134.6L95.1 117.0L95.3 101.9L95.5 105.3L95.6 121.0L95.8 131.8L96.0 148.6L96.1 154.8L96.3 155.3L96.5 154.3L96.6 150.3L96.8 135.5L97.0 119.2L97.1 110.4L97.3 104.0L97.5 88.9L97.6 104.7L97.8 136.3L97.9 159.4L98.1 169.4L98.2 169.9L98.4 163.5L98.5 148.5L98.7 131.3L98.8 122.0L99.0 118.2L99.1 124.1L99.3 140.0L99.4 152.3L99.6 164.6L99.7 167.4L99.9 166.8L100.0 161.4L100.2 151.8L100.3 142.9L100.4 131.9L100.6 130.9L100.7 134.3L100.9 143.1L101.0 120.9L101.1 109.5L101.3 120.8L101.4 142.9L101.5 158.2L101.7 145.5L101.8 123.7L101.9 110.6L102.1 103.7L102.2 108.3L102.3 126.4L102.5 142.6L102.6 153.2L102.7 162.0L102.8 162.3L103.0 156.8L103.1 145.3L103.2 129.0L103.3 120.2L103.5 119.6L103.6 124.3L103.7 138.4L103.8 157.6L104.0 158.6L104.1 134.0L104.2 98.2L104.3 80.1L104.4 98.0L104.6 96.9L104.7 82.8L104.8 79.7L104.9 94.3L105.0 118.4L105.1 143.0L105.3 163.0L105.4 160.9L105.5 144.7L105.6 102.6L105.7 42.8L105.8 12.2L105.9 42.9L106.1 67.4L106.2 83.6L106.3 103.8L106.4 122.4L106.5 141.0L106.6 160.5L106.7 168.6L106.8 167.8L106.9 150.1L107.0 123.1L107.1 103.4L107.2 82.5L107.3 75.4L107.5 84.9L107.6 109.8L107.7 133.5L107.8 153.5L107.9 170.8L108.0 172.4L108.1 167.3L108.2 154.0L108.3 122.4L108.4 74.9L108.5 50.6L108.6 74.9L108.7 107.1L108.8 126.0L108.9 140.0L109.0 152.5L109.1 163.9L109.2 170.7L109.3 171.1L109.4 164.7L109.5 157.1L109.6 146.7L109.7 128.5L109.7 107.2L109.8 99.7L109.9 104.9L110.0 123.0L110.1 143.8L110.2 153.5L110.3 157.7L110.4 157.4L110.5 155.7L110.6 145.8L110.7 117.7L110.8 77.4L110.9 56.4L111.0 78.0L111.0 97.1L111.1 107.2L111.2 133.3L111.3 156.9L111.4 169.8L111.5 171.7L111.6 170.1L111.7 166.6L111.8 162.1L111.8 156.3L111.9 148.4L112.0 144.6L112.1 143.7L112.2 147.0L112.3 152.8L112.4 162.4L112.4 166.7L112.5 170.4L112.6 171.6L112.7 171.4L112.8 169.2L112.9 165.3L112.9 160.7L113.0 153.1L113.1 147.1L113.2 143.8L113.3 142.1L113.4 142.2L113.4 146.0L113.5 152.0L113.6 160.6L113.7 166.8L113.8 168.9L113.8 168.7L113.9 165.5L114.0 157.8L114.1 147.7L114.2 136.5L114.2 129.2L114.3 119.5L114.4 117.8L114.5 119.2L114.6 126.2L114.6 139.8L114.7 152.0L114.8 162.2L114.9 170.8L114.9 173.5L115.0 174.3L115.1 173.6L115.2 169.3L115.2 157.5L115.3 145.8L115.4 130.1L115.5 123.5L115.5 118.6L115.6 115.4L115.7 117.6L115.8 112.4L115.8 55.9L115.9 27.0L116.0 55.8L116.1 111.8L116.1 151.2L116.2 166.3L116.3 169.4L116.3 164.9L116.4 158.6L116.5 143.8L116.6 125.5L116.6 103.8L116.7 89.1L116.8 69.7L116.8 59.5L116.9 63.0L117.0 83.3L117.1 101.9L117.1 126.0L117.2 142.7L117.3 152.0L117.3 158.4L117.4 158.3L117.5 150.6L117.5 130.4L117.6 98.7L117.7 80.9L117.7 66.5L117.8 51.9L117.9 41.5L118.0 42.3L118.0 54.4L118.1 76.1L118.2 107.7L118.2 124.6L118.3 148.8L118.4 148.3L118.4 109.9L118.5 55.2L118.6 27.0L118.6 55.1L118.7 109.9L118.7 130.0L118.8 115.1L118.9 104.3L118.9 92.4L119.0 85.6L119.1 79.9L119.1 82.2L119.2 96.3L119.3 108.4L119.3 123.0L119.4 140.5L119.5 151.9L119.5 160.1L119.6 163.6L119.6 165.2L119.7 165.1L119.8 163.7L119.8 153.8L119.9 142.4L120.0 127.8L120.0 104.7L120.1 80.3L120.1 69.4L120.2 63.6L120.3 66.3L120.3 81.0L120.4 100.9L120.4 115.9L120.5 130.5L120.6 150.0L120.6 161.6L120.7 166.0L120.7 165.1L120.8 160.7L120.9 154.4L120.9 135.9L121.0 115.1L121.0 95.9L121.1 79.2L121.2 71.6L121.2 69.9L121.3 75.4L121.3 86.9L121.4 105.6L121.5 128.6L121.5 146.4L121.6 154.6L121.6 158.8L121.7 159.8L121.7 159.2L121.8 155.4L121.9 151.7L121.9 144.5L122.0 135.4L122.0 124.1L122.1 115.0L122.1 112.2L122.2 111.6L122.3 81.9L122.3 62.2L122.4 82.0L122.4 120.7L122.5 148.2L122.5 156.3L122.6 160.4L122.6 161.8L122.7 162.1L122.8 160.4L122.8 155.6L122.9 148.9L122.9 138.5L123.0 127.7L123.0 112.2L123.1 102.9L123.1 97.1L123.2 95.6L123.2 97.3L123.3 106.8L123.4 115.8L123.4 131.5L123.5 143.9L123.5 155.9L123.6 159.8L123.6 162.7L123.7 162.6L123.7 159.5L123.8 150.5L123.8 135.6L123.9 120.4L123.9 102.0L124.0 90.1L124.0 82.1L124.1 72.6L124.1 70.9L124.2 78.7L124.3 88.3L124.3 108.2L124.4 132.2L124.4 151.5L124.5 164.2L124.5 167.5L124.6 168.9L124.6 169.0L124.7 167.1L124.7 163.3L124.8 156.6L124.8 148.7L124.9 125.6L124.9 107.6L125.0 85.4L125.0 68.7L125.1 55.1L125.1 51.8L125.2 56.9L125.2 69.4L125.3 80.6L125.3 96.5L125.4 112.1L125.4 128.5L125.5 143.0L125.5 156.3L125.6 162.9L125.6 165.8L125.7 166.3L125.7 165.7L125.8 163.8L125.8 160.1L125.9 146.8L125.9 130.1L125.9 109.2L126.0 85.9L126.0 75.1L126.1 64.1L126.1 63.0L126.2 67.8L126.2 80.9L126.3 101.5L126.3 116.5L126.4 134.7L126.4 145.4L126.5 157.3L126.5 170.3L126.6 174.9L126.6 175.1L126.7 172.7L126.7 165.6L126.8 158.4L126.8 143.6L126.8 132.4L126.9 124.3L126.9 114.6L127.0 107.8L127.0 105.5L127.1 108.7L127.1 112.6L127.2 122.5L127.2 137.3L127.3 150.1L127.3 162.9L127.4 169.2L127.4 173.1L127.4 173.8L127.5 173.3L127.5 171.9L127.6 168.2L127.6 164.5L127.7 158.7L127.7 151.2L127.8 144.8L127.8 140.1L127.8 137.0L127.9 136.7L127.9 137.4L128.0 140.1L128.0 145.8L128.1 151.6L128.1 155.8L128.2 159.0L128.2 162.6L128.2 165.2L128.3 166.5L128.3 166.8L128.4 166.5L128.4 164.7L128.5 162.1L128.5 158.9L128.5 153.6L128.6 143.3L128.6 137.3L128.7 130.7L128.7 121.4L128.8 117.2L128.8 114.7L128.8 115.0L128.9 119.3L128.9 108.4L129.0 56.0L129.0 29.2L129.1 55.9L129.1 107.8L129.1 144.3L129.2 158.3L129.2 161.6L129.3 160.4L129.3 157.8L129.4 149.3L129.4 140.6L129.4 131.2L129.5 119.3L129.5 112.1L129.6 105.6L129.6 98.3L129.6 91.6L129.7 89.3L129.7 93.8L129.8 104.1L129.8 119.3L129.8 133.1L129.9 146.9L129.9 157.0L130.0 161.9L130.0 165.4L130.1 168.9L130.1 169.7L130.1 169.8L130.2 168.8L130.2 167.5L130.3 164.0L130.3 159.5L130.3 155.9L130.4 151.1L130.4 146.0L130.5 141.1L130.5 135.8L130.5 133.7L130.6 132.4L130.6 133.3L130.7 137.6L130.7 141.0L130.7 144.9L130.8 149.6L130.8 154.7L130.9 159.3L130.9 163.2L130.9 167.1L131.0 170.4L131.0 173.3L131.0 175.1L131.1 175.6L131.1 175.2L131.2 174.1L131.2 171.4L131.2 167.3L131.3 159.3L131.3 145.2L131.4 130.4L131.4 120.7L131.4 113.2L131.5 106.2L131.5 88.8L131.5 68.3L131.6 88.6L131.6 91.2L131.7 94.7L131.7 103.5L131.7 114.3L131.8 126.0L131.8 141.0L131.8 147.9L131.9 154.4L131.9 160.9L132.0 164.5L132.0 165.4L132.1 164.3L132.1 161.4L132.1 157.0L132.2 153.6L132.2 147.9L132.3 143.3L132.3 138.8L132.3 135.7L132.4 133.6L132.4 131.0L132.4 131.4L132.5 134.3L132.5 137.7L132.6 142.6L132.6 146.9L132.6 153.4L132.7 160.5L132.7 165.9L132.7 169.7L132.8 171.0L132.8 171.6L132.8 171.5L132.9 170.5L132.9 168.8L133.0 164.8L133.0 158.9L133.0 152.7L133.1 145.9L133.1 136.8L133.1 129.8L133.2 124.5L133.2 121.8L133.2 120.0L133.3 120.7L133.3 126.1L133.3 131.6L133.4 141.3L133.4 151.5L133.4 157.2L133.5 162.4L133.5 167.9L133.6 170.4L133.6 172.0L133.7 170.8L133.7 167.7L133.7 164.4L133.8 157.0L133.8 151.0L133.8 146.0L133.9 141.2L133.9 134.4L133.9 127.9L134.0 124.4L134.0 121.8L134.0 122.2L134.1 125.6L134.1 128.5L134.1 133.0L134.2 137.6L134.2 143.9L134.2 149.6L134.3 154.8L134.3 160.4L134.3 163.1L134.4 164.2L134.4 164.1L134.4 163.6L134.5 160.8L134.5 153.6L134.5 140.6L134.6 127.1L134.6 114.3L134.6 103.6L134.7 88.5L134.7 79.4L134.7 76.5L134.8 78.3L134.8 84.0L134.8 97.2L134.9 107.4L134.9 124.9L134.9 138.9L135.0 148.2L135.0 157.2L135.0 162.3L135.1 167.7L135.1 169.8L135.1 169.9L135.2 169.4L135.2 167.1L135.2 164.6L135.3 159.7L135.3 152.0L135.3 144.6L135.4 139.6L135.4 131.0L135.4 125.3L135.5 122.5L135.5 122.1L135.5 123.9L135.6 127.3L135.6 130.8L135.6 135.0L135.7 139.1L135.7 143.9L135.7 149.1L135.8 155.4L135.8 153.8L135.8 130.1L135.9 96.9L135.9 80.0L135.9 96.8L135.9 129.8L136.0 153.2L136.0 159.1L136.0 155.7L136.1 151.1L136.1 143.9L136.1 132.9L136.2 125.2L136.2 115.1L136.2 109.8L136.3 105.8L136.3 103.6L136.3 103.7L136.4 106.3L136.4 112.1L136.4 122.0L136.5 127.8L136.5 139.2L136.5 148.2L136.5 155.6L136.6 159.0L136.6 163.3L136.6 164.4L136.7 164.7L136.7 164.4L136.7 160.6L136.8 153.8L136.8 140.4L136.8 131.2L136.9 117.1L136.9 104.5L136.9 94.4L136.9 87.1L137.0 84.6L137.0 86.1L137.0 92.7L137.1 98.8L137.1 110.2L137.1 123.0L137.2 133.7L137.2 147.6L137.2 160.3L137.2 166.5L137.3 171.9L137.3 174.7L137.3 176.9L137.4 177.2L137.4 176.5L137.4 174.2L137.5 169.8L137.5 165.7L137.5 153.9L137.5 145.7L137.6 133.7L137.6 125.4L137.6 115.1L137.7 108.7L137.7 104.7L137.7 103.2L137.7 105.4L137.8 111.2L137.8 120.6L137.8 128.6L137.9 135.4L137.9 143.5L137.9 151.4L138.0 159.6L138.0 164.6L138.0 167.4L138.0 168.5L138.1 168.7L138.1 167.7L138.2 164.1L138.2 158.1L138.2 152.8L138.2 145.1L138.3 132.2L138.3 125.9L138.3 116.3L138.4 110.3L138.4 106.4L138.4 106.1L138.4 107.6L138.5 112.7L138.5 117.0L138.5 128.3L138.6 140.5L138.6 149.1L138.6 157.8L138.6 164.4L138.7 169.8L138.7 170.9L138.7 171.5L138.8 171.6L138.8 169.8L138.8 164.7L138.8 158.2L138.9 152.9L138.9 141.6L138.9 131.3L138.9 123.8L139.0 112.8L139.0 105.5L139.0 101.4L139.1 99.8L139.1 101.2L139.1 105.1L139.1 111.9L139.2 125.7L139.2 137.0L139.2 146.3L139.3 157.1L139.3 168.2L139.3 174.6L139.3 177.0L139.4 177.2L139.4 175.7L139.4 172.6L139.4 168.5L139.5 164.7L139.5 157.2L139.5 149.8L139.6 141.2L139.6 136.9L139.6 132.8L139.6 131.9L139.7 133.5L139.7 138.7L139.7 142.0L139.7 146.9L139.8 155.3L139.8 162.6L139.8 167.0L139.9 168.9L139.9 169.9L139.9 170.6L140.0 170.2L140.0 169.1L140.0 166.4L140.0 161.9L140.1 158.5L140.1 152.9L140.1 149.6L140.1 146.6L140.2 144.9L140.2 143.6L140.2 142.9L140.3 143.3L140.3 145.1L140.3 147.2L140.3 151.9L140.4 155.0L140.4 158.5L140.4 162.2L140.4 166.5L140.5 170.4L140.5 172.7L140.5 173.7L140.6 173.2L140.6 172.0L140.6 170.4L140.6 166.5L140.7 162.8L140.7 158.0L140.7 155.1L140.7 151.4L140.8 149.0L140.8 146.5L140.8 144.7L140.9 144.6L140.9 146.1L140.9 147.8L140.9 150.8L141.0 154.4L141.0 158.6L141.0 161.8L141.0 166.0L141.1 169.4L141.1 171.2L141.1 171.6L141.1 171.7L141.2 171.8L141.2 171.5L141.2 171.0L141.2 169.4L141.3 167.4L141.3 163.9L141.3 162.2L141.3 159.6L141.4 157.2L141.4 155.0L141.4 154.2L141.4 154.5L141.5 155.5L141.5 157.9L141.5 160.6L141.5 163.1L141.6 167.6L141.6 171.4L141.6 173.6L141.6 175.5L141.7 176.8L141.7 177.1L141.7 177.0L141.7 176.2L141.8 174.5L141.8 172.0L141.8 168.9L141.8 165.9L141.9 163.0L141.9 161.2L141.9 159.3L141.9 158.3L142.0 158.4L142.0 159.7L142.0 161.6L142.0 164.7L142.1 168.1L142.1 170.0L142.1 173.0L142.1 174.7L142.2 175.7L142.2 176.4L142.2 176.9L142.2 177.1L142.3 176.8L142.3 175.6L142.3 171.2L142.3 165.7L142.4 154.6L142.4 146.4L142.4 134.0L142.4 124.7L142.4 113.6L142.5 107.3L142.5 105.0L142.5 105.9L142.5 111.1L142.6 117.5L142.6 128.6L142.6 141.6L142.6 148.6L142.7 154.2L142.7 142.0L142.7 112.7L142.7 97.8L142.8 112.6L142.8 141.6L142.8 162.1L142.8 167.0L142.9 160.7L142.9 152.2L142.9 139.5L142.9 131.1L142.9 121.1L143.0 109.3L143.0 104.6L143.0 102.1L143.0 103.1L143.1 110.1L143.1 116.2L143.1 127.5L143.1 137.6L143.2 147.3L143.2 155.1L143.2 162.9L143.2 168.9L143.3 172.0L143.3 173.3L143.3 173.4L143.3 172.0L143.3 168.3L143.4 163.2L143.4 152.4L143.4 145.5L143.4 139.3L143.5 126.6L143.5 119.9L143.5 115.1L143.5 111.1L143.6 109.6L143.6 110.7L143.6 116.6L143.6 122.8L143.6 129.2L143.7 136.8L143.7 150.6L143.7 159.3L143.7 166.2L143.8 173.0L143.8 176.6L143.8 177.3L143.8 176.9L143.9 176.0L143.9 174.5L143.9 171.7L143.9 169.0L143.9 165.8L144.0 162.7L144.0 159.3L144.0 154.4L144.0 150.9L144.1 149.6L144.1 148.9L144.1 149.6L144.1 152.2L144.1 155.5L144.2 159.8L144.2 162.9L144.2 167.1L144.2 170.5L144.3 172.2L144.3 173.0L144.3 173.3L144.3 173.1L144.4 172.9L144.4 172.1L144.4 170.2L144.4 169.0L144.5 167.6L144.5 166.1L144.5 164.0L144.5 162.1L144.5 159.8L144.6 159.1L144.6 158.6L144.6 158.7L144.6 159.2L144.7 160.2L144.7 161.8L144.7 163.0L144.7 164.8L144.7 167.2L144.8 169.4L144.8 171.2L144.8 172.4L144.8 173.0L144.9 173.1L144.9 172.1L144.9 170.2L144.9 166.4L145.0 161.9L145.0 152.4L145.0 145.5L145.0 139.3L145.0 129.4L145.1 121.9L145.1 117.6L145.1 120.3L145.2 125.6L145.2 133.1L145.2 142.2L145.2 153.7L145.2 160.0L145.3 167.4L145.3 170.1L145.3 172.5L145.3 174.2L145.3 174.3L145.4 173.8L145.4 171.2L145.4 166.9L145.4 161.7L145.5 154.3L145.5 144.9L145.5 136.8L145.5 133.3L145.5 131.0L145.6 129.6L145.6 132.2L145.6 137.8L145.6 142.0L145.7 146.2L145.7 152.0L145.7 159.4L145.7 165.9L145.8 169.7L145.8 172.3L145.8 173.2L145.8 172.7L145.9 170.2L145.9 165.2L145.9 157.6L145.9 151.2L145.9 146.2L146.0 139.7L146.0 134.7L146.0 130.8L146.0 128.4L146.0 129.4L146.1 133.3L146.1 139.6L146.1 144.4L146.1 149.1L146.1 155.9L146.2 164.6L146.2 170.8L146.2 175.3L146.2 177.3L146.2 177.9L146.3 176.8L146.3 174.4L146.3 169.9L146.3 163.1L146.4 156.5L146.4 149.6L146.4 146.5L146.4 143.9L146.4 140.3L146.5 139.6L146.5 140.1L146.5 141.5L146.5 145.1L146.5 147.7L146.6 153.7L146.6 157.9L146.6 163.5L146.6 168.3L146.6 170.8L146.7 171.7L146.7 171.8L146.7 170.3L146.7 168.0L146.8 165.7L146.8 158.9L146.8 151.8L146.8 147.4L146.8 140.6L146.9 134.5L146.9 131.0L146.9 128.4L146.9 128.7L146.9 130.2L147.0 133.5L147.0 138.2L147.0 147.1L147.0 155.4L147.0 160.3L147.1 166.2L147.1 169.9L147.1 174.6L147.1 177.2L147.1 177.7L147.2 177.8L147.2 177.2L147.2 175.4L147.2 170.6L147.2 161.7L147.3 155.1L147.3 146.2L147.3 138.9L147.3 133.8L147.3 126.6L147.4 123.3L147.4 120.8L147.4 122.3L147.4 125.0L147.4 131.5L147.5 137.3L147.5 147.7L147.5 154.9L147.5 164.0L147.5 171.0L147.5 175.4L147.6 177.3L147.6 178.4L147.6 178.2L147.6 177.0L147.6 174.6L147.7 171.0L147.7 165.1L147.7 159.9L147.7 152.4L147.7 146.8L147.8 141.1L147.8 137.6L147.8 136.9L147.8 138.5L147.8 141.5L147.9 148.3L147.9 154.2L147.9 159.7L147.9 165.8L147.9 169.3L148.0 173.4L148.0 166.0L148.0 147.0L148.0 120.3L148.0 106.7L148.0 120.3L148.1 146.8L148.1 158.4L148.1 154.7L148.1 148.5L148.1 142.9L148.2 140.2L148.2 139.2L148.2 139.3L148.2 140.6L148.2 142.3L148.3 147.8L148.3 154.3L148.3 160.1L148.3 165.7L148.3 169.8L148.4 172.1L148.4 173.1L148.4 173.6L148.4 173.2L148.4 172.1L148.5 170.5L148.5 167.8L148.5 164.8L148.5 158.2L148.5 154.1L148.6 149.4L148.6 144.6L148.6 141.8L148.6 139.5L148.6 138.9L148.6 139.4L148.7 142.9L148.7 147.1L148.7 150.6L148.7 157.9L148.7 161.7L148.8 166.9L148.8 170.2L148.8 172.1L148.8 173.3L148.8 173.7L148.9 173.7L148.9 173.3L148.9 172.6L148.9 171.1L148.9 169.8L149.0 168.7L149.0 166.2L149.0 165.0L149.0 163.3L149.0 162.1L149.1 161.6L149.1 161.8L149.1 163.2L149.1 164.3L149.1 165.7L149.1 168.0L149.2 169.6L149.2 171.8L149.2 173.8L149.2 174.7L149.2 175.9L149.3 176.3L149.3 176.4L149.3 176.2L149.3 175.6L149.3 173.7L149.3 171.4L149.4 168.1L149.4 162.1L149.4 158.0L149.4 155.0L149.4 151.9L149.5 148.2L149.5 145.6L149.5 145.2L149.5 146.6L149.5 148.8L149.5 151.3L149.6 154.6L149.6 158.2L149.6 164.5L149.6 168.6L149.6 171.2L149.7 174.4L149.7 176.0L149.7 176.6L149.7 176.9L149.7 176.2L149.7 175.0L149.8 171.7L149.8 168.1L149.8 162.9L149.8 157.4L149.8 151.9L149.8 148.2L149.9 146.2L149.9 144.3L149.9 144.6L149.9 146.2L149.9 150.1L150.0 155.0L150.0 161.6L150.0 165.7L150.0 169.9L150.0 171.9L150.0 173.4L150.1 174.6L150.1 175.2L150.1 175.3L150.1 174.5L150.1 173.1L150.2 171.1L150.2 167.1L150.2 162.8L150.2 158.5L150.2 154.8L150.2 152.8L150.3 152.4L150.3 153.6L150.3 154.9L150.3 158.7L150.3 162.2L150.4 165.5L150.4 169.3L150.4 172.4L150.4 175.8L150.4 177.8L150.4 178.6L150.5 178.7L150.5 178.1L150.5 177.0L150.5 173.4L150.5 170.5L150.5 165.1L150.6 160.2L150.6 150.7L150.6 140.9L150.6 135.8L150.6 130.2L150.6 128.7L150.7 129.0L150.7 131.1L150.7 135.4L150.7 142.0L150.7 148.3L150.7 153.8L150.8 161.2L150.8 168.3L150.8 173.5L150.8 175.1L150.8 175.7L150.9 175.7L150.9 175.3L150.9 173.8L150.9 169.6L150.9 165.9L150.9 158.4L151.0 151.9L151.0 145.6L151.0 137.8L151.0 131.3L151.0 126.4L151.1 124.1L151.1 123.0L151.1 126.0L151.1 128.9L151.1 132.9L151.1 140.8L151.2 147.9L151.2 154.7L151.2 165.4L151.2 170.7L151.2 176.4L151.2 178.6L151.3 179.1L151.3 179.2L151.3 179.1L151.3 178.1L151.3 175.2L151.3 173.1L151.4 170.7L151.4 168.0L151.4 164.1L151.4 160.5L151.4 154.1L151.4 149.8L151.5 147.2L151.5 149.6L151.5 153.6L151.5 157.3L151.5 162.8L151.5 166.8L151.6 171.1L151.6 175.5L151.6 177.3L151.6 178.5L151.6 179.3L151.6 179.2L151.7 178.6L151.7 177.1L151.7 174.4L151.7 167.7L151.7 161.2L151.7 151.1L151.8 143.7L151.8 135.0L151.8 129.5L151.8 128.1L151.8 130.0L151.8 133.3L151.9 137.0L151.9 144.2L151.9 148.9L151.9 156.1L151.9 163.7L151.9 170.3L152.0 174.8L152.0 176.1L152.0 176.6L152.0 176.5L152.0 175.4L152.0 173.2L152.1 168.7L152.1 164.7L152.1 161.5L152.1 154.6L152.1 148.7L152.1 143.8L152.2 141.8L152.2 140.5L152.2 140.6L152.2 143.1L152.2 147.5L152.2 152.9L152.2 159.1L152.3 163.0L152.3 167.8L152.3 171.3L152.3 174.8L152.3 168.6L152.3 151.7L152.4 127.8L152.4 115.6L152.4 127.9L152.4 151.8L152.4 167.8L152.4 164.5L152.5 161.9L152.5 158.2L152.5 154.4L152.5 152.2L152.5 151.8L152.5 152.0L152.5 153.7L152.6 157.6L152.6 160.0L152.6 162.6L152.6 167.1L152.6 171.0L152.6 174.5L152.7 176.0L152.7 177.3L152.7 177.8L152.7 177.6L152.7 177.4L152.8 176.4L152.8 175.2L152.8 173.8L152.8 171.9L152.8 169.6L152.8 167.8L152.8 166.9L152.9 166.3L152.9 166.4L152.9 167.3L152.9 169.0L152.9 170.9L152.9 173.2L153.0 174.9L153.0 176.4L153.0 177.3L153.0 178.1L153.0 178.4L153.0 178.5L153.0 178.4L153.1 177.9L153.1 176.4L153.1 174.0L153.1 170.8L153.1 167.9L153.1 163.6L153.2 159.5L153.2 156.2L153.2 154.2L153.2 153.3L153.2 153.0L153.2 153.5L153.2 156.0L153.3 158.5L153.3 161.3L153.3 164.7L153.3 167.2L153.3 171.2L153.3 174.3L153.4 175.8L153.4 176.1L153.4 176.0L153.4 175.1L153.4 172.7L153.4 169.8L153.4 164.7L153.5 155.5L153.5 146.9L153.5 139.2L153.5 132.8L153.5 127.9L153.5 125.9L153.6 126.6L153.6 129.8L153.6 133.2L153.6 139.3L153.6 147.8L153.6 153.9L153.6 160.0L153.7 167.9L153.7 171.4L153.7 174.1L153.7 176.6L153.7 177.0L153.7 177.1L153.7 176.1L153.8 173.9L153.8 168.7L153.8 161.5L153.8 157.3L153.8 151.7L153.8 142.3L153.9 137.2L153.9 132.9L153.9 129.9L153.9 130.0L153.9 133.6L153.9 139.4L153.9 146.8L154.0 151.2L154.0 159.2L154.0 167.5L154.0 172.2L154.0 174.8L154.0 176.8L154.0 177.9L154.1 178.6L154.1 178.5L154.1 177.8L154.1 175.7L154.1 172.2L154.1 167.1L154.1 160.1L154.2 152.0L154.2 145.9L154.2 136.8L154.2 131.0L154.2 127.7L154.2 126.4L154.3 129.1L154.3 132.6L154.3 141.5L154.3 149.9L154.3 156.9L154.3 162.8L154.3 167.3L154.4 171.8L154.4 175.3L154.4 177.8L154.4 179.1L154.4 179.0L154.4 178.4L154.4 176.7L154.5 173.6L154.5 170.7L154.5 165.3L154.5 158.9L154.5 150.1L154.5 144.3L154.5 138.8L154.6 135.6L154.6 135.0L154.6 136.2L154.6 139.2L154.6 142.6L154.6 146.0L154.6 154.8L154.7 159.1L154.7 166.8L154.7 171.1L154.7 173.5L154.7 176.6L154.7 177.3L154.7 177.2L154.8 176.4L154.8 174.1L154.8 171.1L154.8 166.1L154.8 160.0L154.8 156.1L154.8 150.3L154.9 145.1L154.9 142.7L154.9 145.6L154.9 150.5L154.9 155.3L154.9 160.7L155.0 166.7L155.0 171.1L155.0 173.2L155.0 174.7L155.0 175.9L155.0 176.5L155.1 176.4L155.1 175.9L155.1 175.4L155.1 174.5L155.1 173.5L155.1 172.6L155.1 170.8L155.2 169.5L155.2 168.3L155.2 167.4L155.2 166.9L155.2 166.6L155.2 166.7L155.2 167.3L155.3 168.5L155.3 169.8L155.3 171.3L155.3 172.7L155.3 174.3L155.3 175.3L155.3 176.3L155.4 176.7L155.4 177.0L155.4 177.2L155.4 177.3L155.4 177.0L155.4 176.3L155.4 175.2L155.5 173.7L155.5 171.9L155.5 170.1L155.5 168.4L155.5 167.6L155.5 167.3L155.5 167.6L155.6 168.2L155.6 169.0L155.6 170.9L155.6 171.9L155.6 174.2L155.6 176.3L155.6 177.2L155.6 178.4L155.7 178.8L155.7 179.1L155.7 177.8L155.7 174.6L155.7 170.7L155.7 163.1L155.8 156.5L155.8 148.2L155.8 142.4L155.8 140.2L155.8 138.1L155.8 139.2L155.8 143.5L155.9 149.2L155.9 153.0L155.9 161.1L155.9 166.7L155.9 170.6L155.9 174.0L155.9 176.5L156.0 178.9L156.0 179.4L156.0 179.3L156.0 178.2L156.0 173.2L156.0 160.4L156.0 142.5L156.0 133.4L156.1 142.5L156.1 160.3L156.1 169.5L156.1 167.8L156.1 166.8L156.1 166.4L156.1 166.3L156.2 167.1L156.2 167.9L156.2 168.8L156.2 171.1L156.2 173.5L156.2 175.4L156.2 176.6L156.3 177.8L156.3 178.1L156.3 178.2L156.3 178.1L156.3 177.7L156.3 176.5L156.3 175.7L156.4 173.8L156.4 172.1L156.4 170.2L156.4 168.9L156.4 168.1L156.4 167.6L156.4 167.5L156.5 167.9L156.5 168.9L156.5 170.7L156.5 172.0L156.5 173.7L156.5 175.5L156.5 177.4L156.5 178.7L156.6 179.4L156.6 179.7L156.6 179.6L156.6 178.7L156.6 175.8L156.6 171.9L156.6 168.6L156.7 163.6L156.7 158.9L156.7 154.7L156.7 150.3L156.7 145.0L156.7 142.8L156.7 141.9L156.7 142.6L156.8 144.3L156.8 148.1L156.8 152.5L156.8 159.8L156.8 165.7L156.8 171.8L156.8 175.7L156.9 177.3L156.9 177.8L156.9 177.9L156.9 177.6L156.9 177.1L156.9 175.6L156.9 173.9L157.0 171.6L157.0 168.3L157.0 166.1L157.0 164.2L157.0 162.5L157.0 160.6L157.0 160.3L157.0 160.8L157.1 161.7L157.1 163.0L157.1 165.0L157.1 167.9L157.1 170.7L157.1 174.1L157.1 177.2L157.2 178.7L157.2 179.4L157.2 179.8L157.2 179.6L157.2 178.9L157.2 177.9L157.2 177.1L157.3 175.8L157.3 174.2L157.3 173.1L157.3 171.9L157.3 171.5L157.3 171.2L157.3 171.4L157.3 172.2L157.4 173.1L157.4 174.0L157.4 175.4L157.4 176.3L157.4 177.3L157.4 178.2L157.4 178.9L157.4 179.2L157.5 179.3L157.5 179.0L157.5 178.1L157.5 176.9L157.5 175.4L157.5 174.4L157.6 173.1L157.6 171.8L157.6 170.6L157.6 169.4L157.6 168.8L157.6 168.4L157.6 168.8L157.6 169.3L157.7 170.2L157.7 171.7L157.7 172.7L157.7 174.0L157.7 175.8L157.7 177.1L157.7 178.7L157.7 179.4L157.8 179.8L157.8 179.9L157.8 179.8L157.8 179.4L157.8 178.5L157.8 176.9L157.8 175.7L157.8 174.6L157.9 172.8L157.9 171.8L157.9 170.9L157.9 170.0L157.9 169.4L157.9 170.0L157.9 171.0L158.0 172.2L158.0 173.8L158.0 175.5L158.0 176.6L158.0 178.0L158.0 178.8L158.0 179.7L158.0 180.0L158.1 180.0L158.1 179.8L158.1 179.3L158.1 178.2L158.1 176.3L158.1 173.8L158.1 171.6L158.2 169.0L158.2 167.0L158.2 165.7L158.2 164.9L158.2 164.6L158.2 165.1L158.2 165.9L158.2 167.7L158.3 169.0L158.3 170.6L158.3 173.2L158.3 175.8L158.3 177.8L158.3 179.0L158.3 179.5L158.3 179.7L158.4 179.6L158.4 179.4L158.4 178.8L158.4 178.3L158.4 177.2L158.4 176.6L158.4 175.7L158.4 175.1L158.5 174.7L158.5 174.2L158.5 174.1L158.5 174.2L158.5 174.6L158.5 175.1L158.5 175.6L158.5 176.5L158.6 177.4L158.6 178.3L158.6 178.9L158.6 179.4L158.6 179.6L158.6 179.7L158.6 179.6L158.6 179.3L158.6 178.3L158.7 177.5L158.7 175.6L158.7 174.1L158.7 171.9L158.7 169.6L158.7 168.6L158.7 167.6L158.7 166.9L158.8 167.1L158.8 167.6L158.8 168.4L158.8 169.4L158.8 170.5L158.8 172.1L158.8 174.3L158.8 175.9L158.9 176.8L158.9 177.8L158.9 178.6L158.9 178.9L158.9 179.0L158.9 178.9L158.9 178.6L158.9 178.1L159.0 177.6L159.0 176.4L159.0 175.0L159.0 173.6L159.0 172.6L159.0 171.7L159.0 171.5L159.0 171.4L159.0 171.9L159.1 172.8L159.1 173.5L159.1 175.1L159.1 175.9L159.1 176.7L159.1 177.8L159.1 178.6L159.1 179.0L159.2 179.3L159.2 179.4L159.2 179.0L159.2 177.2L159.2 172.6L159.2 166.2L159.2 162.9L159.2 166.1L159.3 172.5L159.3 176.7L159.3 176.1L159.3 175.5L159.3 175.3L159.3 175.4L159.3 175.5L159.3 175.7L159.3 176.2L159.4 176.6L159.4 177.3L159.4 177.7L159.4 178.1L159.4 178.5L159.4 178.8L159.4 178.9L159.5 178.9L159.5 178.7L159.5 178.4L159.5 177.7L159.5 176.7L159.5 175.6L159.5 174.8L159.5 174.1L159.6 172.9L159.6 172.0L159.6 171.6L159.6 171.3L159.6 171.2L159.6 171.5L159.6 172.3L159.6 173.1L159.7 174.0L159.7 175.7L159.7 176.6L159.7 177.6L159.7 178.5L159.7 179.2L159.7 179.5L159.7 179.7L159.8 179.4L159.8 179.2L159.8 178.6L159.8 178.0L159.8 177.3L159.8 175.7L159.8 174.2L159.8 172.5L159.9 170.9L159.9 170.3L159.9 169.9L159.9 170.3L159.9 171.0L159.9 171.7L159.9 173.0L159.9 174.5L159.9 176.1L160.0 177.5L160.0 178.3L160.0 178.9L160.0 179.3L160.0 179.5L160.0 179.3L160.0 178.9L160.1 178.6L160.1 177.8L160.1 177.0L160.1 176.1L160.1 175.4L160.1 174.8L160.1 174.1L160.1 173.8L160.2 173.8L160.2 174.0L160.2 174.5L160.2 175.2L160.2 176.0L160.2 177.0L160.2 177.6L160.2 178.3L160.2 178.7L160.3 179.1L160.3 179.3L160.3 179.4L160.3 179.3L160.3 179.2L160.3 179.0L160.3 178.4L160.3 177.6L160.4 176.9L160.4 176.3L160.4 175.7L160.4 174.8L160.4 174.2L160.4 174.0L160.4 173.9L160.4 174.0L160.4 174.5L160.5 175.3L160.5 175.8L160.5 177.0L160.5 177.7L160.5 178.4L160.5 178.8L160.5 179.4L160.5 179.6L160.6 179.6L160.6 179.4L160.6 179.0L160.6 178.5L160.6 178.0L160.6 177.0L160.6 176.5L160.6 175.5L160.7 174.7L160.7 174.3L160.7 174.6L160.7 175.2L160.7 175.8L160.7 176.9L160.7 177.6L160.8 178.3L160.8 179.0L160.8 179.5L160.8 179.7L160.8 179.8L160.8 179.6L160.8 178.9L160.8 177.5L160.9 176.0L160.9 173.9L160.9 172.0L160.9 170.4L160.9 169.0L160.9 168.6L160.9 168.4L160.9 168.6L160.9 169.3L161.0 170.9L161.0 172.9L161.0 174.9L161.0 176.8L161.0 177.9L161.0 178.9L161.0 179.3L161.1 179.1L161.1 178.8L161.1 177.7L161.1 176.7L161.1 174.9L161.1 173.4L161.1 172.5L161.1 171.4L161.1 170.3L161.2 170.0L161.2 170.2L161.2 170.9L161.2 172.4L161.2 173.3L161.2 175.1L161.2 176.5L161.2 177.5L161.2 178.6L161.3 179.2L161.3 179.3L161.3 179.2L161.3 178.9L161.3 178.3L161.3 177.8L161.3 177.3L161.3 176.7L161.4 176.3L161.4 175.6L161.4 175.3L161.4 175.1L161.4 175.2L161.4 175.5L161.4 176.1L161.4 176.6L161.4 177.1L161.5 177.6L161.5 178.2L161.5 178.8L161.5 179.0L161.5 179.2L161.5 179.3L161.5 179.2L161.5 178.9L161.6 178.3L161.6 177.4L161.6 176.8L161.6 175.5L161.6 174.4L161.6 173.7L161.6 172.7L161.6 172.4L161.6 172.5L161.7 172.9L161.7 173.6L161.7 174.3L161.7 175.2L161.7 176.2L161.7 177.0L161.7 178.2L161.7 179.0L161.7 179.5L161.7 179.9L161.8 180.0L161.8 180.1L161.8 180.0L161.8 179.6L161.8 179.0L161.8 178.0L161.8 176.5L161.8 174.9L161.8 173.8L161.9 172.7L161.9 172.2L161.9 172.4L161.9 172.7L161.9 173.6L161.9 174.7L161.9 176.0L161.9 176.9L161.9 178.3L162.0 179.0L162.0 179.6L162.0 179.8L162.0 179.6L162.0 178.7L162.0 176.5L162.0 173.3L162.0 171.7L162.0 173.3L162.1 175.7L162.1 174.7L162.1 174.3L162.1 173.9L162.1 174.0L162.1 174.2L162.1 174.9L162.1 175.9L162.1 176.8L162.2 178.0L162.2 178.8L162.2 179.3L162.2 179.7L162.2 179.8L162.2 179.6L162.2 179.2L162.2 178.4L162.2 177.4L162.3 176.7L162.3 176.1L162.3 175.5L162.3 174.8L162.3 174.0L162.3 173.7L162.3 173.8L162.3 174.2L162.3 174.6L162.4 175.3L162.4 176.4L162.4 177.6L162.4 178.3L162.4 178.8L162.4 179.3L162.4 179.4L162.4 179.5L162.5 179.4L162.5 179.2L162.5 179.0L162.5 178.7L162.5 178.6L162.5 178.4L162.5 178.2L162.5 178.0L162.5 177.9L162.6 178.0L162.6 178.1L162.6 178.4L162.6 178.6L162.6 179.0L162.6 179.4L162.6 179.7L162.6 179.9L162.6 180.0L162.7 180.1L162.7 179.9L162.7 179.7L162.7 179.2L162.7 178.7L162.7 177.7L162.7 176.3L162.7 175.2L162.7 174.5L162.8 174.0L162.8 173.4L162.8 173.1L162.8 173.4L162.8 174.1L162.8 174.9L162.8 176.3L162.8 177.4L162.8 178.4L162.8 178.9L162.9 179.5L162.9 179.8L162.9 180.0L162.9 180.1L162.9 180.0L162.9 179.8L162.9 179.7L162.9 179.3L163.0 179.0L163.0 178.8L163.0 178.6L163.0 178.4L163.0 178.2L163.0 178.1L163.0 178.2L163.0 178.3L163.1 178.6L163.1 178.8L163.1 179.1L163.1 179.4L163.1 179.5L163.1 179.6L163.1 179.7L163.1 179.6L163.2 179.4L163.2 178.9L163.2 177.8L163.2 176.7L163.2 175.7L163.2 174.1L163.2 173.1L163.2 172.1L163.2 171.9L163.3 172.1L163.3 172.6L163.3 173.4L163.3 174.7L163.3 175.8L163.3 176.7L163.3 178.0L163.3 178.8L163.3 179.3L163.3 179.6L163.4 179.6L163.4 179.5L163.4 179.4L163.4 179.3L163.4 179.1L163.4 178.7L163.4 178.3L163.4 178.0L163.4 177.6L163.4 177.4L163.5 177.2L163.5 177.0L163.5 177.2L163.5 177.4L163.5 177.8L163.5 178.2L163.5 178.5L163.5 179.0L163.5 179.3L163.5 179.5L163.6 179.6L163.6 179.5L163.6 179.2L163.6 178.7L163.6 178.4L163.6 178.0L163.6 177.8L163.7 177.4L163.7 177.2L163.7 177.3L163.7 177.5L163.7 177.9L163.7 178.4L163.7 179.0L163.7 179.4L163.7 179.6L163.8 180.0L163.8 180.1L163.8 180.3L163.8 180.1L163.8 179.9L163.8 179.5L163.8 179.1L163.8 178.3L163.9 177.9L163.9 177.3L163.9 176.6L163.9 176.1L163.9 175.9L163.9 175.7L163.9 175.8L163.9 176.1L163.9 176.8L163.9 177.4L164.0 178.2L164.0 178.8L164.0 179.3L164.0 179.7L164.0 179.9L164.0 180.0L164.0 179.8L164.0 179.5L164.1 179.2L164.1 178.6L164.1 177.9L164.1 177.3L164.1 177.0L164.1 176.5L164.1 176.2L164.1 176.3L164.1 176.7L164.2 177.2L164.2 177.9L164.2 178.4L164.2 178.7L164.2 179.2L164.2 179.6L164.2 180.0L164.2 180.1L164.2 180.0L164.3 179.9L164.3 179.8L164.3 179.6L164.3 179.2L164.3 178.8L164.3 178.5L164.3 178.1L164.3 178.0L164.3 177.9L164.4 178.0L164.4 178.2L164.4 178.4L164.4 178.7L164.4 178.9L164.4 179.2L164.4 179.4L164.4 179.5L164.4 179.7L164.4 179.8L164.5 179.8L164.5 179.7L164.5 179.6L164.5 179.2L164.5 178.9L164.5 178.6L164.5 178.4L164.5 178.0L164.6 177.8L164.6 177.6L164.6 177.7L164.6 177.9L164.6 178.1L164.6 178.6L164.6 178.9L164.6 179.1L164.6 179.5L164.6 179.8L164.7 179.9L164.7 180.0L164.7 180.1L164.7 180.0L164.7 179.8L164.7 179.1L164.7 178.7L164.7 177.9L164.7 177.0L164.8 175.5L164.8 174.5L164.8 173.9L164.8 172.9L164.8 172.4L164.8 172.3L164.8 172.6L164.8 173.4L164.8 174.3L164.8 175.5L164.8 176.7L164.9 178.1L164.9 179.3L164.9 179.8L164.9 180.0L164.9 180.2L164.9 180.3L164.9 180.2L164.9 180.1L164.9 179.8L165.0 179.4L165.0 179.2L165.0 178.8L165.0 178.5L165.0 178.3L165.0 177.9L165.0 177.7L165.0 177.6L165.0 177.7L165.0 177.8L165.0 177.9L165.1 178.3L165.1 178.7L165.1 179.2L165.1 179.5L165.1 179.8L165.1 180.1L165.1 180.2L165.1 180.4L165.1 180.3L165.2 180.2L165.2 179.9L165.2 179.6L165.2 179.4L165.2 179.1L165.2 178.9L165.2 178.7L165.2 178.5L165.2 178.7L165.3 178.8L165.3 179.0L165.3 179.2L165.3 179.4L165.3 179.5L165.3 179.6L165.3 179.7L165.4 179.6L165.4 179.3L165.4 179.1L165.4 178.8L165.4 178.5L165.4 177.9L165.4 177.3L165.4 177.0L165.4 176.8L165.4 176.6L165.5 176.8L165.5 177.2L165.5 177.7L165.5 178.1L165.5 178.5L165.5 179.0L165.5 179.3L165.5 179.5L165.5 179.7L165.6 179.7L165.6 179.6L165.6 179.2L165.6 178.7L165.6 178.1L165.6 177.6L165.6 176.9L165.6 176.5L165.6 176.2L165.6 175.9L165.6 175.7L165.7 175.7L165.7 175.8L165.7 176.0L165.7 176.6L165.7 177.4L165.7 178.2L165.7 179.0L165.7 179.5L165.7 179.9L165.7 180.0L165.8 179.9L165.8 179.7L165.8 179.5L165.8 179.3L165.8 179.0L165.8 178.8L165.8 178.6L165.8 178.5L165.8 178.3L165.8 178.2L165.9 178.2L165.9 178.3L165.9 178.6L165.9 178.7L165.9 179.1L165.9 179.4L165.9 179.5L165.9 179.7L165.9 179.8L165.9 179.9L166.0 179.9L166.0 179.8L166.0 179.4L166.0 179.0L166.0 178.3L166.0 177.2L166.0 176.2L166.0 175.6L166.0 174.9L166.0 174.5L166.1 174.4L166.1 174.7L166.1 175.5L166.1 176.3L166.1 177.1L166.1 177.9L166.1 178.6L166.1 179.3L166.1 179.7L166.1 180.0L166.2 179.9L166.2 179.8L166.2 179.5L166.2 178.9L166.2 178.3L166.2 177.8L166.2 177.3L166.2 176.7L166.2 176.1L166.2 175.9L166.2 175.8L166.3 176.0L166.3 176.4L166.3 176.8L166.3 177.2L166.3 178.0L166.3 178.7L166.3 179.4L166.3 179.9L166.3 180.0L166.3 180.1L166.4 180.1L166.4 180.0L166.4 179.7L166.4 179.4L166.4 178.9L166.4 178.2L166.4 177.2L166.4 176.4L166.4 175.7L166.4 175.0L166.4 174.1L166.4 173.6L166.5 173.5L166.5 173.7L166.5 174.4L166.5 175.4L166.5 176.3L166.5 176.9L166.5 177.9L166.5 178.5L166.5 179.2L166.5 179.7L166.5 180.0L166.6 180.2L166.6 180.0L166.6 179.8L166.6 179.5L166.6 179.1L166.6 178.8L166.6 178.3L166.6 177.9L166.6 177.7L166.7 177.4L166.7 177.3L166.7 177.5L166.7 177.8L166.7 178.3L166.7 178.5L166.7 178.9L166.7 179.3L166.7 179.6L166.7 179.9L166.7 180.0L166.8 180.0L166.8 179.8L166.8 179.6L166.8 179.4L166.8 179.1L166.8 178.9L166.8 178.7L166.8 178.6L166.8 178.5L166.9 178.7L166.9 178.9L166.9 179.2L166.9 179.3L166.9 179.5L166.9 179.7L166.9 179.9L166.9 180.0L166.9 180.1L166.9 180.2L166.9 180.1L167.0 180.0L167.0 179.7L167.0 179.3L167.0 178.9L167.0 178.2L167.0 177.5L167.0 176.8L167.0 176.3L167.0 176.0L167.0 175.5L167.0 175.4L167.0 175.5L167.1 176.0L167.1 176.4L167.1 176.9L167.1 177.4L167.1 178.3L167.1 179.1L167.1 179.4L167.1 179.8L167.1 180.0L167.1 179.9L167.2 179.6L167.2 178.9L167.2 178.1L167.2 177.2L167.2 176.0L167.2 175.3L167.2 174.2L167.2 173.3L167.2 172.7L167.2 172.5L167.2 172.9L167.2 173.8L167.3 175.1L167.3 176.2L167.3 176.9L167.3 178.1L167.3 178.7L167.3 179.6L167.3 179.9L167.3 180.0L167.3 179.9L167.4 179.7L167.4 179.6L167.4 179.3L167.4 179.1L167.4 178.9L167.4 178.7L167.4 178.6L167.4 178.8L167.4 178.9L167.4 179.2L167.5 179.4L167.5 179.7L167.5 179.8L167.5 180.0L167.5 180.1L167.5 180.0L167.5 179.8L167.5 179.4L167.5 178.7L167.5 177.5L167.6 176.8L167.6 175.8L167.6 175.0L167.6 174.4L167.6 174.3L167.6 174.8L167.6 175.8L167.6 176.6L167.6 177.5L167.6 178.6L167.7 179.6L167.7 179.9L167.7 180.3L167.7 180.4L167.7 180.3L167.7 180.2L167.7 180.0L167.7 179.7L167.7 179.0L167.7 178.2L167.8 177.8L167.8 177.3L167.8 176.7L167.8 176.4L167.8 176.2L167.8 176.5L167.8 176.9L167.8 177.5L167.8 177.8L167.8 178.2L167.8 178.6L167.9 179.1L167.9 179.5L167.9 179.8L167.9 179.7L167.9 179.6L167.9 179.0L167.9 178.2L167.9 177.7L167.9 177.2L167.9 176.6L167.9 175.9L168.0 175.1L168.0 174.7L168.0 174.4L168.0 174.6L168.0 174.9L168.0 175.3L168.0 176.3L168.0 177.2L168.0 177.9L168.0 178.7L168.0 179.3L168.0 179.7L168.1 179.8L168.1 179.6L168.1 179.4L168.1 179.0L168.1 178.7L168.1 178.3L168.1 177.8L168.1 177.4L168.1 176.9L168.1 176.7L168.2 176.6L168.2 176.7L168.2 176.9L168.2 177.4L168.2 177.9L168.2 178.2L168.2 178.8L168.2 179.2L168.2 179.6L168.2 179.7L168.2 179.8L168.3 179.7L168.3 179.4L168.3 178.6L168.3 177.6L168.3 176.7L168.3 175.9L168.3 175.1L168.3 174.4L168.3 174.0L168.3 173.8L168.3 174.3L168.4 175.2L168.4 175.8L168.4 176.7L168.4 177.4L168.4 178.4L168.4 179.1L168.4 179.6L168.4 179.9L168.4 180.2L168.4 180.3L168.4 180.2L168.4 180.1L168.4 179.7L168.5 179.1L168.5 178.5L168.5 178.1L168.5 177.2L168.5 176.5L168.5 176.0L168.5 175.6L168.5 175.8L168.5 176.3L168.5 176.7L168.5 177.6L168.6 178.6L168.6 179.0L168.6 179.6L168.6 179.9L168.6 180.0L168.6 180.1L168.6 180.0L168.6 179.9L168.6 179.6L168.6 179.3L168.6 179.0L168.6 178.6L168.7 178.2L168.7 177.8L168.7 177.3L168.7 177.0L168.7 176.9L168.7 177.1L168.7 177.4L168.7 177.9L168.7 178.3L168.7 178.8L168.7 179.1L168.7 179.3L168.8 179.7L168.8 179.9L168.8 179.8L168.8 179.6L168.8 179.3L168.8 179.0L168.8 178.7L168.8 178.2L168.8 177.9L168.8 177.4L168.9 177.1L168.9 176.9L168.9 176.8L168.9 174.3L168.9 172.9L168.9 174.3L168.9 177.0L168.9 178.6L168.9 178.9L168.9 179.4L168.9 179.7L168.9 179.8L169.0 179.9L169.0 179.8L169.0 179.6L169.0 179.3L169.0 178.8L169.0 178.1L169.0 177.1L169.0 176.6L169.0 176.0L169.0 175.6L169.0 175.2L169.0 175.0L169.1 175.0L169.1 175.2L169.1 175.8L169.1 176.6L169.1 177.7L169.1 178.2L169.1 178.6L169.1 179.1L169.1 179.6L169.1 179.9L169.1 180.0L169.2 179.9L169.2 179.7L169.2 179.5L169.2 179.1L169.2 178.6L169.2 178.1L169.2 177.7L169.2 177.4L169.2 177.2L169.2 177.3L169.2 177.6L169.3 177.8L169.3 178.4L169.3 178.6L169.3 179.0L169.3 179.3L169.3 179.6L169.3 179.9L169.3 180.0L169.3 180.1L169.3 180.0L169.3 179.9L169.3 179.7L169.4 179.4L169.4 178.8L169.4 178.5L169.4 177.9L169.4 177.4L169.4 177.2L169.4 177.1L169.4 177.0L169.4 177.1L169.4 177.2L169.4 177.6L169.4 177.9L169.5 178.5L169.5 179.0L169.5 179.4L169.5 179.6L169.5 179.7L169.5 179.6L169.5 179.4L169.5 179.2L169.5 178.8L169.5 177.8L169.5 177.0L169.5 176.0L169.6 175.1L169.6 174.1L169.6 173.4L169.6 173.2L169.6 173.3L169.6 173.7L169.6 174.4L169.6 175.3L169.6 176.6L169.6 177.6L169.6 178.7L169.6 179.5L169.6 179.9L169.7 180.1L169.7 180.0L169.7 179.8L169.7 179.5L169.7 179.1L169.7 178.7L169.7 178.2L169.7 177.9L169.7 177.6L169.7 177.5L169.8 177.7L169.8 177.9L169.8 178.2L169.8 178.4L169.8 178.8L169.8 179.2L169.8 179.4L169.8 179.6L169.8 179.7L169.8 179.6L169.8 179.5L169.9 179.0L169.9 178.5L169.9 177.7L169.9 177.0L169.9 176.2L169.9 175.7L169.9 175.1L169.9 174.8L169.9 175.0L169.9 175.3L169.9 176.1L169.9 176.9L170.0 177.5L170.0 178.5L170.0 179.0L170.0 179.6L170.0 179.9L170.0 180.0L170.0 180.1L170.0 180.0L170.0 179.8L170.0 179.7L170.0 179.4L170.0 179.0L170.1 178.7L170.1 178.5L170.1 178.2L170.1 178.1L170.1 178.0L170.1 178.1L170.1 178.2L170.1 178.5L170.1 178.8L170.1 179.1L170.1 179.5L170.1 179.8L170.1 179.9L170.1 180.1L170.2 180.1L170.2 180.2L170.2 180.1L170.2 179.9L170.2 179.8L170.2 179.4L170.2 179.2L170.2 179.0L170.2 178.7L170.2 178.3L170.2 178.1L170.3 177.9L170.3 177.8L170.3 178.0L170.3 178.1L170.3 178.4L170.3 178.7L170.3 178.9L170.3 179.2L170.3 179.4L170.3 179.7L170.3 180.0L170.3 180.1L170.4 180.1L170.4 180.0L170.4 179.7L170.4 179.2L170.4 178.6L170.4 177.6L170.4 177.0L170.4 176.6L170.4 175.9L170.4 175.3L170.4 174.9L170.4 174.8L170.5 175.0L170.5 175.6L170.5 176.2L170.5 177.2L170.5 178.1L170.5 178.6L170.5 179.0L170.5 179.4L170.5 179.6L170.5 179.8L170.6 179.7L170.6 179.6L170.6 179.3L170.6 178.8L170.6 178.2L170.6 177.6L170.6 177.2L170.6 176.8L170.6 176.7L170.6 176.9L170.6 177.3L170.6 177.6L170.6 178.2L170.7 178.9L170.7 179.2L170.7 179.6L170.7 179.8L170.7 180.0L170.7 179.9L170.7 179.8L170.7 179.4L170.7 178.8L170.7 178.5L170.7 178.1L170.8 177.5L170.8 177.0L170.8 176.6L170.8 176.4L170.8 176.3L170.8 176.2L170.8 176.4L170.8 176.9L170.8 177.3L170.8 177.7L170.8 178.4L170.8 179.0L170.8 179.3L170.8 179.5L170.9 179.7L170.9 179.8L170.9 179.6L170.9 179.3L170.9 179.1L170.9 178.7L170.9 178.4L170.9 177.9L170.9 177.8L170.9 177.6L170.9 177.5L171.0 177.4L171.0 177.6L171.0 177.9L171.0 178.2L171.0 178.4L171.0 178.9L171.0 179.1L171.0 179.5L171.0 179.7L171.0 179.8L171.1 179.7L171.1 179.3L171.1 178.7L171.1 178.0L171.1 177.1L171.1 175.9L171.1 174.9L171.1 174.2L171.1 173.7L171.1 173.5L171.1 173.6L171.1 174.0L171.1 174.4L171.1 175.0L171.2 175.5L171.2 176.7L171.2 177.6L171.2 178.5L171.2 179.1L171.2 179.6L171.2 179.9L171.2 180.0L171.2 179.8L171.2 179.5L171.2 179.1L171.2 178.3L171.3 177.3L171.3 176.2L171.3 175.7L171.3 175.1L171.3 174.8L171.3 174.7L171.3 175.0L171.3 175.3L171.3 175.7L171.3 176.3L171.3 177.1L171.3 177.7L171.3 178.4L171.3 178.9L171.4 179.5L171.4 179.8L171.4 179.6L171.4 179.3L171.4 179.0L171.4 178.8L171.4 178.5L171.4 178.2L171.4 177.9L171.4 177.7L171.4 177.5L171.5 177.5L171.5 177.7L171.5 178.0L171.5 178.2L171.5 178.6L171.5 179.2L171.5 179.6L171.5 179.9L171.5 180.1L171.5 180.2L171.5 180.1L171.5 179.9L171.6 179.5L171.6 179.0L171.6 178.5L171.6 177.9L171.6 177.6L171.6 177.3L171.6 177.1L171.6 177.0L171.6 177.1L171.6 177.3L171.6 177.7L171.6 178.1L171.6 178.6L171.6 179.0L171.7 179.5L171.7 179.9L171.7 180.2L171.7 180.3L171.7 180.2L171.7 180.1L171.7 179.9L171.7 179.7L171.7 179.4L171.7 178.9L171.7 178.6L171.7 178.2L171.7 177.7L171.8 177.5L171.8 177.4L171.8 177.5L171.8 177.7L171.8 178.0L171.8 178.5L171.8 178.9L171.8 179.3L171.8 179.6L171.8 179.8L171.9 179.7L171.9 179.5L171.9 179.2L171.9 178.5L171.9 177.7L171.9 177.2L171.9 176.4L171.9 175.6L171.9 175.0L171.9 174.5L171.9 174.4L171.9 174.6L171.9 175.1L171.9 175.8L171.9 176.9L172.0 178.1L172.0 178.9L172.0 179.6L172.0 180.0L172.0 180.3L172.0 180.4L172.0 180.3L172.0 179.9L172.0 179.6L172.0 179.0L172.0 178.2L172.0 177.5L172.0 176.6L172.1 176.2L172.1 175.8L172.1 175.5L172.1 175.6L172.1 175.9L172.1 176.3L172.1 177.1L172.1 178.1L172.1 178.7L172.1 179.1L172.1 179.7L172.1 180.2L172.1 180.3L172.1 180.4L172.2 180.4L172.2 180.3L172.2 180.1L172.2 179.9L172.2 179.4L172.2 179.0L172.2 178.4L172.2 177.8L172.2 177.4L172.2 177.3L172.2 177.5L172.2 177.8L172.2 178.1L172.3 178.5L172.3 179.1L172.3 179.4L172.3 179.8L172.3 180.0L172.3 180.2L172.3 180.3L172.3 180.2L172.3 180.0L172.3 179.5L172.3 178.8L172.3 178.4L172.3 177.8L172.4 177.3L172.4 176.9L172.4 176.3L172.4 176.0L172.4 176.2L172.4 176.7L172.4 177.1L172.4 177.6L172.4 178.0L172.4 178.5L172.4 178.9L172.4 179.5L172.4 179.8L172.5 180.0L172.5 180.1L172.5 179.8L172.5 179.4L172.5 179.0L172.5 178.3L172.5 177.3L172.5 176.6L172.5 175.8L172.5 175.2L172.5 174.9L172.5 174.5L172.5 174.7L172.6 175.3L172.6 175.9L172.6 176.7L172.6 177.7L172.6 178.8L172.6 179.5L172.6 179.9L172.6 180.2L172.6 180.3L172.6 180.1L172.6 179.8L172.6 179.5L172.7 179.1L172.7 178.6L172.7 178.3L172.7 178.0L172.7 177.8L172.7 177.7L172.7 177.8L172.7 178.1L172.7 178.5L172.7 178.8L172.7 179.1L172.7 179.5L172.7 179.9L172.7 180.0L172.8 180.2L172.8 180.3L172.8 180.2L172.8 180.0L172.8 179.6L172.8 179.2L172.8 178.7L172.8 178.1L172.8 177.6L172.8 177.1L172.8 176.8L172.8 176.7L172.8 176.9L172.8 177.1L172.9 177.7L172.9 178.1L172.9 178.6L172.9 179.1L172.9 179.4L172.9 179.8L172.9 179.9L172.9 179.7L172.9 179.6L172.9 179.3L172.9 178.9L172.9 178.5L172.9 177.9L173.0 177.3L173.0 177.0L173.0 176.8L173.0 176.7L173.0 176.9L173.0 177.4L173.0 178.0L173.0 178.5L173.0 179.0L173.0 179.3L173.0 179.8L173.0 180.1L173.0 180.2L173.0 180.3L173.1 180.2L173.1 180.0L173.1 179.6L173.1 179.2L173.1 178.5L173.1 178.0L173.1 177.6L173.1 177.0L173.1 176.4L173.1 176.2L173.1 176.0L173.1 175.9L173.1 176.0L173.1 176.3L173.1 176.8L173.2 177.2L173.2 178.1L173.2 178.9L173.2 179.5L173.2 179.7L173.2 180.0L173.2 180.1L173.2 180.0L173.2 179.9L173.2 179.7L173.2 179.6L173.2 179.3L173.2 179.2L173.3 179.0L173.3 178.8L173.3 178.7L173.3 178.6L173.3 178.7L173.3 178.8L173.3 178.9L173.3 179.1L173.3 179.3L173.3 179.5L173.3 179.6L173.3 179.8L173.3 179.9L173.4 180.0L173.4 179.9L173.4 179.7L173.4 179.4L173.4 179.0L173.4 178.6L173.4 178.3L173.4 177.8L173.4 177.5L173.4 177.2L173.4 177.0L173.4 177.1L173.4 177.4L173.5 177.8L173.5 178.1L173.5 178.4L173.5 178.7L173.5 179.0L173.5 179.3L173.5 179.5L173.5 179.7L173.5 179.6L173.5 179.5L173.5 179.4L173.5 179.2L173.5 179.0L173.6 178.8L173.6 178.4L173.6 178.1L173.6 177.9L173.6 177.7L173.6 177.8L173.6 178.0L173.6 178.2L173.6 178.5L173.6 178.9L173.6 179.2L173.6 179.6L173.6 179.8L173.6 180.0L173.7 180.1L173.7 180.2L173.7 180.1L173.7 179.9L173.7 179.6L173.7 179.3L173.7 179.0L173.7 178.7L173.7 178.5L173.7 178.3L173.7 178.4L173.7 178.5L173.7 178.7L173.8 179.0L173.8 179.3L173.8 179.6L173.8 179.8L173.8 180.1L173.8 180.2L173.8 180.3L173.8 180.2L173.8 179.9L173.8 179.5L173.8 179.2L173.8 178.8L173.8 178.2L173.9 177.7L173.9 177.3L173.9 177.1L173.9 177.3L173.9 177.5L173.9 177.8L173.9 178.2L173.9 178.5L173.9 178.8L173.9 179.1L173.9 179.4L173.9 179.7L173.9 179.8L174.0 179.8L174.0 179.7L174.0 179.6L174.0 179.3L174.0 179.1L174.0 178.8L174.0 178.5L174.0 178.2L174.0 177.9L174.0 177.8L174.0 177.7L174.0 178.0L174.0 178.4L174.1 178.7L174.1 179.2L174.1 179.6L174.1 179.8L174.1 180.1L174.1 180.2L174.1 180.3L174.1 180.2L174.1 179.9L174.1 179.7L174.1 179.2L174.1 178.4L174.1 177.5L174.1 176.8L174.1 176.1L174.2 175.5L174.2 175.3L174.2 175.4L174.2 175.8L174.2 176.4L174.2 176.9L174.2 177.7L174.2 178.3L174.2 178.9L174.2 179.4L174.2 179.7L174.2 179.8L174.3 179.7L174.3 179.6L174.3 179.4L174.3 179.1L174.3 178.9L174.3 178.7L174.3 178.5L174.3 178.4L174.3 178.6L174.3 178.8L174.3 179.1L174.3 179.4L174.3 179.7L174.4 180.0L174.4 180.1L174.4 180.2L174.4 180.3L174.4 180.2L174.4 179.8L174.4 179.2L174.4 178.7L174.4 177.7L174.4 177.1L174.4 176.1L174.4 175.5L174.4 174.9L174.4 174.6L174.4 174.4L174.5 174.4L174.5 174.8L174.5 175.4L174.5 176.1L174.5 176.6L174.5 177.5L174.5 178.5L174.5 179.5L174.5 180.1L174.5 180.3L174.5 180.4L174.5 180.3L174.5 180.2L174.5 180.0L174.5 179.4L174.6 178.3L174.6 177.4L174.6 176.3L174.6 175.3L174.6 174.5L174.6 174.2L174.6 174.4L174.6 174.8L174.6 175.5L174.6 176.2L174.6 177.3L174.6 178.3L174.6 179.1L174.6 179.6L174.6 179.7L174.7 179.8L174.7 179.7L174.7 179.5L174.7 179.1L174.7 178.3L174.7 177.4L174.7 176.6L174.7 175.4L174.7 174.6L174.7 174.1L174.7 173.7L174.7 174.2L174.7 174.9L174.7 175.4L174.8 176.3L174.8 177.5L174.8 178.4L174.8 179.0L174.8 179.5L174.8 179.8L174.8 179.9L174.8 179.8L174.8 179.7L174.8 179.5L174.8 179.3L174.8 179.0L174.8 178.8L174.9 178.7L174.9 178.6L174.9 178.4L174.9 178.6L174.9 178.8L174.9 179.0L174.9 179.2L174.9 179.4L174.9 179.6L174.9 179.9L174.9 180.1L174.9 180.2L174.9 180.3L175.0 180.3L175.0 180.2L175.0 180.1L175.0 179.9L175.0 179.6L175.0 179.3L175.0 179.2L175.0 178.9L175.0 178.8L175.0 178.7L175.0 178.8L175.0 179.0L175.0 179.3L175.0 179.5L175.0 179.7L175.0 179.9L175.1 180.1L175.1 180.2L175.1 180.1L175.1 179.9L175.1 179.5L175.1 179.1L175.1 178.5L175.1 177.8L175.1 176.4L175.1 175.4L175.1 174.7L175.1 173.9L175.1 173.7L175.2 174.1L175.2 174.5L175.2 175.3L175.2 176.2L175.2 176.8L175.2 177.9L175.2 178.4L175.2 178.9L175.2 179.5L175.2 179.7L175.2 179.8L175.2 179.7L175.2 179.6L175.2 179.4L175.3 179.1L175.3 179.0L175.3 178.7L175.3 178.5L175.3 178.6L175.3 178.8L175.3 179.0L175.3 179.3L175.3 179.6L175.3 179.8L175.3 180.0L175.3 180.2L175.3 180.3L175.4 180.3L175.4 180.1L175.4 180.0L175.4 179.8L175.4 179.5L175.4 179.2L175.4 179.0L175.4 178.7L175.4 178.5L175.4 178.4L175.4 178.3L175.4 178.5L175.4 178.6L175.4 178.8L175.4 179.1L175.5 179.3L175.5 179.5L175.5 179.6L175.5 179.7L175.5 179.6L175.5 179.4L175.5 179.1L175.5 178.9L175.5 178.6L175.5 178.3L175.5 178.1L175.6 177.9L175.6 178.0L175.6 178.3L175.6 178.6L175.6 179.0L175.6 179.5L175.6 179.8L175.6 180.0L175.6 180.2L175.6 180.3L175.6 180.2L175.6 179.8L175.6 179.4L175.6 178.9L175.7 178.3L175.7 177.5L175.7 176.9L175.7 176.4L175.7 175.9L175.7 175.7L175.7 175.8L175.7 176.3L175.7 176.9L175.7 177.3L175.7 178.2L175.7 178.9L175.7 179.3L175.7 179.6L175.7 179.8L175.7 179.9L175.7 180.0L175.8 180.0L175.8 179.9L175.8 179.8L175.8 179.4L175.8 178.6L175.8 178.2L175.8 177.4L175.8 176.8L175.8 176.3L175.8 175.4L175.8 174.9L175.8 174.7L175.8 174.8L175.8 175.2L175.8 175.7L175.8 176.6L175.8 177.6L175.9 178.5L175.9 179.2L175.9 179.8L175.9 180.1L175.9 180.2L175.9 180.3L175.9 180.2L175.9 180.1L175.9 180.0L175.9 179.9L175.9 179.7L175.9 179.4L175.9 179.1L175.9 179.0L175.9 178.8L176.0 178.7L176.0 178.8L176.0 179.0L176.0 179.3L176.0 179.5L176.0 179.7L176.0 179.9L176.0 180.0L176.0 179.9L176.0 179.7L176.0 179.3L176.0 179.0L176.1 178.5L176.1 178.1L176.1 177.6L176.1 177.3L176.1 177.1L176.1 177.2L176.1 177.4L176.1 177.7L176.1 178.1L176.1 178.8L176.1 179.4L176.1 179.8L176.1 180.1L176.1 180.2L176.1 180.3L176.2 180.1L176.2 179.7L176.2 179.4L176.2 178.9L176.2 178.2L176.2 177.8L176.2 177.4L176.2 177.2L176.2 177.1L176.2 177.3L176.2 177.6L176.2 178.0L176.2 178.5L176.2 179.1L176.2 179.4L176.2 179.7L176.2 180.1L176.3 180.3L176.3 180.2L176.3 180.0L176.3 179.5L176.3 178.6L176.3 178.0L176.3 176.7L176.3 176.0L176.3 175.1L176.3 174.3L176.3 174.0L176.3 173.8L176.3 174.1L176.3 174.7L176.3 175.7L176.4 176.3L176.4 177.1L176.4 178.3L176.4 179.3L176.4 179.7L176.4 180.0L176.4 180.1L176.4 180.0L176.4 179.7L176.4 179.3L176.4 178.7L176.4 178.0L176.4 177.2L176.4 176.4L176.4 175.9L176.4 175.7L176.5 175.7L176.5 175.9L176.5 176.3L176.5 176.9L176.5 177.8L176.5 178.2L176.5 178.7L176.5 179.4L176.5 179.6L176.5 179.8L176.5 179.9L176.5 179.8L176.5 179.6L176.5 179.3L176.5 178.8L176.5 178.5L176.6 178.1L176.6 177.5L176.6 177.0L176.6 176.7L176.6 176.5L176.6 176.7L176.6 176.9L176.6 177.4L176.6 178.1L176.6 178.7L176.6 179.2L176.6 179.5L176.6 179.7L176.6 179.9L176.6 180.0L176.7 180.0L176.7 179.8L176.7 179.5L176.7 179.2L176.7 178.8L176.7 178.5L176.7 178.2L176.7 177.7L176.7 177.3L176.7 177.1L176.7 177.0L176.7 177.1L176.7 177.4L176.7 177.9L176.7 178.5L176.7 178.9L176.7 179.4L176.8 179.6L176.8 179.8L176.8 180.0L176.8 179.9L176.8 179.8L176.8 179.6L176.8 179.4L176.8 178.9L176.8 178.6L176.8 178.0L176.8 177.7L176.8 177.4L176.8 177.2L176.8 177.1L176.8 177.2L176.8 177.4L176.9 177.8L176.9 178.4L176.9 178.8L176.9 179.2L176.9 179.5L176.9 179.8L176.9 180.0L176.9 179.9L176.9 179.7L176.9 179.3L176.9 178.9L176.9 178.7L176.9 178.2L176.9 177.9L177.0 177.7L177.0 177.6L177.0 177.8L177.0 178.1L177.0 178.5L177.0 178.9L177.0 179.1L177.0 179.4L177.0 179.7L177.0 179.9L177.0 180.0L177.0 179.9L177.0 179.7L177.0 179.2L177.0 178.7L177.0 177.8L177.1 177.0L177.1 176.1L177.1 175.5L177.1 175.3L177.1 175.5L177.1 175.8L177.1 176.3L177.1 177.0L177.1 177.9L177.1 178.9L177.1 179.6L177.1 180.1L177.1 180.3L177.1 180.2L177.1 180.1L177.2 179.8L177.2 179.5L177.2 179.1L177.2 178.9L177.2 178.6L177.2 178.4L177.2 178.3L177.2 178.4L177.2 178.5L177.2 178.6L177.2 178.8L177.2 179.1L177.2 179.4L177.2 179.7L177.2 179.9L177.2 180.0L177.3 180.1L177.3 180.0L177.3 179.8L177.3 179.6L177.3 179.3L177.3 178.7L177.3 178.1L177.3 177.6L177.3 176.9L177.3 176.5L177.3 176.2L177.3 176.3L177.3 176.6L177.3 177.2L177.3 177.5L177.4 178.1L177.4 178.7L177.4 179.2L177.4 179.7L177.4 180.1L177.4 180.3L177.4 180.2L177.4 180.1L177.4 179.6L177.4 179.2L177.4 178.4L177.4 177.9L177.4 176.9L177.4 176.3L177.4 175.7L177.4 175.3L177.5 175.1L177.5 174.9L177.5 175.1L177.5 175.6L177.5 176.1L177.5 177.1L177.5 177.8L177.5 178.5L177.5 179.4L177.5 179.9L177.5 180.2L177.5 180.3L177.5 180.2L177.5 179.9L177.5 179.5L177.5 179.2L177.6 178.7L177.6 178.2L177.6 177.5L177.6 177.2L177.6 176.8L177.6 176.5L177.6 176.4L177.6 176.5L177.6 176.9L177.6 177.4L177.6 177.9L177.6 178.5L177.6 179.0L177.6 179.6L177.6 180.0L177.6 180.2L177.7 180.2L177.7 180.0L177.7 179.8L177.7 179.4L177.7 178.8L177.7 178.2L177.7 177.9L177.7 177.4L177.7 177.1L177.7 177.0L177.7 176.8L177.7 176.9L177.7 177.2L177.7 177.7L177.7 178.2L177.7 178.5L177.7 178.9L177.7 179.4L177.8 179.8L177.8 180.1L177.8 180.3L177.8 180.4L177.8 180.3L177.8 180.1L177.8 179.7L177.8 179.3L177.8 178.6L177.8 177.6L177.8 176.8L177.8 176.3L177.8 175.9L177.8 175.8L177.8 176.2L177.9 176.6L177.9 177.1L177.9 177.9L177.9 178.6L177.9 179.3L177.9 179.8L177.9 180.2L177.9 180.3L177.9 180.2L177.9 180.0L177.9 179.8L177.9 179.5L177.9 179.3L177.9 179.0L177.9 178.8L178.0 178.8L178.0 178.9L178.0 179.0L178.0 179.2L178.0 179.3L178.0 179.6L178.0 179.8L178.0 179.9L178.0 180.1L178.0 180.0L178.0 179.8L178.0 179.6L178.0 179.5L178.1 179.3L178.1 179.0L178.1 178.8L178.1 178.7L178.1 178.8L178.1 178.9L178.1 179.0L178.1 179.3L178.1 179.5L178.1 179.8L178.1 180.0L178.1 180.2L178.1 180.3L178.1 180.4L178.1 180.3L178.1 180.1L178.2 180.0L178.2 179.8L178.2 179.5L178.2 179.3L178.2 179.0L178.2 178.8L178.2 178.6L178.2 178.5L178.2 178.6L178.2 178.7L178.2 178.9L178.2 179.1L178.2 179.3L178.2 179.4L178.2 179.5L178.2 179.6L178.2 179.7L178.3 179.7L178.3 179.6L178.3 179.4L178.3 179.3L178.3 178.9L178.3 178.7L178.3 178.2L178.3 178.0L178.3 177.7L178.3 177.5L178.3 177.3L178.3 177.4L178.3 177.5L178.3 177.8L178.3 178.2L178.3 178.4L178.3 178.9L178.4 179.1L178.4 179.4L178.4 179.6L178.4 179.7L178.4 179.6L178.4 179.3L178.4 178.9L178.4 178.5L178.4 178.2L178.4 177.6L178.4 177.3L178.4 177.0L178.4 176.8L178.4 177.0L178.4 177.4L178.5 177.9L178.5 178.3L178.5 178.7L178.5 179.2L178.5 179.6L178.5 179.8L178.5 179.9L178.5 179.8L178.5 179.6L178.5 179.5L178.5 179.3L178.5 179.0L178.5 178.6L178.5 178.2L178.5 178.0L178.5 177.7L178.5 177.4L178.6 177.4L178.6 177.5L178.6 177.8L178.6 178.1L178.6 178.4L178.6 178.6L178.6 179.0L178.6 179.3L178.6 179.7L178.6 179.9L178.6 180.1L178.6 180.2L178.6 180.1L178.6 180.0L178.6 179.7L178.6 179.3L178.7 178.9L178.7 178.6L178.7 178.2L178.7 177.8L178.7 177.4L178.7 177.3L178.7 177.4L178.7 177.8L178.7 178.2L178.7 178.6L178.7 179.0L178.7 179.3L178.7 179.6L178.7 179.8L178.7 179.9L178.8 179.7L178.8 179.4L178.8 178.7L178.8 178.3L178.8 177.6L178.8 177.0L178.8 176.2L178.8 175.7L178.8 175.4L178.8 175.6L178.8 175.9L178.8 176.5L178.8 177.4L178.8 178.1L178.8 179.0L178.8 179.6L178.8 180.0L178.8 180.2L178.8 180.3L178.9 180.3L178.9 180.2L178.9 179.9L178.9 179.5L178.9 178.7L178.9 178.0L178.9 177.1L178.9 176.2L178.9 175.4L178.9 174.9L178.9 175.1L178.9 175.7L178.9 176.2L178.9 177.0L178.9 177.6L178.9 178.5L178.9 179.1L178.9 179.5L179.0 179.6L179.0 179.5L179.0 179.3L179.0 178.7L179.0 178.2L179.0 177.3L179.0 176.8L179.0 176.1L179.0 175.7L179.0 175.3L179.0 175.2L179.0 175.3L179.0 175.7L179.0 176.3L179.0 176.8L179.0 177.6L179.1 178.2L179.1 178.6L179.1 179.1L179.1 179.6L179.1 179.7L179.1 179.9L179.1 179.8L179.1 179.7L179.1 179.5L179.1 179.1L179.1 178.3L179.1 177.8L179.1 177.0L179.1 176.2L179.1 175.6L179.1 175.4L179.1 175.7L179.2 176.1L179.2 176.5L179.2 177.1L179.2 178.1L179.2 178.7L179.2 179.1L179.2 179.7L179.2 180.0L179.2 180.1L179.2 180.0L179.2 179.9L179.2 179.8L179.2 179.6L179.2 179.4L179.2 179.2L179.2 179.0L179.2 178.9L179.3 178.8L179.3 178.9L179.3 179.0L179.3 179.2L179.3 179.3L179.3 179.5L179.3 179.7L179.3 179.8L179.3 180.0L179.3 180.1L179.3 180.0L179.3 179.9L179.3 179.7L179.3 179.5L179.3 179.3L179.4 178.9L179.4 178.5L179.4 178.0L179.4 177.7L179.4 177.5L179.4 177.4L179.4 177.6L179.4 177.7L179.4 178.2L179.4 178.7L179.4 179.1L179.4 179.5L179.4 179.8L179.4 180.0L179.4 180.1L179.4 180.0L179.4 179.8L179.5 179.5L179.5 179.1L179.5 178.8L179.5 178.5L179.5 178.1L179.5 177.8L179.5 177.5L179.5 177.1L179.5 177.0L179.5 177.1L179.5 177.5L179.5 178.0L179.5 178.4L179.5 178.9L179.5 179.4L179.5 179.6L179.5 179.7L179.6 179.6L179.6 179.2L179.6 178.7L179.6 178.0L179.6 177.4L179.6 176.9L179.6 176.2L179.6 175.9L179.6 175.8L179.6 175.9L179.6 176.1L179.6 176.6L179.6 177.3L179.6 177.9L179.6 178.5L179.6 179.2L179.6 179.6L179.6 179.8L179.6 179.9L179.7 179.9L179.7 179.7L179.7 179.3L179.7 178.8L179.7 178.4L179.7 178.0L179.7 177.5L179.7 177.1L179.7 177.0L179.7 176.9L179.7 177.0L179.7 177.3L179.7 177.7L179.7 177.9L179.7 178.5L179.7 179.2L179.7 179.7L179.7 179.9L179.8 180.1L179.8 180.3L179.8 180.2L179.8 179.9L179.8 179.4L179.8 178.7L179.8 178.0L179.8 177.7L179.8 177.3L179.8 176.7L179.8 176.3L179.8 176.1L179.8 176.2L179.8 176.6L179.8 177.0L179.8 177.7L179.8 178.4L179.9 179.1L179.9 179.7L179.9 180.0L179.9 180.1L179.9 180.3L179.9 180.1L179.9 179.7L179.9 179.0L179.9 178.1L179.9 177.0L179.9 176.3L179.9 175.5L179.9 175.1L179.9 175.0L179.9 175.3L179.9 175.7L179.9 176.4L179.9 176.9L180.0 177.4L180.0 177.9L180.0 178.7L180.0 179.0L180.0 179.4L180.0 179.7L180.0 179.8L180.0 179.7L180.0 179.5L180.0 179.1L180.0 178.5L180.0 177.9L180.0 177.3L180.0 176.9L180.0 176.4L180.0 176.2L180.0 176.1L180.0 176.4L180.1 176.8L180.1 177.5L180.1 178.2L180.1 178.8L180.1 179.4L180.1 179.7L180.1 180.0L180.1 180.1L180.1 180.2L180.1 180.1L180.1 179.9L180.1 179.6L180.1 179.4L180.1 179.1L180.1 178.7L180.1 178.5L180.1 178.2L180.2 178.0L180.2 177.9L180.2 178.1L180.2 178.2L180.2 178.5L180.2 178.7L180.2 179.1L180.2 179.3L180.2 179.6L180.2 179.9L180.2 180.0L180.2 180.1L180.2 180.0L180.2 179.7L180.2 179.2L180.2 178.5L180.2 177.6L180.2 176.6L180.2 175.9L180.3 175.0L180.3 174.5L180.3 174.4L180.3 174.5L180.3 174.7L180.3 175.3L180.3 175.9L180.3 176.7L180.3 177.9L180.3 178.9L180.3 179.3L180.3 179.7L180.3 179.9L180.3 179.8L180.3 179.6L180.3 179.1L180.3 178.5L180.4 177.5L180.4 176.5L180.4 175.7L180.4 175.1L180.4 174.9L180.4 174.7L180.4 174.9L180.4 175.7L180.4 176.6L180.4 177.6L180.4 178.3L180.4 178.9L180.4 179.3L180.4 179.8L180.4 180.0L180.4 180.1L180.4 180.2L180.4 180.1L180.4 179.9L180.4 179.7L180.5 179.3L180.5 178.9L180.5 178.2L180.5 177.6L180.5 177.2L180.5 176.9L180.5 176.8L180.5 176.7L180.5 176.9L180.5 177.4L180.5 178.0L180.5 178.5L180.5 178.9L180.5 179.4L180.5 179.7L180.5 179.8L180.5 179.7L180.6 179.5L180.6 179.2L180.6 178.8L180.6 178.1L180.6 177.5L180.6 176.7L180.6 176.2L180.6 175.6L180.6 175.3L180.6 175.6L180.6 175.9L180.6 176.3L180.6 176.8L180.6 177.5L180.6 178.1L180.6 178.7L180.6 179.1L180.6 179.4L180.6 179.7L180.7 179.9L180.7 179.8L180.7 179.6L180.7 179.4L180.7 179.2L180.7 179.0L180.7 178.8L180.7 178.7L180.7 178.8L180.7 178.9L180.7 179.0L180.7 179.1L180.7 179.4L180.7 179.6L180.7 179.8L180.7 180.0L180.7 180.2L180.8 180.3L180.8 180.4L180.8 180.3L180.8 180.2L180.8 180.0L180.8 179.4L180.8 178.7L180.8 178.0L180.8 177.2L180.8 176.7L180.8 176.2L180.8 176.1L180.8 176.3L180.8 176.9L180.8 177.2L180.8 177.9L180.8 178.5L180.8 179.1L180.8 179.6L180.9 179.9L180.9 180.0L180.9 179.9L180.9 179.8L180.9 179.6L180.9 179.3L180.9 178.8L180.9 178.3L180.9 177.7L180.9 177.2L180.9 176.8L180.9 176.2L180.9 176.1L180.9 176.0L180.9 176.2L180.9 176.6L180.9 177.1L180.9 177.5L180.9 178.2L180.9 178.9L181.0 179.3L181.0 179.6L181.0 179.7L181.0 179.6L181.0 179.3L181.0 178.9L181.0 178.5L181.0 178.0L181.0 177.1L181.0 176.1L181.0 175.3L181.0 174.7L181.0 174.4L181.0 174.3L181.0 174.5L181.0 175.3L181.0 175.9L181.0 176.6L181.0 177.2L181.0 177.5L181.1 175.2L181.1 174.1L181.1 175.2L181.1 177.5L181.1 179.1L181.1 179.7L181.1 179.9L181.1 179.7L181.1 179.5L181.1 179.1L181.1 178.5L181.1 177.8L181.1 177.1L181.1 176.4L181.1 176.0L181.1 175.7L181.1 175.5L181.1 175.9L181.1 176.5L181.1 177.3L181.2 177.8L181.2 178.5L181.2 179.1L181.2 179.7L181.2 180.1L181.2 180.2L181.2 180.1L181.2 180.0L181.2 179.8L181.2 179.6L181.2 179.4L181.2 179.3L181.2 179.1L181.2 179.2L181.3 179.3L181.3 179.4L181.3 179.6L181.3 179.7L181.3 179.9L181.3 180.0L181.3 180.1L181.3 180.2L181.3 180.1L181.3 180.0L181.3 179.7L181.3 179.3L181.3 178.6L181.3 177.9L181.3 177.4L181.3 176.9L181.3 176.7L181.4 176.8L181.4 177.1L181.4 177.5L181.4 177.8L181.4 178.2L181.4 178.6L181.4 179.0L181.4 179.3L181.4 179.5L181.4 179.7L181.4 179.8L181.4 179.7L181.4 179.5L181.4 179.2L181.4 178.6L181.4 177.6L181.4 176.6L181.4 176.0L181.4 175.2L181.4 174.7L181.4 174.3L181.5 174.4L181.5 174.9L181.5 175.3L181.5 176.2L181.5 176.8L181.5 177.6L181.5 178.6L181.5 179.3L181.5 179.6L181.5 179.8L181.5 179.7L181.5 179.6L181.5 179.4L181.5 179.2L181.5 178.9L181.5 178.8L181.5 178.6L181.5 178.5L181.5 178.4L181.6 178.4L181.6 178.5L181.6 178.7L181.6 178.9L181.6 179.3L181.6 179.5L181.6 179.8L181.6 180.0L181.6 180.2L181.6 180.1L181.6 179.9L181.6 179.5L181.6 178.9L181.6 178.1L181.6 177.4L181.6 176.6L181.6 176.2L181.6 176.0L181.7 175.9L181.7 176.2L181.7 176.4L181.7 176.9L181.7 177.5L181.7 177.9L181.7 178.3L181.7 179.0L181.7 179.6L181.7 179.9L181.7 180.0L181.7 179.8L181.7 179.5L181.7 179.1L181.7 178.7L181.7 178.4L181.7 178.1L181.7 177.7L181.7 177.5L181.8 177.4L181.8 177.5L181.8 177.7L181.8 178.0L181.8 178.4L181.8 178.6L181.8 179.0L181.8 179.3L181.8 179.7L181.8 179.8L181.8 180.0L181.8 180.1L181.8 180.0L181.8 179.8L181.8 179.5L181.8 179.2L181.8 178.7L181.8 178.1L181.9 177.8L181.9 177.4L181.9 177.2L181.9 177.1L181.9 177.3L181.9 177.6L181.9 178.1L181.9 178.5L181.9 178.8L181.9 179.0L181.9 179.4L181.9 179.6L181.9 179.7L181.9 179.8L181.9 179.7L181.9 179.5L181.9 179.2L181.9 178.8L181.9 178.3L181.9 177.4L182.0 176.9L182.0 176.4L182.0 175.5L182.0 174.9L182.0 174.6L182.0 174.8L182.0 175.1L182.0 175.7L182.0 176.7L182.0 177.3L182.0 178.4L182.0 179.4L182.0 180.0L182.0 180.2L182.0 180.4L182.0 180.3L182.0 180.2L182.0 180.0L182.0 179.5L182.0 179.1L182.0 178.2L182.1 177.6L182.1 177.0L182.1 176.3L182.1 175.9L182.1 175.3L182.1 175.1L182.1 175.2L182.1 175.6L182.1 176.2L182.1 176.9L182.1 177.8L182.1 178.8L182.1 179.6L182.1 180.0L182.1 180.3L182.1 180.4L182.1 180.3L182.1 180.1L182.1 179.8L182.1 179.3L182.1 179.0L182.2 178.7L182.2 178.3L182.2 178.1L182.2 177.7L182.2 177.5L182.2 177.4L182.2 177.5L182.2 177.7L182.2 178.1L182.2 178.5L182.2 178.8L182.2 179.1L182.2 179.2L182.2 179.5L182.2 179.6L182.2 179.7L182.2 179.6L182.2 179.4L182.2 179.1L182.2 178.7L182.3 178.0L182.3 177.4L182.3 177.0L182.3 176.3L182.3 176.0L182.3 175.9L182.3 176.0L182.3 176.3L182.3 176.8L182.3 177.3L182.3 178.1L182.3 178.6L182.3 179.3L182.3 179.7L182.3 180.0L182.3 180.2L182.3 180.0L182.3 179.7L182.3 179.5L182.4 179.0L182.4 178.6L182.4 178.4L182.4 178.1L182.4 178.0L182.4 178.1L182.4 178.4L182.4 178.6L182.4 179.0L182.4 179.4L182.4 179.7L182.4 180.0L182.4 180.2L182.4 180.1L182.4 180.0L182.4 179.8L182.4 179.3L182.4 178.6L182.5 178.1L182.5 177.6L182.5 177.3L182.5 176.8L182.5 176.5L182.5 176.6L182.5 176.8L182.5 177.3L182.5 177.7L182.5 178.0L182.5 178.6L182.5 179.0L182.5 179.3L182.5 179.5L182.5 179.7L182.5 179.8L182.5 179.7L182.5 179.6L182.5 179.4L182.5 179.3L182.6 179.1L182.6 178.8L182.6 178.6L182.6 178.3L182.6 178.1L182.6 178.0L182.6 178.1L182.6 178.3L182.6 178.7L182.6 178.8L182.6 179.1L182.6 179.2L182.6 179.5L182.6 179.6L182.6 179.7L182.6 179.5L182.6 179.4L182.6 178.9L182.6 178.6L182.6 178.1L182.7 177.7L182.7 177.3L182.7 176.5L182.7 176.0L182.7 175.5L182.7 175.4L182.7 175.5L182.7 175.8L182.7 176.2L182.7 176.7L182.7 177.3L182.7 177.8L182.7 178.4L182.7 178.8L182.7 179.4L182.7 179.7L182.7 179.9L182.7 180.0L182.7 179.9L182.7 179.8L182.8 179.7L182.8 179.5L182.8 179.3L182.8 179.2L182.8 178.9L182.8 178.7L182.8 178.6L182.8 178.5L182.8 178.6L182.8 178.7L182.8 178.8L182.8 179.1L182.8 179.2L182.8 179.4L182.8 179.6L182.8 179.8L182.8 180.0L182.8 180.1L182.8 180.2L182.8 180.3L182.8 180.2L182.8 180.1L182.9 180.1L182.9 179.9L182.9 179.8L182.9 179.6L182.9 179.4L182.9 179.2L182.9 179.1L182.9 179.0L182.9 179.1L182.9 179.2L182.9 179.4L182.9 179.6L182.9 179.8L182.9 180.0L182.9 180.2L182.9 180.1L183.0 180.0L183.0 179.9L183.0 179.7L183.0 179.6L183.0 179.4L183.0 179.3L183.0 179.2L183.0 179.3L183.0 179.5L183.0 179.7L183.0 179.8L183.0 179.9L183.0 180.0L183.0 180.2L183.0 180.3L183.0 180.2L183.0 179.9L183.1 179.5L183.1 179.1L183.1 178.5L183.1 177.7L183.1 176.7L183.1 176.2L183.1 175.6L183.1 175.4L183.1 175.7L183.1 175.9L183.1 176.7L183.1 177.6L183.1 178.6L183.1 179.5L183.1 179.9L183.1 180.2L183.1 180.3L183.1 180.4L183.1 180.3L183.1 180.1L183.1 179.9L183.2 179.4L183.2 178.6L183.2 177.9L183.2 177.4L183.2 177.0L183.2 176.6L183.2 176.2L183.2 176.1L183.2 176.3L183.2 176.6L183.2 177.2L183.2 177.5L183.2 178.4L183.2 179.1L183.2 179.5L183.2 180.0L183.2 180.3L183.2 180.4L183.2 180.3L183.2 180.1L183.3 179.6L183.3 179.2L183.3 178.5L183.3 178.0L183.3 177.4L183.3 176.9L183.3 176.4L183.3 176.2L183.3 176.5L183.3 176.8L183.3 177.5L183.3 178.2L183.3 178.9L183.3 179.3L183.3 179.7L183.3 179.9L183.3 180.1L183.3 180.0L183.3 179.9L183.3 179.6L183.3 179.2L183.4 178.5L183.4 177.4L183.4 176.8L183.4 176.2L183.4 175.6L183.4 175.3L183.4 175.1L183.4 174.9L183.4 175.1L183.4 175.6L183.4 176.4L183.4 177.2L183.4 177.8L183.4 178.6L183.4 179.4L183.4 179.7L183.4 179.9L183.4 180.0L183.4 179.9L183.4 179.7L183.4 179.2L183.4 178.7L183.4 178.0L183.5 177.5L183.5 176.9L183.5 176.5L183.5 176.2L183.5 176.0L183.5 176.3L183.5 176.7L183.5 177.0L183.5 177.5L183.5 178.2L183.5 178.6L183.5 179.4L183.5 179.9L183.5 180.1L183.5 180.3L183.5 180.2L183.5 180.0L183.5 179.9L183.5 179.7L183.6 179.6L183.6 179.5L183.6 179.3L183.6 179.2L183.6 179.3L183.6 179.4L183.6 179.5L183.6 179.7L183.6 180.0L183.6 180.1L183.6 180.3L183.6 180.4L183.6 180.3L183.6 180.2L183.6 179.9L183.6 179.7L183.6 179.6L183.6 179.4L183.7 179.3L183.7 179.2L183.7 179.1L183.7 179.0L183.7 179.1L183.7 179.2L183.7 179.3L183.7 179.4L183.7 179.6L183.7 179.8L183.7 180.0L183.7 180.1L183.7 180.2L183.7 180.3L183.7 180.2L183.7 180.1L183.7 179.9L183.7 179.7L183.7 179.6L183.7 179.3L183.8 179.2L183.8 179.1L183.8 179.2L183.8 179.4L183.8 179.5L183.8 179.7L183.8 179.8L183.8 180.0L183.8 180.2L183.8 180.3L183.8 180.2L183.8 180.1L183.8 179.9L183.8 179.6L183.8 179.5L183.8 179.2L183.9 179.1L183.9 179.0L183.9 178.9L183.9 179.0L183.9 179.1L183.9 179.3L183.9 179.5L183.9 179.8L183.9 179.9L183.9 180.1L183.9 180.2L183.9 180.3L183.9 180.4L183.9 180.3L183.9 180.2L183.9 180.1L183.9 179.9L183.9 179.8L183.9 179.6L183.9 179.4L183.9 179.1L184.0 178.9L184.0 179.0L184.0 179.1L184.0 179.3L184.0 179.5L184.0 179.8L184.0 179.9L184.0 180.1L184.0 180.2L184.0 180.1L184.0 180.0L184.0 179.8L184.0 179.6L184.0 179.4L184.0 179.1L184.0 178.8L184.1 178.4L184.1 178.2L184.1 178.3L184.1 178.5L184.1 178.8L184.1 179.1L184.1 179.3L184.1 179.7L184.1 179.9L184.1 180.1L184.1 180.2L184.1 180.1L184.1 180.0L184.1 179.9L184.1 179.5L184.1 179.2L184.1 178.8L184.1 178.4L184.1 178.2L184.2 178.1L184.2 178.0L184.2 177.9L184.2 178.0L184.2 178.1L184.2 178.4L184.2 178.6L184.2 178.8L184.2 179.2L184.2 179.6L184.2 179.9L184.2 180.0L184.2 180.2L184.2 180.3L184.2 180.0L184.2 179.7L184.2 179.3L184.2 178.9L184.2 178.5L184.2 177.9L184.2 177.5L184.3 177.2L184.3 177.0L184.3 176.9L184.3 177.0L184.3 177.4L184.3 177.9L184.3 178.6L184.3 179.0L184.3 179.3L184.3 179.7L184.3 179.9L184.3 180.2L184.3 180.3L184.3 180.2L184.3 180.0L184.3 179.8L184.3 179.5L184.3 178.9L184.3 178.4L184.3 178.1L184.3 177.6L184.4 177.4L184.4 177.3L184.4 177.4L184.4 177.6L184.4 177.9L184.4 178.3L184.4 178.8L184.4 179.3L184.4 179.6L184.4 179.8L184.4 180.0L184.4 180.3L184.4 180.4L184.4 180.3L184.4 180.1L184.4 179.7L184.4 179.1L184.4 178.3L184.4 177.7L184.4 177.3L184.4 176.7L184.4 176.2L184.5 176.0L184.5 176.1L184.5 176.2L184.5 176.4L184.5 177.0L184.5 177.6L184.5 178.0L184.5 178.4L184.5 179.0L184.5 179.4L184.5 179.8L184.5 180.0L184.5 180.1L184.5 180.0L184.5 179.9L184.5 179.8L184.5 179.6L184.5 179.3L184.5 179.1L184.5 178.7L184.5 178.3L184.5 177.9L184.5 177.7L184.5 177.6L184.6 177.5L184.6 177.7L184.6 178.0L184.6 178.2L184.6 178.7L184.6 179.0L184.6 179.4L184.6 179.8L184.6 180.0L184.6 180.2L184.6 180.3L184.6 180.4L184.6 180.3L184.6 180.1L184.6 179.7L184.6 179.4L184.6 178.8L184.6 177.7L184.6 177.2L184.6 176.4L184.6 175.7L184.6 175.1L184.7 174.8L184.7 174.9L184.7 175.2L184.7 175.9L184.7 176.8L184.7 177.9L184.7 178.4L184.7 178.9L184.7 179.4L184.7 179.7L184.7 179.9L184.7 179.8L184.7 179.6L184.7 179.2L184.7 178.7L184.7 177.9L184.7 177.3L184.7 176.7L184.7 176.4L184.7 176.2L184.7 176.0L184.8 176.2L184.8 176.7L184.8 177.1L184.8 177.5L184.8 178.2L184.8 178.7L184.8 179.2L184.8 179.5L184.8 179.7L184.8 179.6L184.8 179.5L184.8 179.4L184.8 179.3L184.8 179.2L184.8 179.1L184.8 179.2L184.8 179.3L184.8 179.5L184.8 179.7L184.9 179.8L184.9 179.9L184.9 180.1L184.9 180.2L184.9 180.3L184.9 180.2L184.9 180.0L184.9 179.7L184.9 179.2L184.9 178.6L184.9 178.2L184.9 177.8L184.9 177.6L184.9 177.5L184.9 177.6L184.9 177.7L184.9 177.9L184.9 178.3L184.9 178.8L184.9 179.3L184.9 179.6L184.9 179.9L184.9 180.1L185.0 180.2L185.0 180.1L185.0 180.0L185.0 179.7L185.0 179.3L185.0 179.0L185.0 178.7L185.0 178.5L185.0 178.2L185.0 178.0L185.0 178.1L185.0 178.4L185.0 178.6L185.0 179.0L185.0 179.3L185.0 179.6L185.0 179.8L185.1 179.8L185.1 179.6L185.1 179.4L185.1 179.1L185.1 178.8L185.1 178.0L185.1 177.2L185.1 176.9L185.1 176.4L185.1 176.1L185.1 175.9L185.1 176.0L185.1 176.5L185.1 177.2L185.1 177.7L185.1 178.5L185.1 179.2L185.1 179.7L185.1 179.9L185.1 180.0L185.1 179.9L185.2 179.8L185.2 179.7L185.2 179.6L185.2 179.5L185.2 179.3L185.2 179.2L185.2 179.1L185.2 179.0L185.2 179.1L185.2 179.2L185.2 179.4L185.2 179.5L185.2 179.8L185.2 180.0L185.2 180.1L185.2 180.2L185.2 180.3L185.2 180.4L185.2 180.3L185.2 180.0L185.2 179.6L185.2 178.9L185.3 178.0L185.3 177.3L185.3 176.7L185.3 176.2L185.3 175.7L185.3 175.5L185.3 175.7L185.3 175.9L185.3 176.6L185.3 177.4L185.3 178.2L185.3 178.8L185.3 179.1L185.3 179.4L185.3 179.7L185.3 179.6L185.3 179.5L185.3 179.2L185.3 178.9L185.3 178.3L185.3 177.7L185.3 177.4L185.4 177.1L185.4 176.8L185.4 176.7L185.4 176.9L185.4 177.1L185.4 177.6L185.4 178.2L185.4 178.8L185.4 179.3L185.4 179.9L185.4 180.1L185.4 180.3L185.4 180.4L185.4 180.3L185.4 180.0L185.4 179.6L185.4 179.2L185.4 178.7L185.4 177.9L185.4 177.0L185.4 176.3L185.4 175.8L185.4 175.6L185.5 175.6L185.5 176.0L185.5 176.6L185.5 177.0L185.5 177.8L185.5 178.7L185.5 179.4L185.5 179.7L185.5 179.9L185.5 180.0L185.5 179.9L185.5 179.8L185.5 179.6L185.5 179.2L185.5 178.9L185.5 178.6L185.5 178.3L185.5 178.1L185.5 177.9L185.5 178.1L185.5 178.3L185.5 178.6L185.5 179.0L185.6 179.3L185.6 179.7L185.6 179.9L185.6 180.0L185.6 180.2L185.6 180.3L185.6 180.2L185.6 180.1L185.6 179.8L185.6 179.5L185.6 178.9L185.6 178.1L185.6 177.5L185.6 176.6L185.6 175.8L185.6 175.4L185.6 175.5L185.6 175.8L185.6 176.5L185.6 176.9L185.6 177.4L185.6 178.2L185.6 178.7L185.7 179.1L185.7 179.6L185.7 179.8L185.7 179.7L185.7 179.5L185.7 179.4L185.7 179.2L185.7 179.1L185.7 179.0L185.7 179.1L185.7 179.2L185.7 179.3L185.7 179.5L185.7 179.7L185.7 179.9L185.7 180.0L185.7 180.1L185.8 180.2L185.8 180.3L185.8 180.1L185.8 179.9L185.8 179.5L185.8 179.1L185.8 178.7L185.8 178.1L185.8 177.4L185.8 176.8L185.8 176.5L185.8 176.4L185.8 176.3L185.8 176.4L185.8 176.6L185.8 176.9L185.8 177.3L185.8 177.9L185.8 178.6L185.8 179.1L185.8 179.5L185.8 179.8L185.8 179.9L185.9 180.0L185.9 179.9L185.9 179.7L185.9 179.5L185.9 179.3L185.9 179.0L185.9 178.9L185.9 178.8L185.9 178.9L185.9 179.0L185.9 179.2L185.9 179.4L185.9 179.5L185.9 179.7L185.9 179.9L185.9 180.0L185.9 179.8L185.9 179.5L186.0 179.1L186.0 178.5L186.0 177.7L186.0 176.9L186.0 176.3L186.0 175.9L186.0 175.7L186.0 175.5L186.0 175.7L186.0 176.2L186.0 176.9L186.0 177.4L186.0 178.2L186.0 178.7L186.0 179.4L186.0 179.8L186.0 180.0L186.0 180.1L186.0 179.9L186.0 179.8L186.0 179.5L186.0 179.1L186.0 178.7L186.0 178.4L186.1 178.2L186.1 178.0L186.1 178.2L186.1 178.4L186.1 178.8L186.1 179.2L186.1 179.4L186.1 179.7L186.1 179.9L186.1 180.0L186.1 180.1L186.1 180.0L186.1 179.8L186.1 179.5L186.1 178.9L186.1 178.5L186.1 178.0L186.1 177.5L186.1 177.0L186.1 176.8L186.1 177.0L186.1 177.2L186.1 177.6L186.2 177.9L186.2 178.4L186.2 179.1L186.2 179.5L186.2 179.7L186.2 179.9L186.2 180.0L186.2 180.1L186.2 180.0L186.2 179.9L186.2 179.8L186.2 179.6L186.2 179.4L186.2 179.1L186.2 178.8L186.2 178.5L186.2 178.3L186.2 178.2L186.2 178.1L186.2 178.2L186.2 178.4L186.2 178.6L186.2 179.0L186.2 179.2L186.2 179.5L186.3 179.7L186.3 179.9L186.3 180.1L186.3 180.2L186.3 180.1L186.3 179.9L186.3 179.7L186.3 179.1L186.3 178.8L186.3 178.4L186.3 177.8L186.3 177.3L186.3 177.0L186.3 176.8L186.3 176.7L186.3 176.9L186.3 177.2L186.3 177.7L186.3 178.0L186.3 178.6L186.3 179.2L186.3 179.5L186.4 179.9L186.4 180.0L186.4 179.9L186.4 179.4L186.4 178.1L186.4 176.2L186.4 175.3" stroke="#780000" stroke-width="0.8" fill="none" stroke-linejoin="round"/></svg>
<div class="t" style="left:44.65px;top:628px;font-size:6.6px;color:#222;transform:scaleX(0.8500)">0.0</div>
<div class="r" style="left:55.25px;top:629.70px;width:3.00px;height:1.00px;background:#555;"></div>
<div class="t" style="left:44.65px;top:610px;font-size:6.6px;color:#222;transform:scaleX(0.8500)">1.5</div>
<div class="r" style="left:55.25px;top:611.64px;width:3.00px;height:1.00px;background:#555;"></div>
<div class="t" style="left:44.65px;top:591px;font-size:6.6px;color:#222;transform:scaleX(0.8500)">3.0</div>
<div class="r" style="left:55.25px;top:593.58px;width:3.00px;height:1.00px;background:#555;"></div>
<div class="t" style="left:44.65px;top:573px;font-size:6.6px;color:#222;transform:scaleX(0.8500)">4.5</div>
<div class="r" style="left:55.25px;top:575.52px;width:3.00px;height:1.00px;background:#555;"></div>
<div class="t" style="left:44.65px;top:555px;font-size:6.6px;color:#222;transform:scaleX(0.8500)">6.0</div>
<div class="r" style="left:55.25px;top:557.46px;width:3.00px;height:1.00px;background:#555;"></div>
<div class="t" style="left:44.65px;top:537px;font-size:6.6px;color:#222;transform:scaleX(0.8500)">7.5</div>
<div class="r" style="left:55.25px;top:539.40px;width:3.00px;height:1.00px;background:#555;"></div>
<div class="t" style="left:44.65px;top:519px;font-size:6.6px;color:#222;transform:scaleX(0.8500)">9.0</div>
<div class="r" style="left:55.25px;top:521.34px;width:3.00px;height:1.00px;background:#555;"></div>
<div class="t" style="left:41.53px;top:501px;font-size:6.6px;color:#222;transform:scaleX(0.8500)">10.5</div>
<div class="r" style="left:55.25px;top:503.28px;width:3.00px;height:1.00px;background:#555;"></div>
<div class="t" style="left:41.53px;top:483px;font-size:6.6px;color:#222;transform:scaleX(0.8500)">12.0</div>
<div class="r" style="left:55.25px;top:485.22px;width:3.00px;height:1.00px;background:#555;"></div>
<div class="t" style="left:41.53px;top:465px;font-size:6.6px;color:#222;transform:scaleX(0.8500)">13.5</div>
<div class="r" style="left:55.25px;top:467.16px;width:3.00px;height:1.00px;background:#555;"></div>
<div class="t" style="left:41.53px;top:447px;font-size:6.6px;color:#222;transform:scaleX(0.8500)">15.0</div>
<div class="r" style="left:55.25px;top:449.10px;width:3.00px;height:1.00px;background:#555;"></div>
<div class="t" style="left:51.35px;top:637px;font-size:6.6px;color:#222;transform:scaleX(0.8403)">1E-02</div>
<div class="r" style="left:58.25px;top:630.20px;width:1.00px;height:3.50px;background:#555;"></div>
<div class="t" style="left:106.24px;top:637px;font-size:6.6px;color:#222;transform:scaleX(0.8403)">1E-01</div>
<div class="r" style="left:113.14px;top:630.20px;width:1.00px;height:3.50px;background:#555;"></div>
<div class="t" style="left:161.12px;top:637px;font-size:6.6px;color:#222;transform:scaleX(0.7681)">1E+00</div>
<div class="r" style="left:168.03px;top:630.20px;width:1.00px;height:3.50px;background:#555;"></div>
<div class="t" style="left:216.01px;top:637px;font-size:6.6px;color:#222;transform:scaleX(0.7681)">1E+01</div>
<div class="r" style="left:222.91px;top:630.20px;width:1.00px;height:3.50px;background:#555;"></div>
<div class="t" style="left:270.90px;top:637px;font-size:6.6px;color:#222;transform:scaleX(0.7681)">1E+02</div>
<div class="r" style="left:277.80px;top:630.20px;width:1.00px;height:3.50px;background:#555;"></div>
<div class="t" style="left:340.10px;top:628px;font-size:6.6px;color:#222;transform:scaleX(0.8500)">0.0</div>
<div class="r" style="left:350.70px;top:629.70px;width:3.00px;height:1.00px;background:#555;"></div>
<div class="t" style="left:340.10px;top:610px;font-size:6.6px;color:#222;transform:scaleX(0.8500)">3.0</div>
<div class="r" style="left:350.70px;top:611.64px;width:3.00px;height:1.00px;background:#555;"></div>
<div class="t" style="left:340.10px;top:591px;font-size:6.6px;color:#222;transform:scaleX(0.8500)">6.0</div>
<div class="r" style="left:350.70px;top:593.58px;width:3.00px;height:1.00px;background:#555;"></div>
<div class="t" style="left:340.10px;top:573px;font-size:6.6px;color:#222;transform:scaleX(0.8500)">9.0</div>
<div class="r" style="left:350.70px;top:575.52px;width:3.00px;height:1.00px;background:#555;"></div>
<div class="t" style="left:336.98px;top:555px;font-size:6.6px;color:#222;transform:scaleX(0.8500)">12.0</div>
<div class="r" style="left:350.70px;top:557.46px;width:3.00px;height:1.00px;background:#555;"></div>
<div class="t" style="left:336.98px;top:537px;font-size:6.6px;color:#222;transform:scaleX(0.8500)">15.0</div>
<div class="r" style="left:350.70px;top:539.40px;width:3.00px;height:1.00px;background:#555;"></div>
<div class="t" style="left:336.98px;top:519px;font-size:6.6px;color:#222;transform:scaleX(0.8500)">18.0</div>
<div class="r" style="left:350.70px;top:521.34px;width:3.00px;height:1.00px;background:#555;"></div>
<div class="t" style="left:336.98px;top:501px;font-size:6.6px;color:#222;transform:scaleX(0.8500)">21.0</div>
<div class="r" style="left:350.70px;top:503.28px;width:3.00px;height:1.00px;background:#555;"></div>
<div class="t" style="left:336.98px;top:483px;font-size:6.6px;color:#222;transform:scaleX(0.8500)">24.0</div>
<div class="r" style="left:350.70px;top:485.22px;width:3.00px;height:1.00px;background:#555;"></div>
<div class="t" style="left:336.98px;top:465px;font-size:6.6px;color:#222;transform:scaleX(0.8500)">27.0</div>
<div class="r" style="left:350.70px;top:467.16px;width:3.00px;height:1.00px;background:#555;"></div>
<div class="t" style="left:336.98px;top:447px;font-size:6.6px;color:#222;transform:scaleX(0.8500)">30.0</div>
<div class="r" style="left:350.70px;top:449.10px;width:3.00px;height:1.00px;background:#555;"></div>
<div class="t" style="left:346.80px;top:637px;font-size:6.6px;color:#222;transform:scaleX(0.8403)">1E-02</div>
<div class="r" style="left:353.70px;top:630.20px;width:1.00px;height:3.50px;background:#555;"></div>
<div class="t" style="left:401.65px;top:637px;font-size:6.6px;color:#222;transform:scaleX(0.8403)">1E-01</div>
<div class="r" style="left:408.55px;top:630.20px;width:1.00px;height:3.50px;background:#555;"></div>
<div class="t" style="left:456.50px;top:637px;font-size:6.6px;color:#222;transform:scaleX(0.7681)">1E+00</div>
<div class="r" style="left:463.40px;top:630.20px;width:1.00px;height:3.50px;background:#555;"></div>
<div class="t" style="left:511.35px;top:637px;font-size:6.6px;color:#222;transform:scaleX(0.7681)">1E+01</div>
<div class="r" style="left:518.25px;top:630.20px;width:1.00px;height:3.50px;background:#555;"></div>
<div class="t" style="left:566.20px;top:637px;font-size:6.6px;color:#222;transform:scaleX(0.7681)">1E+02</div>
<div class="r" style="left:573.10px;top:630.20px;width:1.00px;height:3.50px;background:#555;"></div>
<div class="r" style="left:37.80px;top:663.30px;width:264.70px;height:12.50px;background:#ececec;border:1px solid #d4d4d4;box-sizing:border-box;border-top:1px solid #a0a0a0;"></div>
<div class="r" style="left:333.00px;top:664.30px;width:253.80px;height:11.70px;background:#ececec;border:1px solid #d4d4d4;box-sizing:border-box;border-top:1px solid #a0a0a0;"></div>
<div class="r" style="left:16.00px;top:703.00px;width:584.00px;height:25.00px;border:1px solid #dfdfdf;box-sizing:border-box;"></div>
<div class="r" style="left:18.90px;top:700.30px;width:111.00px;height:6.00px;background:#f0f0f0;"></div>
<div class="t" style="left:20.90px;top:700px;font-size:7.6px;color:#2c2ca6;transform:scaleX(0.8443)">Frequency Content Plot Axes Options</div>
<svg class="r" style="left:33.10px;top:712.40px" width="10.0" height="10.0"><circle cx="5.00" cy="5.00" r="3.50" fill="#fff" stroke="#5a5a5a" stroke-width="1.1"/></svg>
<div class="t" style="left:45.70px;top:714px;font-size:7.4px;color:#1c1c1c;transform:scaleX(0.8899)">X Logarthm - Y Logarthm</div>
<svg class="r" style="left:187.30px;top:712.40px" width="10.0" height="10.0"><circle cx="5.00" cy="5.00" r="3.50" fill="#fff" stroke="#5a5a5a" stroke-width="1.1"/><circle cx="5.00" cy="5.00" r="2.00" fill="#222"/></svg>
<div class="t" style="left:199.70px;top:714px;font-size:7.4px;color:#1c1c1c;transform:scaleX(0.8790)">X Logarthm - Y Linear</div>
<svg class="r" style="left:340.00px;top:712.40px" width="10.0" height="10.0"><circle cx="5.00" cy="5.00" r="3.50" fill="#fff" stroke="#5a5a5a" stroke-width="1.1"/></svg>
<div class="t" style="left:352.80px;top:714px;font-size:7.4px;color:#1c1c1c;transform:scaleX(0.8790)">X Linear - Y Logarthm</div>
<svg class="r" style="left:493.50px;top:712.40px" width="10.0" height="10.0"><circle cx="5.00" cy="5.00" r="3.50" fill="#fff" stroke="#5a5a5a" stroke-width="1.1"/></svg>
<div class="t" style="left:506.40px;top:714px;font-size:7.4px;color:#1c1c1c;transform:scaleX(0.8676)">X Linear - Y Linear</div>
<div class="r" style="left:296.40px;top:730.00px;width:40.60px;height:13.80px;background:#e1e1e1;border:1px solid #adadad;box-sizing:border-box;"></div>
<div class="t" style="left:308.80px;top:734px;font-size:7.6px;color:#1c1c1c;transform:scaleX(0.8131)">Close</div>
</body></html>
